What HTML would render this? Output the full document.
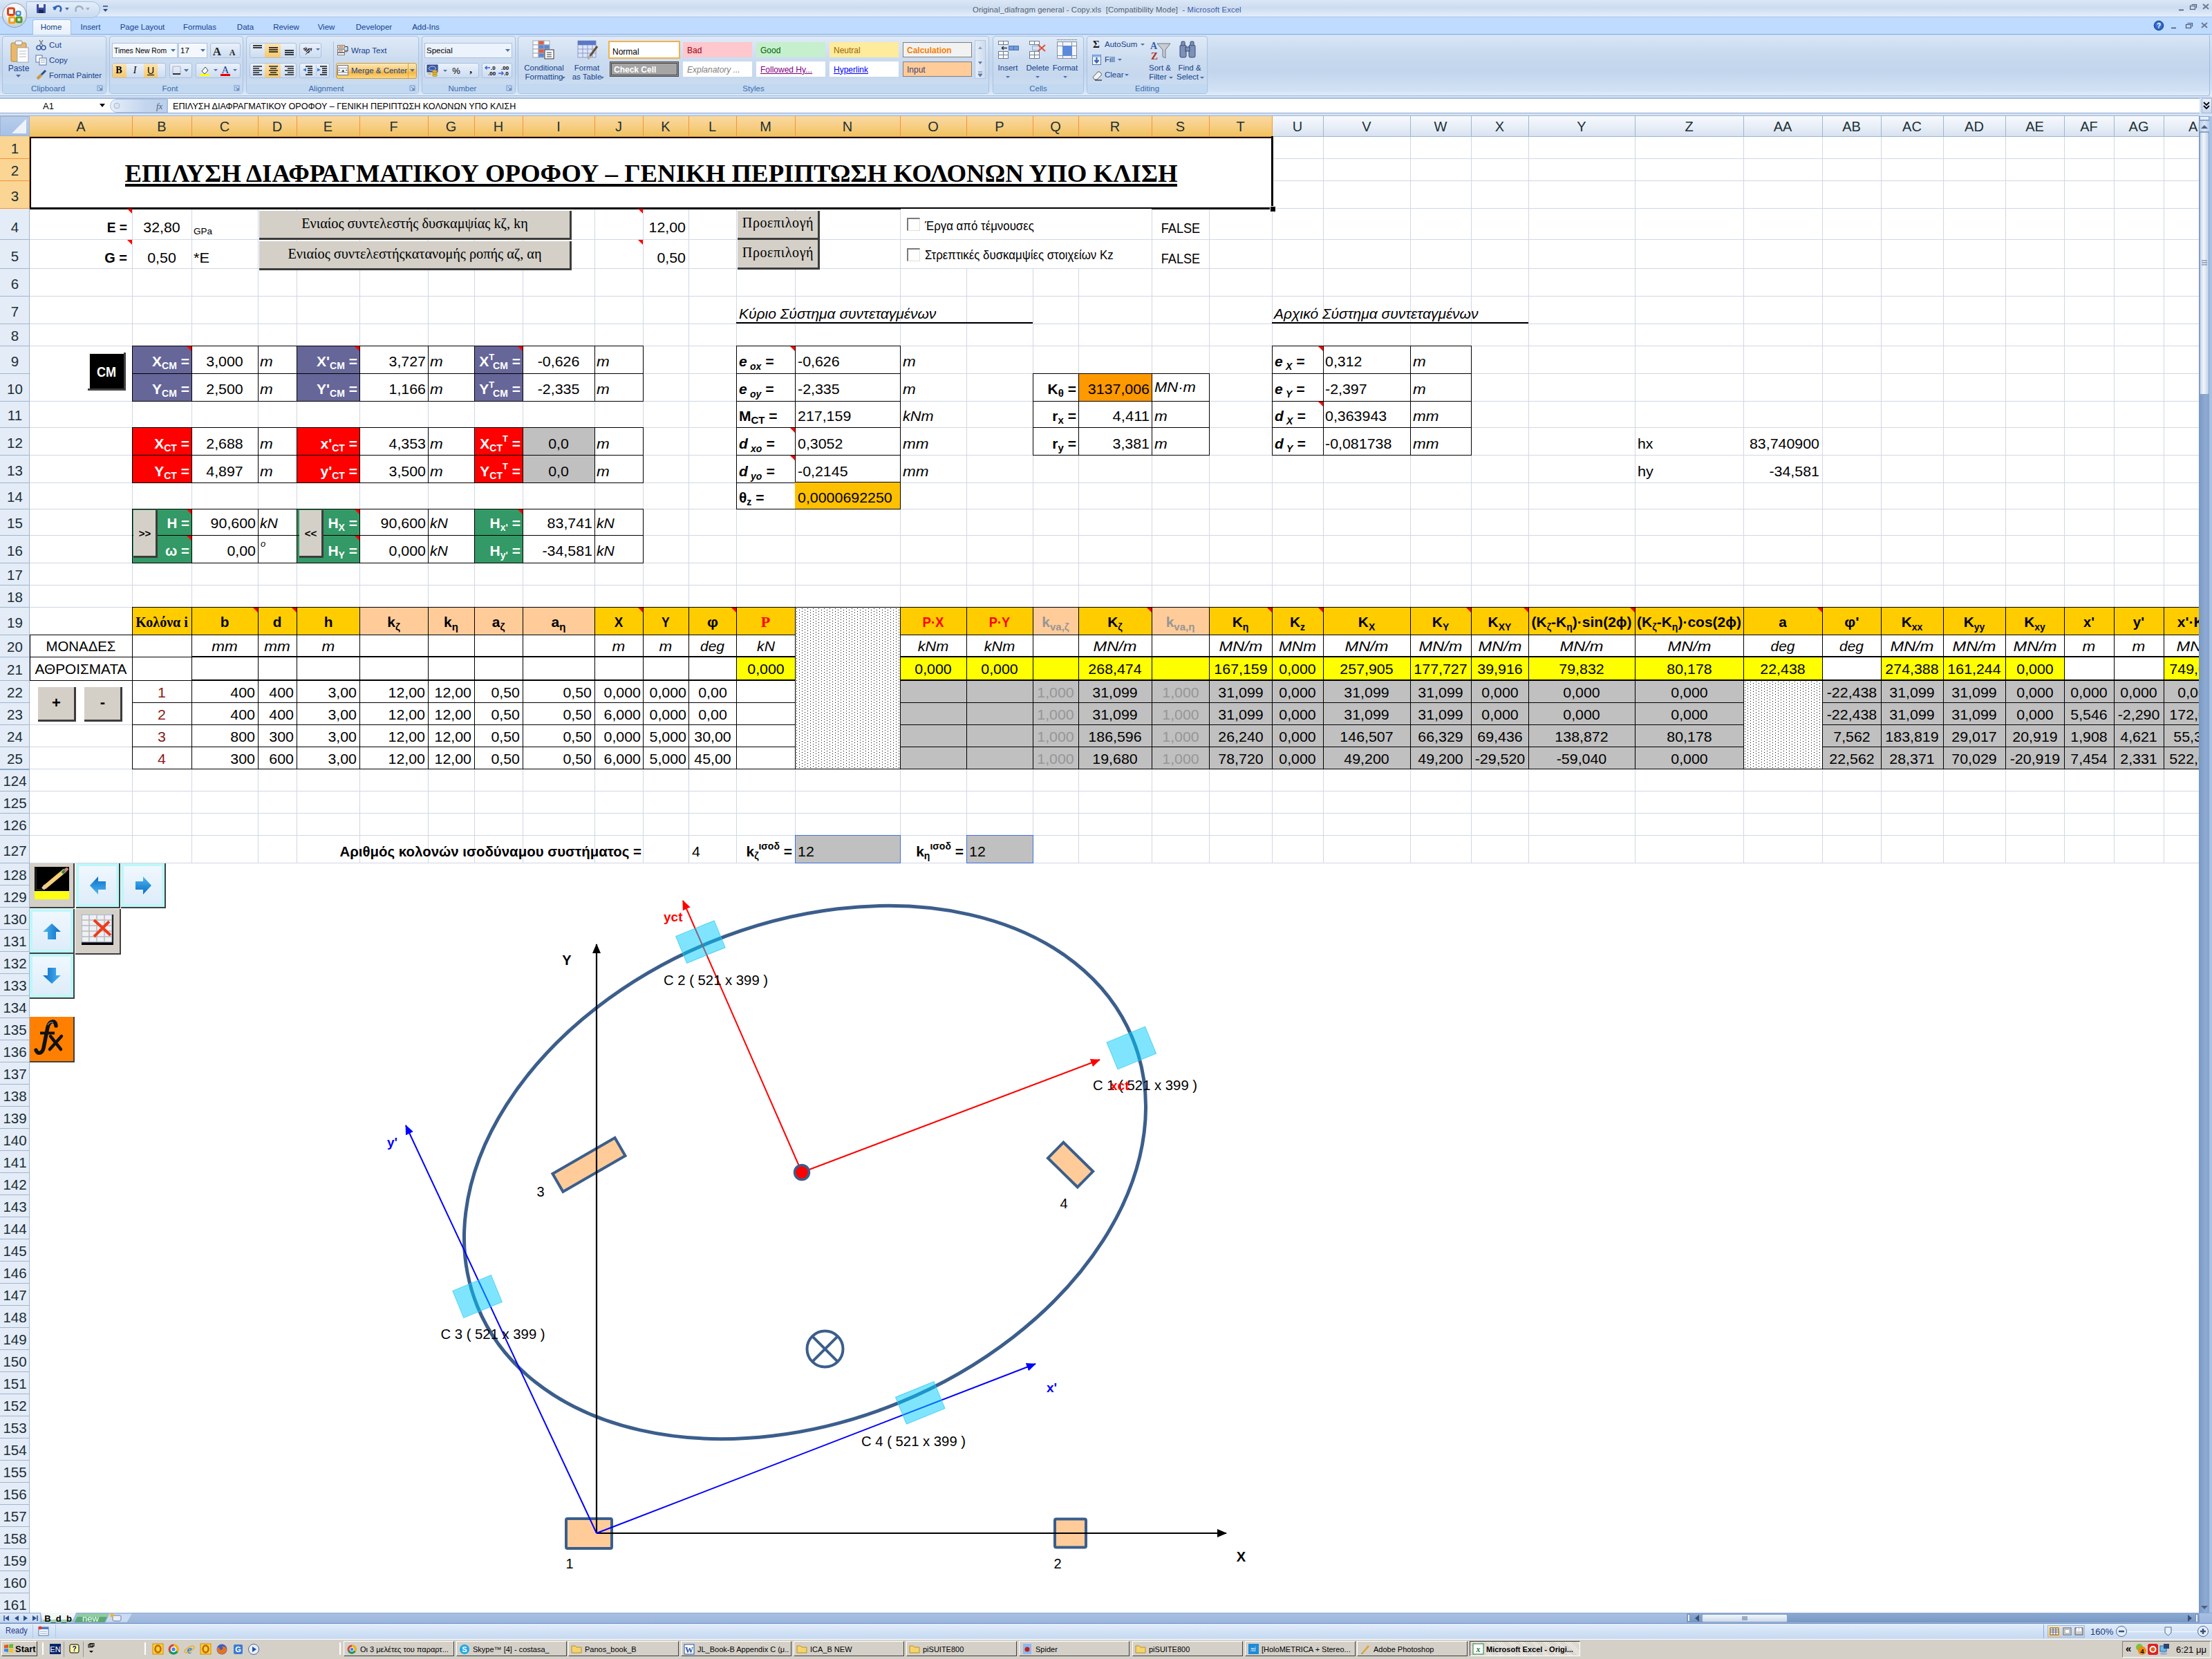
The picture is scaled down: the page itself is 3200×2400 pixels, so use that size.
<!DOCTYPE html><html><head><meta charset="utf-8"><style>html,body{margin:0;padding:0;width:3200px;height:2400px;overflow:hidden;background:#fff;position:relative;font-family:"Liberation Sans",sans-serif}</style></head><body><div style="position:absolute;left:0px;top:0px;width:3200px;height:25px;background:linear-gradient(#DBE7F6 0%,#CCDCF0 45%,#DDE9F8 80%,#E6F0FB 100%)"></div>
<div style="position:absolute;left:0px;top:24px;width:3200px;height:1px;background:#A9C4E8"></div>
<div style="position:absolute;left:0px;top:25px;width:3200px;height:25px;background:#BFDBFF"></div>
<div style="position:absolute;left:0px;top:49px;width:3200px;height:1px;background:#8DB2E3"></div>
<div style="position:absolute;left:38px;top:2px;width:105px;height:22px;background:linear-gradient(#E4EEFA,#C9DAF0);border:1px solid #A9C1E2;border-radius:0 12px 12px 0"></div>
<div style="position:absolute;left:53px;top:6px;width:13px;height:13px;background:#3A4FA8;border-radius:1px"></div>
<div style="position:absolute;left:56px;top:6px;width:7px;height:5px;background:#E8ECF6"></div>
<div style="position:absolute;left:56px;top:14px;width:7px;height:5px;background:#20284A"></div>
<svg style="position:absolute;left:74px;top:5px" width="60" height="16"><path d="M4 9 Q6 3 12 4 Q16 6 13 12" stroke="#2F64B8" stroke-width="2.5" fill="none"/><path d="M2 5 L6 10 L9 4Z" fill="#2F64B8"/><path d="M20 6 L26 6 L23 10Z" fill="#4A6FA8"/><path d="M36 12 Q34 5 40 4 Q45 4 46 9" stroke="#9FB1C9" stroke-width="2.5" fill="none"/><path d="M50 6 L56 6 L53 10Z" fill="#9FB1C9"/></svg>
<svg style="position:absolute;left:148px;top:7px" width="10" height="12"><path d="M1 2 H8" stroke="#2A4A7A" stroke-width="1.5"/><path d="M1 6 L8 6 L4.5 10Z" fill="#2A4A7A"/></svg>
<div style="position:absolute;left:3px;top:4px;width:36px;height:36px;border-radius:50%;background:radial-gradient(circle at 50% 30%,#FFFFFF 0%,#EEF2F8 45%,#C5D0DE 75%,#F4F7FB 100%);border:1px solid #8A98AC;box-sizing:border-box"></div>
<svg style="position:absolute;left:0px;top:0px" width="44" height="44"><rect x="11.5" y="12" width="9" height="9.5" rx="2" fill="none" stroke="#D9441C" stroke-width="3"/><rect x="23.5" y="16.5" width="6" height="5.5" rx="1.5" fill="none" stroke="#2E8FDA" stroke-width="2.2"/><rect x="13.5" y="25" width="8" height="8" rx="2" fill="none" stroke="#F2A10F" stroke-width="3"/><rect x="24" y="25" width="7" height="7" rx="1.5" fill="none" stroke="#4E9A2A" stroke-width="3"/><circle cx="20.5" cy="21.5" r="1" fill="#E86A20"/><circle cx="24.5" cy="21.5" r="1" fill="#2E8FDA"/><circle cx="20.5" cy="25" r="1" fill="#F2B020"/><circle cx="24.5" cy="25" r="1" fill="#5DAA2E"/></svg>
<div style="position:absolute;left:1407.0px;top:8.8px;width:600px;height:13.8px;line-height:11.5px;font-size:11.5px;font-family:'Liberation Sans', sans-serif;text-align:left;white-space:nowrap;transform:scaleX(0.983);transform-origin:0% 50%;color:#555E6C;letter-spacing:0.1px">Original_diafragm general - Copy.xls&nbsp;&nbsp;[Compatibility Mode]&nbsp; - <span style="color:#3B5BA8">Microsoft Excel</span></div>
<svg style="position:absolute;left:3148px;top:2px" width="52" height="16"><path d="M4 12.5 H11" stroke="#4A5A78" stroke-width="1.6"/><rect x="20.5" y="6.5" width="7" height="5" fill="none" stroke="#4A5A78" stroke-width="1.2"/><path d="M22.5 4.5 H29.5 V9.5" fill="none" stroke="#4A5A78" stroke-width="1.2"/><path d="M39 4 L47 11 M47 4 L39 11" stroke="#6A778E" stroke-width="1.8"/></svg>
<div style="position:absolute;left:47px;top:28px;width:54px;height:23px;background:linear-gradient(#F6F9FE,#E6EFFA);border:1px solid #A3BEE3;border-bottom:none;border-radius:3px 3px 0 0"></div>
<div style="position:absolute;left:14.0px;top:34.3px;width:120px;height:13.8px;line-height:11.5px;font-size:11.5px;font-family:'Liberation Sans', sans-serif;text-align:center;white-space:nowrap;color:#15428B">Home</div>
<div style="position:absolute;left:71.0px;top:34.3px;width:120px;height:13.8px;line-height:11.5px;font-size:11.5px;font-family:'Liberation Sans', sans-serif;text-align:center;white-space:nowrap;color:#15428B">Insert</div>
<div style="position:absolute;left:146.0px;top:34.3px;width:120px;height:13.8px;line-height:11.5px;font-size:11.5px;font-family:'Liberation Sans', sans-serif;text-align:center;white-space:nowrap;color:#15428B">Page Layout</div>
<div style="position:absolute;left:229.0px;top:34.3px;width:120px;height:13.8px;line-height:11.5px;font-size:11.5px;font-family:'Liberation Sans', sans-serif;text-align:center;white-space:nowrap;color:#15428B">Formulas</div>
<div style="position:absolute;left:295.0px;top:34.3px;width:120px;height:13.8px;line-height:11.5px;font-size:11.5px;font-family:'Liberation Sans', sans-serif;text-align:center;white-space:nowrap;color:#15428B">Data</div>
<div style="position:absolute;left:354.0px;top:34.3px;width:120px;height:13.8px;line-height:11.5px;font-size:11.5px;font-family:'Liberation Sans', sans-serif;text-align:center;white-space:nowrap;color:#15428B">Review</div>
<div style="position:absolute;left:412.0px;top:34.3px;width:120px;height:13.8px;line-height:11.5px;font-size:11.5px;font-family:'Liberation Sans', sans-serif;text-align:center;white-space:nowrap;color:#15428B">View</div>
<div style="position:absolute;left:481.0px;top:34.3px;width:120px;height:13.8px;line-height:11.5px;font-size:11.5px;font-family:'Liberation Sans', sans-serif;text-align:center;white-space:nowrap;color:#15428B">Developer</div>
<div style="position:absolute;left:556.0px;top:34.3px;width:120px;height:13.8px;line-height:11.5px;font-size:11.5px;font-family:'Liberation Sans', sans-serif;text-align:center;white-space:nowrap;color:#15428B">Add-Ins</div>
<svg style="position:absolute;left:3114px;top:29px" width="86" height="20"><circle cx="9" cy="8" r="6.8" fill="#2A62C8" stroke="#1A3E8A"/><circle cx="9" cy="7" r="4.5" fill="#4A86E8" opacity="0.6"/><text x="9" y="12" font-size="10" font-family="Liberation Sans" font-weight="bold" fill="#fff" text-anchor="middle">?</text><path d="M27 11.5 H34" stroke="#4A5A78" stroke-width="1.6"/><rect x="48.5" y="6.5" width="7" height="5" fill="none" stroke="#4A5A78" stroke-width="1.2"/><path d="M50.5 4.5 H57.5 V9.5" fill="none" stroke="#4A5A78" stroke-width="1.2"/><path d="M71 4 L79 11 M79 4 L71 11" stroke="#6A778E" stroke-width="1.8"/></svg>
<div style="position:absolute;left:0px;top:50px;width:3200px;height:90px;background:linear-gradient(#D9E6F6 0%,#C9DAEF 30%,#C2D5EC 60%,#D2E2F5 90%,#E4EFFB 100%)"></div>
<div style="position:absolute;left:-4px;top:50px;width:3201px;height:89px;border:1px solid #9FBBE0;border-radius:3px;box-sizing:border-box;border-top-color:#BFD5F2"></div>
<div style="position:absolute;left:0px;top:139px;width:3200px;height:1px;background:#E8F1FC"></div>
<div style="position:absolute;left:0px;top:140px;width:3200px;height:2px;background:#A5BEDC"></div>
<div style="position:absolute;left:3px;top:52px;width:151px;height:84px;border:1px solid #A9C2E1;border-radius:4px;background:linear-gradient(#DFEAF7 0%,#CCDCF0 40%,#C6D8EE 70%,#D4E3F5 100%);box-sizing:border-box"></div>
<div style="position:absolute;left:4px;top:121px;width:149px;height:14px;background:#C2D9F1;border-radius:0 0 3px 3px"></div>
<div style="position:absolute;left:-6.0px;top:123.3px;width:151px;height:13.8px;line-height:11.5px;font-size:11.5px;font-family:'Liberation Sans', sans-serif;text-align:center;white-space:nowrap;color:#3E6AAA">Clipboard</div>
<svg style="position:absolute;left:140px;top:123px" width="10" height="10"><rect x="1" y="1" width="7" height="7" fill="none" stroke="#7A98C4"/><path d="M3 3 L7 7 M7 4 V7 H4" stroke="#4B6FA8" fill="none"/></svg>
<div style="position:absolute;left:158px;top:52px;width:194px;height:84px;border:1px solid #A9C2E1;border-radius:4px;background:linear-gradient(#DFEAF7 0%,#CCDCF0 40%,#C6D8EE 70%,#D4E3F5 100%);box-sizing:border-box"></div>
<div style="position:absolute;left:159px;top:121px;width:192px;height:14px;background:#C2D9F1;border-radius:0 0 3px 3px"></div>
<div style="position:absolute;left:149.0px;top:123.3px;width:194px;height:13.8px;line-height:11.5px;font-size:11.5px;font-family:'Liberation Sans', sans-serif;text-align:center;white-space:nowrap;color:#3E6AAA">Font</div>
<svg style="position:absolute;left:338px;top:123px" width="10" height="10"><rect x="1" y="1" width="7" height="7" fill="none" stroke="#7A98C4"/><path d="M3 3 L7 7 M7 4 V7 H4" stroke="#4B6FA8" fill="none"/></svg>
<div style="position:absolute;left:356px;top:52px;width:250px;height:84px;border:1px solid #A9C2E1;border-radius:4px;background:linear-gradient(#DFEAF7 0%,#CCDCF0 40%,#C6D8EE 70%,#D4E3F5 100%);box-sizing:border-box"></div>
<div style="position:absolute;left:357px;top:121px;width:248px;height:14px;background:#C2D9F1;border-radius:0 0 3px 3px"></div>
<div style="position:absolute;left:347.0px;top:123.3px;width:250px;height:13.8px;line-height:11.5px;font-size:11.5px;font-family:'Liberation Sans', sans-serif;text-align:center;white-space:nowrap;color:#3E6AAA">Alignment</div>
<svg style="position:absolute;left:592px;top:123px" width="10" height="10"><rect x="1" y="1" width="7" height="7" fill="none" stroke="#7A98C4"/><path d="M3 3 L7 7 M7 4 V7 H4" stroke="#4B6FA8" fill="none"/></svg>
<div style="position:absolute;left:610px;top:52px;width:136px;height:84px;border:1px solid #A9C2E1;border-radius:4px;background:linear-gradient(#DFEAF7 0%,#CCDCF0 40%,#C6D8EE 70%,#D4E3F5 100%);box-sizing:border-box"></div>
<div style="position:absolute;left:611px;top:121px;width:134px;height:14px;background:#C2D9F1;border-radius:0 0 3px 3px"></div>
<div style="position:absolute;left:601.0px;top:123.3px;width:136px;height:13.8px;line-height:11.5px;font-size:11.5px;font-family:'Liberation Sans', sans-serif;text-align:center;white-space:nowrap;color:#3E6AAA">Number</div>
<svg style="position:absolute;left:732px;top:123px" width="10" height="10"><rect x="1" y="1" width="7" height="7" fill="none" stroke="#7A98C4"/><path d="M3 3 L7 7 M7 4 V7 H4" stroke="#4B6FA8" fill="none"/></svg>
<div style="position:absolute;left:749px;top:52px;width:682px;height:84px;border:1px solid #A9C2E1;border-radius:4px;background:linear-gradient(#DFEAF7 0%,#CCDCF0 40%,#C6D8EE 70%,#D4E3F5 100%);box-sizing:border-box"></div>
<div style="position:absolute;left:750px;top:121px;width:680px;height:14px;background:#C2D9F1;border-radius:0 0 3px 3px"></div>
<div style="position:absolute;left:749.0px;top:123.3px;width:682px;height:13.8px;line-height:11.5px;font-size:11.5px;font-family:'Liberation Sans', sans-serif;text-align:center;white-space:nowrap;color:#3E6AAA">Styles</div>
<div style="position:absolute;left:1436px;top:52px;width:132px;height:84px;border:1px solid #A9C2E1;border-radius:4px;background:linear-gradient(#DFEAF7 0%,#CCDCF0 40%,#C6D8EE 70%,#D4E3F5 100%);box-sizing:border-box"></div>
<div style="position:absolute;left:1437px;top:121px;width:130px;height:14px;background:#C2D9F1;border-radius:0 0 3px 3px"></div>
<div style="position:absolute;left:1436.0px;top:123.3px;width:132px;height:13.8px;line-height:11.5px;font-size:11.5px;font-family:'Liberation Sans', sans-serif;text-align:center;white-space:nowrap;color:#3E6AAA">Cells</div>
<div style="position:absolute;left:1572px;top:52px;width:175px;height:84px;border:1px solid #A9C2E1;border-radius:4px;background:linear-gradient(#DFEAF7 0%,#CCDCF0 40%,#C6D8EE 70%,#D4E3F5 100%);box-sizing:border-box"></div>
<div style="position:absolute;left:1573px;top:121px;width:173px;height:14px;background:#C2D9F1;border-radius:0 0 3px 3px"></div>
<div style="position:absolute;left:1572.0px;top:123.3px;width:175px;height:13.8px;line-height:11.5px;font-size:11.5px;font-family:'Liberation Sans', sans-serif;text-align:center;white-space:nowrap;color:#3E6AAA">Editing</div>
<svg style="position:absolute;left:14px;top:56px" width="30" height="36"><rect x="2" y="6" width="22" height="27" rx="2" fill="#E9B86A" stroke="#B88532"/><rect x="8" y="3" width="10" height="6" rx="2" fill="#F3F3F3" stroke="#8C8C8C"/><rect x="11" y="13" width="16" height="21" fill="#fff" stroke="#9AA3B0"/><path d="M14 18 H24 M14 22 H24 M14 26 H24" stroke="#B0B8C4"/></svg>
<div style="position:absolute;left:-3.0px;top:92.8px;width:60px;height:14.4px;line-height:12px;font-size:12px;font-family:'Liberation Sans', sans-serif;text-align:center;white-space:nowrap;color:#15428B">Paste</div>
<svg style="position:absolute;left:23px;top:108px" width="8" height="5"><path d="M0 0 H7 L3.5 4Z" fill="#4A6FA8"/></svg>
<svg style="position:absolute;left:52px;top:57px" width="16" height="16"><circle cx="4" cy="12" r="3" fill="none" stroke="#3B5FA8" stroke-width="1.6"/><circle cx="11" cy="12" r="3" fill="none" stroke="#3B5FA8" stroke-width="1.6"/><path d="M5 9 L10 1 M10 9 L5 1" stroke="#707070" stroke-width="1.3"/></svg>
<div style="position:absolute;left:71.0px;top:60.3px;width:600px;height:13.8px;line-height:11.5px;font-size:11.5px;font-family:'Liberation Sans', sans-serif;text-align:left;white-space:nowrap;color:#15428B">Cut</div>
<svg style="position:absolute;left:51px;top:79px" width="18" height="16"><rect x="1" y="1" width="9" height="10" fill="#fff" stroke="#5A78A8"/><rect x="6" y="5" width="10" height="10" fill="#fff" stroke="#5A78A8"/><path d="M8 8 H14 M8 11 H14" stroke="#8AA0C0"/></svg>
<div style="position:absolute;left:71.0px;top:82.3px;width:600px;height:13.8px;line-height:11.5px;font-size:11.5px;font-family:'Liberation Sans', sans-serif;text-align:left;white-space:nowrap;color:#15428B">Copy</div>
<svg style="position:absolute;left:52px;top:100px" width="18" height="16"><path d="M2 14 L8 8" stroke="#C89A40" stroke-width="4"/><path d="M8 8 L14 2" stroke="#2A4C8A" stroke-width="3"/></svg>
<div style="position:absolute;left:71.0px;top:104.3px;width:600px;height:13.8px;line-height:11.5px;font-size:11.5px;font-family:'Liberation Sans', sans-serif;text-align:left;white-space:nowrap;color:#15428B">Format Painter</div>
<div style="position:absolute;left:162px;top:62px;width:95px;height:22px;background:#F4F8FD;border:1px solid #ABC1DE;box-sizing:border-box"></div>
<div style="position:absolute;left:165.0px;top:68.3px;width:600px;height:13.8px;line-height:11.5px;font-size:11.5px;font-family:'Liberation Sans', sans-serif;text-align:left;white-space:nowrap;transform:scaleX(0.900);transform-origin:0% 50%;color:#000">Times New Rom</div>
<svg style="position:absolute;left:247px;top:71px" width="8" height="5"><path d="M0 0 H7 L3.5 4Z" fill="#4A6FA8"/></svg>
<div style="position:absolute;left:258px;top:62px;width:42px;height:22px;background:#F4F8FD;border:1px solid #ABC1DE;box-sizing:border-box"></div>
<div style="position:absolute;left:261.0px;top:68.3px;width:600px;height:13.8px;line-height:11.5px;font-size:11.5px;font-family:'Liberation Sans', sans-serif;text-align:left;white-space:nowrap;color:#000">17</div>
<svg style="position:absolute;left:290px;top:71px" width="8" height="5"><path d="M0 0 H7 L3.5 4Z" fill="#4A6FA8"/></svg>
<div style="position:absolute;left:304px;top:62px;width:44px;height:22px;background:linear-gradient(#EAF1FB,#CCDCF0);border:1px solid #ABC1DE;border-radius:3px;box-sizing:border-box"></div>
<div style="position:absolute;left:304.0px;top:65.8px;width:20px;height:20.4px;line-height:17px;font-size:17px;font-family:'Liberation Serif', serif;text-align:center;white-space:nowrap;font-weight:bold;color:#222">A</div>
<div style="position:absolute;left:326.0px;top:70.0px;width:20px;height:14.4px;line-height:12px;font-size:12px;font-family:'Liberation Serif', serif;text-align:center;white-space:nowrap;font-weight:bold;color:#222">A</div>
<div style="position:absolute;left:162px;top:91px;width:78px;height:22px;background:linear-gradient(#EAF1FB,#CCDCF0);border:1px solid #ABC1DE;border-radius:3px;box-sizing:border-box"></div>
<div style="position:absolute;left:163px;top:92px;width:20px;height:20px;background:linear-gradient(#FBE3B0,#F8C86A)"></div>
<div style="position:absolute;left:208px;top:92px;width:20px;height:20px;background:linear-gradient(#FBE3B0,#F8C86A)"></div>
<div style="position:absolute;left:162.0px;top:95.3px;width:20px;height:16.8px;line-height:14px;font-size:14px;font-family:'Liberation Serif', serif;text-align:center;white-space:nowrap;font-weight:bold">B</div>
<div style="position:absolute;left:185.0px;top:95.3px;width:20px;height:16.8px;line-height:14px;font-size:14px;font-family:'Liberation Serif', serif;text-align:center;white-space:nowrap;font-style:italic">I</div>
<div style="position:absolute;left:208.0px;top:95.1px;width:20px;height:16.8px;line-height:14px;font-size:14px;font-family:'Liberation Sans', sans-serif;text-align:center;white-space:nowrap;text-decoration:underline">U</div>
<div style="position:absolute;left:245px;top:91px;width:33px;height:22px;background:linear-gradient(#EAF1FB,#CCDCF0);border:1px solid #ABC1DE;border-radius:3px;box-sizing:border-box"></div>
<svg style="position:absolute;left:249px;top:95px" width="26" height="15"><rect x="1" y="1" width="11" height="11" fill="none" stroke="#777" stroke-dasharray="1,1"/><path d="M1 12 H12" stroke="#000" stroke-width="1.5"/><path d="M17 5 H24 L20.5 9Z" fill="#4A6FA8"/></svg>
<div style="position:absolute;left:283px;top:91px;width:65px;height:22px;background:linear-gradient(#EAF1FB,#CCDCF0);border:1px solid #ABC1DE;border-radius:3px;box-sizing:border-box"></div>
<svg style="position:absolute;left:286px;top:93px" width="60" height="19"><path d="M6 10 L11 4 L15 9 L10 14Z" fill="#fff" stroke="#444"/><rect x="3" y="14" width="14" height="3" fill="#FFFF00"/><path d="M23 7 H29 L26 10Z" fill="#4A6FA8"/><text x="40" y="13" font-family="Liberation Serif" font-size="15" fill="#1A3A9A" text-anchor="middle">A</text><rect x="33" y="14" width="14" height="3" fill="#E80000"/><path d="M51 7 H57 L54 10Z" fill="#4A6FA8"/></svg>
<div style="position:absolute;left:361px;top:62px;width:68px;height:22px;background:linear-gradient(#EAF1FB,#CCDCF0);border:1px solid #ABC1DE;border-radius:3px;box-sizing:border-box"></div>
<div style="position:absolute;left:433px;top:62px;width:32px;height:22px;background:linear-gradient(#EAF1FB,#CCDCF0);border:1px solid #ABC1DE;border-radius:3px;box-sizing:border-box"></div>
<div style="position:absolute;left:361px;top:91px;width:68px;height:22px;background:linear-gradient(#EAF1FB,#CCDCF0);border:1px solid #ABC1DE;border-radius:3px;box-sizing:border-box"></div>
<div style="position:absolute;left:433px;top:91px;width:44px;height:22px;background:linear-gradient(#EAF1FB,#CCDCF0);border:1px solid #ABC1DE;border-radius:3px;box-sizing:border-box"></div>
<div style="position:absolute;left:383px;top:63px;width:23px;height:20px;background:linear-gradient(#FBE3B0,#F8C86A)"></div>
<div style="position:absolute;left:383px;top:92px;width:23px;height:20px;background:linear-gradient(#FBE3B0,#F8C86A)"></div>
<svg style="position:absolute;left:361px;top:60px" width="70" height="55"><path d="M5 6 H18" stroke="#000" stroke-width="1.5"/><path d="M5 9 H18" stroke="#000" stroke-width="1.5"/><path d="M28 9 H41" stroke="#000" stroke-width="1.5"/><path d="M28 12 H41" stroke="#000" stroke-width="1.5"/><path d="M28 15 H41" stroke="#000" stroke-width="1.5"/><path d="M51 13 H64" stroke="#000" stroke-width="1.5"/><path d="M51 16 H64" stroke="#000" stroke-width="1.5"/><path d="M51 19 H64" stroke="#000" stroke-width="1.5"/><path d="M5 36 H18" stroke="#000" stroke-width="1.3"/><path d="M5 39 H14" stroke="#000" stroke-width="1.3"/><path d="M5 42 H18" stroke="#000" stroke-width="1.3"/><path d="M5 45 H14" stroke="#000" stroke-width="1.3"/><path d="M5 48 H18" stroke="#000" stroke-width="1.3"/><path d="M28.0 36 H41.0" stroke="#000" stroke-width="1.3"/><path d="M30.0 39 H39.0" stroke="#000" stroke-width="1.3"/><path d="M28.0 42 H41.0" stroke="#000" stroke-width="1.3"/><path d="M30.0 45 H39.0" stroke="#000" stroke-width="1.3"/><path d="M28.0 48 H41.0" stroke="#000" stroke-width="1.3"/><path d="M51 36 H64" stroke="#000" stroke-width="1.3"/><path d="M55 39 H64" stroke="#000" stroke-width="1.3"/><path d="M51 42 H64" stroke="#000" stroke-width="1.3"/><path d="M55 45 H64" stroke="#000" stroke-width="1.3"/><path d="M51 48 H64" stroke="#000" stroke-width="1.3"/></svg>
<svg style="position:absolute;left:436px;top:63px" width="30" height="18"><text x="8" y="12" font-size="10" font-family="Liberation Serif" font-weight="bold" fill="#111" transform="rotate(45 8 9)" text-anchor="middle">ab</text><path d="M6 16 L15 7" stroke="#333" stroke-width="1"/><path d="M15 7 L11 8 M15 7 L14 11" stroke="#333" stroke-width="1"/><path d="M21 7 H27 L24 10Z" fill="#4A6FA8"/></svg>
<svg style="position:absolute;left:437px;top:93px" width="40" height="18"><path d="M5 3 H15 M8 6 H15 M8 9 H15 M8 12 H15 M5 15 H15" stroke="#111" stroke-width="1.3"/><path d="M1 8 L6 5.5 V10.5Z" fill="#3A7AD8"/><path d="M26 3 H36 M29 6 H36 M29 9 H36 M29 12 H36 M26 15 H36" stroke="#111" stroke-width="1.3"/><path d="M22 5.5 L27 8 L22 10.5Z" fill="#3A7AD8"/><path d="M20.5 1 V17" stroke="#B8C8E0"/></svg>
<div style="position:absolute;left:482px;top:60px;width:1px;height:53px;background:#A9C2E1"></div>
<svg style="position:absolute;left:487px;top:64px" width="18" height="17"><rect x="1.5" y="1.5" width="10" height="4" fill="#fff" stroke="#777"/><rect x="1.5" y="7.5" width="10" height="4" fill="#fff" stroke="#777"/><rect x="1.5" y="12.5" width="10" height="3" fill="#fff" stroke="#777"/><path d="M3 3.5 H10 M3 9.5 H9" stroke="#D07830" stroke-width="1.3"/><path d="M12 3.5 H16 V10 H13 M14 8.5 L12.5 10 L14 11.5" stroke="#333" fill="none"/></svg>
<div style="position:absolute;left:508.0px;top:68.3px;width:600px;height:13.8px;line-height:11.5px;font-size:11.5px;font-family:'Liberation Sans', sans-serif;text-align:left;white-space:nowrap;color:#15428B">Wrap Text</div>
<div style="position:absolute;left:486px;top:91px;width:117px;height:23px;background:linear-gradient(#FDE8B4 0%,#F9C86A 50%,#F7B640 60%,#FBD785 100%);border:1px solid #C99A3E;border-radius:3px;box-sizing:border-box"></div>
<svg style="position:absolute;left:488px;top:94px" width="17" height="16"><rect x="0.5" y="0.5" width="15" height="14" fill="#fff" stroke="#607090"/><path d="M0.5 4.5 H15.5 M0.5 10.5 H15.5" stroke="#8090B0"/><rect x="1" y="5" width="14" height="5" fill="#fff"/><text x="8" y="9.5" font-size="7" font-family="Liberation Serif" font-weight="bold" text-anchor="middle">a</text><path d="M1.5 7.5 H4 M12 7.5 H14.5" stroke="#333"/></svg>
<div style="position:absolute;left:508.0px;top:97.3px;width:600px;height:13.8px;line-height:11.5px;font-size:11.5px;font-family:'Liberation Sans', sans-serif;text-align:left;white-space:nowrap;color:#15428B">Merge &amp; Center</div>
<div style="position:absolute;left:590px;top:92px;width:1px;height:21px;background:#D6A44E"></div>
<svg style="position:absolute;left:593px;top:100px" width="8" height="5"><path d="M0 0 H7 L3.5 4Z" fill="#4A6FA8"/></svg>
<div style="position:absolute;left:614px;top:62px;width:127px;height:22px;background:#EDF3FC;border:1px solid #ABC1DE;box-sizing:border-box"></div>
<div style="position:absolute;left:617.0px;top:68.3px;width:600px;height:13.8px;line-height:11.5px;font-size:11.5px;font-family:'Liberation Sans', sans-serif;text-align:left;white-space:nowrap;color:#000">Special</div>
<svg style="position:absolute;left:731px;top:71px" width="8" height="5"><path d="M0 0 H7 L3.5 4Z" fill="#4A6FA8"/></svg>
<div style="position:absolute;left:614px;top:91px;width:79px;height:22px;background:linear-gradient(#EAF1FB,#CCDCF0);border:1px solid #ABC1DE;border-radius:3px;box-sizing:border-box"></div>
<div style="position:absolute;left:697px;top:91px;width:44px;height:22px;background:linear-gradient(#EAF1FB,#CCDCF0);border:1px solid #ABC1DE;border-radius:3px;box-sizing:border-box"></div>
<svg style="position:absolute;left:617px;top:93px" width="74" height="19"><rect x="1" y="1" width="15" height="10" fill="#3D5BA8" stroke="#2A3E78"/><ellipse cx="8.5" cy="6" rx="5" ry="3" fill="none" stroke="#B8D0F8"/><ellipse cx="12" cy="10" rx="3.5" ry="1.6" fill="#E8B830" stroke="#A07810" stroke-width="0.6"/><ellipse cx="12" cy="13" rx="3.5" ry="1.6" fill="#E8B830" stroke="#A07810" stroke-width="0.6"/><ellipse cx="12" cy="16" rx="3.5" ry="1.6" fill="#E8B830" stroke="#A07810" stroke-width="0.6"/><path d="M2 14 H7" stroke="#E8B830" stroke-width="2"/><path d="M24 8 H30 L27 11Z" fill="#4A6FA8"/><text x="43" y="14" font-size="13" font-family="Liberation Sans" text-anchor="middle">%</text><text x="64" y="12" font-size="15" font-family="Liberation Serif" font-weight="bold" text-anchor="middle">,</text></svg>
<svg style="position:absolute;left:699px;top:93px" width="42" height="19"><text x="11" y="8" font-size="8" font-family="Liberation Sans" font-weight="bold">.0</text><text x="7" y="16" font-size="8" font-family="Liberation Sans" font-weight="bold">.00</text><path d="M10 5 H3 M5.5 2.5 L3 5 L5.5 7.5" stroke="#2F64D8" stroke-width="1.4" fill="none"/><text x="26" y="8" font-size="8" font-family="Liberation Sans" font-weight="bold">.00</text><text x="30" y="16" font-size="8" font-family="Liberation Sans" font-weight="bold">.0</text><path d="M22 13 H29 M26.5 10.5 L29 13 L26.5 15.5" stroke="#2F64D8" stroke-width="1.4" fill="none"/></svg>
<svg style="position:absolute;left:769px;top:57px" width="36" height="32"><g stroke="#9AA6B6" fill="#fff"><rect x="2" y="2" width="8" height="6"/><rect x="10" y="2" width="8" height="6" fill="#E85A40"/><rect x="18" y="2" width="8" height="6"/><rect x="2" y="8" width="8" height="6"/><rect x="10" y="8" width="8" height="6" fill="#5A88D8"/><rect x="18" y="8" width="8" height="6" fill="#5A88D8"/><rect x="2" y="14" width="8" height="6"/><rect x="10" y="14" width="8" height="6" fill="#E85A40"/><rect x="2" y="20" width="8" height="6"/><rect x="10" y="20" width="8" height="6" fill="#5A88D8"/></g><rect x="19" y="15" width="13" height="13" fill="#fff" stroke="#333"/><path d="M22 19 H29 M22 22 H29 M22 25 H29" stroke="#333"/></svg>
<div style="position:absolute;left:747.0px;top:93.3px;width:80px;height:13.8px;line-height:11.5px;font-size:11.5px;font-family:'Liberation Sans', sans-serif;text-align:center;white-space:nowrap;color:#15428B">Conditional</div>
<div style="position:absolute;left:747.0px;top:106.3px;width:80px;height:13.8px;line-height:11.5px;font-size:11.5px;font-family:'Liberation Sans', sans-serif;text-align:center;white-space:nowrap;color:#15428B">Formatting</div>
<svg style="position:absolute;left:812px;top:111px" width="6" height="4"><path d="M0 0 H6 L3 3Z" fill="#4A6FA8"/></svg>
<svg style="position:absolute;left:834px;top:57px" width="34" height="32"><g stroke="#8A9AC8" fill="#DDE5F8"><rect x="2" y="2" width="26" height="24"/></g><path d="M2 8 H28 M2 14 H28 M2 20 H28 M9 2 V26 M16 2 V26 M23 2 V26" stroke="#8A9AC8"/><rect x="2" y="2" width="26" height="6" fill="#5A78C8"/><path d="M18 26 L30 10" stroke="#6A5030" stroke-width="3"/><path d="M16 28 L20 24" stroke="#B0B0B0" stroke-width="4"/></svg>
<div style="position:absolute;left:819.0px;top:93.3px;width:60px;height:13.8px;line-height:11.5px;font-size:11.5px;font-family:'Liberation Sans', sans-serif;text-align:center;white-space:nowrap;color:#15428B">Format</div>
<div style="position:absolute;left:819.0px;top:106.3px;width:60px;height:13.8px;line-height:11.5px;font-size:11.5px;font-family:'Liberation Sans', sans-serif;text-align:center;white-space:nowrap;color:#15428B">as Table</div>
<svg style="position:absolute;left:868px;top:111px" width="6" height="4"><path d="M0 0 H6 L3 3Z" fill="#4A6FA8"/></svg>
<div style="position:absolute;left:880px;top:59px;width:104px;height:26px;background:#fff;border:2px solid #F2B24C;box-sizing:border-box"></div>
<div style="position:absolute;left:886.0px;top:68.8px;width:600px;height:14.4px;line-height:12px;font-size:12px;font-family:'Liberation Sans', sans-serif;text-align:left;white-space:nowrap;color:#000">Normal</div>
<div style="position:absolute;left:988px;top:61px;width:100px;height:22px;background:#FFC7CE;box-sizing:border-box"></div>
<div style="position:absolute;left:994.0px;top:66.8px;width:600px;height:14.4px;line-height:12px;font-size:12px;font-family:'Liberation Sans', sans-serif;text-align:left;white-space:nowrap;color:#9C0006">Bad</div>
<div style="position:absolute;left:1094px;top:61px;width:100px;height:22px;background:#C6EFCE;box-sizing:border-box"></div>
<div style="position:absolute;left:1100.0px;top:66.8px;width:600px;height:14.4px;line-height:12px;font-size:12px;font-family:'Liberation Sans', sans-serif;text-align:left;white-space:nowrap;color:#006100">Good</div>
<div style="position:absolute;left:1200px;top:61px;width:100px;height:22px;background:#FFEB9C;box-sizing:border-box"></div>
<div style="position:absolute;left:1206.0px;top:66.8px;width:600px;height:14.4px;line-height:12px;font-size:12px;font-family:'Liberation Sans', sans-serif;text-align:left;white-space:nowrap;color:#9C6500">Neutral</div>
<div style="position:absolute;left:1306px;top:61px;width:100px;height:22px;background:#F2F2F2;border:1px solid #7F7F7F;box-sizing:border-box"></div>
<div style="position:absolute;left:1312.0px;top:66.8px;width:600px;height:14.4px;line-height:12px;font-size:12px;font-family:'Liberation Sans', sans-serif;text-align:left;white-space:nowrap;color:#FA7D00;font-weight:bold">Calculation</div>
<div style="position:absolute;left:882px;top:89px;width:100px;height:22px;background:#A5A5A5;border:3px double #3F3F3F;box-sizing:border-box"></div>
<div style="position:absolute;left:888.0px;top:94.8px;width:600px;height:14.4px;line-height:12px;font-size:12px;font-family:'Liberation Sans', sans-serif;text-align:left;white-space:nowrap;color:#fff;font-weight:bold">Check Cell</div>
<div style="position:absolute;left:988px;top:89px;width:100px;height:22px;background:#fff;box-sizing:border-box"></div>
<div style="position:absolute;left:994.0px;top:94.8px;width:600px;height:14.4px;line-height:12px;font-size:12px;font-family:'Liberation Sans', sans-serif;text-align:left;white-space:nowrap;color:#7F7F7F;font-style:italic">Explanatory ...</div>
<div style="position:absolute;left:1094px;top:89px;width:100px;height:22px;background:#fff;box-sizing:border-box"></div>
<div style="position:absolute;left:1100.0px;top:94.8px;width:600px;height:14.4px;line-height:12px;font-size:12px;font-family:'Liberation Sans', sans-serif;text-align:left;white-space:nowrap;color:#800080;text-decoration:underline">Followed Hy...</div>
<div style="position:absolute;left:1200px;top:89px;width:100px;height:22px;background:#fff;box-sizing:border-box"></div>
<div style="position:absolute;left:1206.0px;top:94.8px;width:600px;height:14.4px;line-height:12px;font-size:12px;font-family:'Liberation Sans', sans-serif;text-align:left;white-space:nowrap;color:#0000FF;text-decoration:underline">Hyperlink</div>
<div style="position:absolute;left:1306px;top:89px;width:100px;height:22px;background:#FFCC99;border:1px solid #7F7F7F;box-sizing:border-box"></div>
<div style="position:absolute;left:1312.0px;top:94.8px;width:600px;height:14.4px;line-height:12px;font-size:12px;font-family:'Liberation Sans', sans-serif;text-align:left;white-space:nowrap;color:#3F3F76">Input</div>
<div style="position:absolute;left:1410px;top:58px;width:16px;height:56px;background:linear-gradient(90deg,#E4ECF7,#D0DDEF);border:1px solid #B4C6E0;box-sizing:border-box"></div>
<svg style="position:absolute;left:1412px;top:62px" width="12" height="50"><path d="M3 9 L6 5 L9 9Z" fill="#8EA3C2"/><path d="M3 27 H9 L6 31Z" fill="#5A78A8"/><path d="M3 42 H9 M3 45 H9 L6 49Z" stroke="#5A78A8" fill="#5A78A8"/></svg>
<div style="position:absolute;left:1428.0px;top:93.3px;width:60px;height:13.8px;line-height:11.5px;font-size:11.5px;font-family:'Liberation Sans', sans-serif;text-align:center;white-space:nowrap;color:#15428B">Insert</div>
<svg style="position:absolute;left:1455px;top:110px" width="6" height="4"><path d="M0 0 H6 L3 3Z" fill="#4A6FA8"/></svg>
<div style="position:absolute;left:1471.0px;top:93.3px;width:60px;height:13.8px;line-height:11.5px;font-size:11.5px;font-family:'Liberation Sans', sans-serif;text-align:center;white-space:nowrap;color:#15428B">Delete</div>
<svg style="position:absolute;left:1498px;top:110px" width="6" height="4"><path d="M0 0 H6 L3 3Z" fill="#4A6FA8"/></svg>
<div style="position:absolute;left:1511.0px;top:93.3px;width:60px;height:13.8px;line-height:11.5px;font-size:11.5px;font-family:'Liberation Sans', sans-serif;text-align:center;white-space:nowrap;color:#15428B">Format</div>
<svg style="position:absolute;left:1538px;top:110px" width="6" height="4"><path d="M0 0 H6 L3 3Z" fill="#4A6FA8"/></svg>
<svg style="position:absolute;left:1440px;top:56px" width="125" height="34"><g fill="#fff" stroke="#6A7A94" stroke-width="1"><rect x="4.5" y="3.5" width="7" height="5"/><rect x="11.5" y="3.5" width="7" height="5"/><rect x="4.5" y="18.5" width="7" height="5"/><rect x="11.5" y="18.5" width="7" height="5"/><rect x="4.5" y="23.5" width="7" height="5"/><rect x="11.5" y="23.5" width="7" height="5"/><rect x="49.5" y="3.5" width="7" height="5"/><rect x="56.5" y="3.5" width="7" height="5"/><rect x="49.5" y="18.5" width="7" height="5"/><rect x="56.5" y="18.5" width="7" height="5"/><rect x="49.5" y="23.5" width="7" height="5"/><rect x="56.5" y="23.5" width="7" height="5"/></g><g fill="#6F9DE0" stroke="#5070A8"><rect x="19.5" y="10.5" width="7" height="6"/><rect x="26.5" y="10.5" width="7" height="6"/></g><path d="M9 13.5 H17 M9 13.5 L12 11 M9 13.5 L12 16" stroke="#333" stroke-width="1.3" fill="none"/><rect x="53.5" y="10.5" width="10" height="6" fill="none" stroke="#5070A8" stroke-dasharray="1,1"/><path d="M62 9 L72 18 M72 9 L62 18" stroke="#E84A2A" stroke-width="1.8"/><g fill="#F4F6FA" stroke="#8090A8"><rect x="89.5" y="4.5" width="28" height="24"/></g><path d="M89.5 10.5 H117.5 M89.5 24.5 H117.5 M97.5 4.5 V28.5 M110.5 4.5 V28.5" stroke="#8090A8"/><rect x="97.5" y="10.5" width="13" height="14" fill="#5A8AE0"/><path d="M89 1.5 H118" stroke="#555" stroke-dasharray="1,1"/></svg>
<div style="position:absolute;left:1576.0px;top:57.4px;width:20px;height:18.0px;line-height:15px;font-size:15px;font-family:'Liberation Serif', serif;text-align:center;white-space:nowrap;font-weight:bold;color:#111">Σ</div>
<div style="position:absolute;left:1598.0px;top:59.3px;width:600px;height:13.8px;line-height:11.5px;font-size:11.5px;font-family:'Liberation Sans', sans-serif;text-align:left;white-space:nowrap;color:#15428B">AutoSum</div>
<svg style="position:absolute;left:1650px;top:63px" width="6" height="4"><path d="M0 0 H6 L3 3Z" fill="#4A6FA8"/></svg>
<svg style="position:absolute;left:1579px;top:78px" width="15" height="17"><rect x="1.5" y="1.5" width="12" height="14" fill="#EAF0FA" stroke="#5A78A8"/><rect x="1.5" y="1.5" width="12" height="3" fill="#8AB0E8"/><path d="M7.5 5 V12 M4.5 9 L7.5 12.5 L10.5 9" stroke="#2F64B8" stroke-width="2" fill="none"/></svg>
<div style="position:absolute;left:1598.0px;top:81.3px;width:600px;height:13.8px;line-height:11.5px;font-size:11.5px;font-family:'Liberation Sans', sans-serif;text-align:left;white-space:nowrap;color:#15428B">Fill</div>
<svg style="position:absolute;left:1617px;top:85px" width="6" height="4"><path d="M0 0 H6 L3 3Z" fill="#4A6FA8"/></svg>
<svg style="position:absolute;left:1579px;top:102px" width="17" height="15"><path d="M2 10 L9 2 Q11 1 13 3 L14 4 Q15 6 14 7 L8 13 H4Z" fill="#F2F2F2" stroke="#606060"/><path d="M5 14 H15" stroke="#222" stroke-width="1.2"/></svg>
<div style="position:absolute;left:1598.0px;top:103.3px;width:600px;height:13.8px;line-height:11.5px;font-size:11.5px;font-family:'Liberation Sans', sans-serif;text-align:left;white-space:nowrap;color:#15428B">Clear</div>
<svg style="position:absolute;left:1627px;top:107px" width="6" height="4"><path d="M0 0 H6 L3 3Z" fill="#4A6FA8"/></svg>
<svg style="position:absolute;left:1663px;top:57px" width="80" height="32"><text x="6" y="14" font-size="14" font-family="Liberation Serif" font-weight="bold" fill="#3060B0" text-anchor="middle">A</text><text x="7" y="29" font-size="15" font-family="Liberation Serif" font-weight="bold" fill="#B03020" text-anchor="middle">Z</text><path d="M11 6 H30 L23 15 V27 L19 25 V15Z" fill="#C8CCD4" stroke="#707880"/><g fill="#7C90B8" stroke="#3A4A70"><rect x="44" y="8" width="9" height="18" rx="2"/><rect x="57" y="8" width="9" height="18" rx="2"/><rect x="46" y="3" width="5" height="6" rx="1"/><rect x="59" y="3" width="5" height="6" rx="1"/><rect x="52" y="11" width="6" height="6"/></g></svg>
<div style="position:absolute;left:1648.0px;top:93.3px;width:60px;height:13.8px;line-height:11.5px;font-size:11.5px;font-family:'Liberation Sans', sans-serif;text-align:center;white-space:nowrap;color:#15428B">Sort &amp;</div>
<div style="position:absolute;left:1645.0px;top:106.3px;width:60px;height:13.8px;line-height:11.5px;font-size:11.5px;font-family:'Liberation Sans', sans-serif;text-align:center;white-space:nowrap;color:#15428B">Filter</div>
<svg style="position:absolute;left:1691px;top:111px" width="6" height="4"><path d="M0 0 H6 L3 3Z" fill="#4A6FA8"/></svg>
<div style="position:absolute;left:1691.0px;top:93.3px;width:60px;height:13.8px;line-height:11.5px;font-size:11.5px;font-family:'Liberation Sans', sans-serif;text-align:center;white-space:nowrap;color:#15428B">Find &amp;</div>
<div style="position:absolute;left:1688.0px;top:106.3px;width:60px;height:13.8px;line-height:11.5px;font-size:11.5px;font-family:'Liberation Sans', sans-serif;text-align:center;white-space:nowrap;color:#15428B">Select</div>
<svg style="position:absolute;left:1736px;top:111px" width="6" height="4"><path d="M0 0 H6 L3 3Z" fill="#4A6FA8"/></svg>
<div style="position:absolute;left:0px;top:141px;width:3200px;height:27px;background:#D5E2F3"></div>
<div style="position:absolute;left:0px;top:142px;width:3182px;height:21px;background:#fff"></div>
<div style="position:absolute;left:0px;top:142px;width:3182px;height:1px;background:#8EABD4"></div>
<div style="position:absolute;left:0px;top:163px;width:3182px;height:1px;background:#8EABD4"></div>
<div style="position:absolute;left:40.0px;top:147.0px;width:60px;height:15.6px;line-height:13px;font-size:13px;font-family:'Liberation Sans', sans-serif;text-align:center;white-space:nowrap;color:#000">A1</div>
<svg style="position:absolute;left:144px;top:150px" width="9" height="6"><path d="M0 0 H8 L4 5Z" fill="#000"/></svg>
<div style="position:absolute;left:159px;top:143px;width:83px;height:20px;background:linear-gradient(90deg,#E6EEF9,#C4D6EE 60%,#BCD0EC);border-radius:10px 0 0 10px;border:1px solid #A9BFE0;box-sizing:border-box"></div>
<svg style="position:absolute;left:164px;top:148px" width="10" height="10"><circle cx="5" cy="5" r="4" fill="#D9E4F2" stroke="#A6B8D2"/></svg>
<div style="position:absolute;left:226.0px;top:147.1px;width:20px;height:15.6px;line-height:13px;font-size:13px;font-family:'Liberation Serif', serif;text-align:left;white-space:nowrap;font-style:italic;color:#4D5D78">fx</div>
<div style="position:absolute;left:242px;top:142px;width:1px;height:21px;background:#A9BFE0"></div>
<div style="position:absolute;left:250.0px;top:148.3px;width:600px;height:15.1px;line-height:12.6px;font-size:12.6px;font-family:'Liberation Sans', sans-serif;text-align:left;white-space:nowrap;color:#000">ΕΠΙΛΥΣΗ ΔΙΑΦΡΑΓΜΑΤΙΚΟΥ ΟΡΟΦΟΥ – ΓΕΝΙΚΗ ΠΕΡΙΠΤΩΣΗ ΚΟΛΟΝΩΝ ΥΠΟ ΚΛΙΣΗ</div>
<div style="position:absolute;left:3185px;top:142px;width:15px;height:22px;background:linear-gradient(#E8F0FA,#C8D8EE);border:1px solid #9FB6D6;box-sizing:border-box"></div>
<svg style="position:absolute;left:3187px;top:146px" width="10" height="14"><path d="M1 2 L5 6 L9 2 M1 7 L5 11 L9 7" stroke="#000" stroke-width="1.8" fill="none"/></svg>
<div style="position:absolute;left:0px;top:166px;width:3200px;height:2px;background:#D5E2F3"></div>
<div style="position:absolute;left:43px;top:197px;width:3139px;height:2136px;background:#fff"></div>
<svg style="position:absolute;left:0;top:0" width="3200" height="1260"><path d="M191.5 197 V1248" stroke="#D0D7E5"/><path d="M277.5 197 V1248" stroke="#D0D7E5"/><path d="M373.5 197 V1248" stroke="#D0D7E5"/><path d="M429.5 197 V1248" stroke="#D0D7E5"/><path d="M520.5 197 V1248" stroke="#D0D7E5"/><path d="M619.5 197 V1248" stroke="#D0D7E5"/><path d="M686.5 197 V1248" stroke="#D0D7E5"/><path d="M756.5 197 V1248" stroke="#D0D7E5"/><path d="M860.5 197 V1248" stroke="#D0D7E5"/><path d="M930.5 197 V1248" stroke="#D0D7E5"/><path d="M996.5 197 V1248" stroke="#D0D7E5"/><path d="M1065.5 197 V1248" stroke="#D0D7E5"/><path d="M1150.5 197 V1248" stroke="#D0D7E5"/><path d="M1302.5 197 V1248" stroke="#D0D7E5"/><path d="M1398.5 197 V1248" stroke="#D0D7E5"/><path d="M1494.5 197 V1248" stroke="#D0D7E5"/><path d="M1560.5 197 V1248" stroke="#D0D7E5"/><path d="M1666.5 197 V1248" stroke="#D0D7E5"/><path d="M1749.5 197 V1248" stroke="#D0D7E5"/><path d="M1840.5 197 V1248" stroke="#D0D7E5"/><path d="M1914.5 197 V1248" stroke="#D0D7E5"/><path d="M2040.5 197 V1248" stroke="#D0D7E5"/><path d="M2128.5 197 V1248" stroke="#D0D7E5"/><path d="M2211.5 197 V1248" stroke="#D0D7E5"/><path d="M2365.5 197 V1248" stroke="#D0D7E5"/><path d="M2522.5 197 V1248" stroke="#D0D7E5"/><path d="M2636.5 197 V1248" stroke="#D0D7E5"/><path d="M2721.5 197 V1248" stroke="#D0D7E5"/><path d="M2811.5 197 V1248" stroke="#D0D7E5"/><path d="M2901.5 197 V1248" stroke="#D0D7E5"/><path d="M2986.5 197 V1248" stroke="#D0D7E5"/><path d="M3058.5 197 V1248" stroke="#D0D7E5"/><path d="M3130.5 197 V1248" stroke="#D0D7E5"/><path d="M43 229.5 H3182" stroke="#D0D7E5"/><path d="M43 261.5 H3182" stroke="#D0D7E5"/><path d="M43 301.5 H3182" stroke="#D0D7E5"/><path d="M43 346.5 H3182" stroke="#D0D7E5"/><path d="M43 388.5 H3182" stroke="#D0D7E5"/><path d="M43 428.5 H3182" stroke="#D0D7E5"/><path d="M43 468.5 H3182" stroke="#D0D7E5"/><path d="M43 500.5 H3182" stroke="#D0D7E5"/><path d="M43 540.5 H3182" stroke="#D0D7E5"/><path d="M43 580.5 H3182" stroke="#D0D7E5"/><path d="M43 618.5 H3182" stroke="#D0D7E5"/><path d="M43 658.5 H3182" stroke="#D0D7E5"/><path d="M43 698.5 H3182" stroke="#D0D7E5"/><path d="M43 736.5 H3182" stroke="#D0D7E5"/><path d="M43 774.5 H3182" stroke="#D0D7E5"/><path d="M43 814.5 H3182" stroke="#D0D7E5"/><path d="M43 846.5 H3182" stroke="#D0D7E5"/><path d="M43 878.5 H3182" stroke="#D0D7E5"/><path d="M43 918.5 H3182" stroke="#D0D7E5"/><path d="M43 950.5 H3182" stroke="#D0D7E5"/><path d="M43 984.5 H3182" stroke="#D0D7E5"/><path d="M43 1016.5 H3182" stroke="#D0D7E5"/><path d="M43 1048.5 H3182" stroke="#D0D7E5"/><path d="M43 1080.5 H3182" stroke="#D0D7E5"/><path d="M43 1112.5 H3182" stroke="#D0D7E5"/><path d="M43 1144.5 H3182" stroke="#D0D7E5"/><path d="M43 1176.5 H3182" stroke="#D0D7E5"/><path d="M43 1208.5 H3182" stroke="#D0D7E5"/><path d="M43 1248.5 H3182" stroke="#D0D7E5"/></svg>
<div style="position:absolute;left:43px;top:197px;width:1797px;height:104px;background:#fff"></div>
<div style="position:absolute;left:0px;top:168px;width:43px;height:29px;background:linear-gradient(#B7CDEB,#A6C0E6)"></div>
<svg style="position:absolute;left:0;top:168px" width="43" height="29"><path d="M38 4 V25 H17Z" fill="#EEF3FA"/><rect x="0.5" y="0.5" width="42" height="28" fill="none" stroke="#9EB6CE"/></svg>
<div style="position:absolute;left:43px;top:168px;width:148px;height:29px;background:linear-gradient(#F9D9A0 0%,#F7CE84 50%,#F1C15F 100%)"></div>
<div style="position:absolute;left:191px;top:168px;width:86px;height:29px;background:linear-gradient(#F9D9A0 0%,#F7CE84 50%,#F1C15F 100%)"></div>
<div style="position:absolute;left:277px;top:168px;width:96px;height:29px;background:linear-gradient(#F9D9A0 0%,#F7CE84 50%,#F1C15F 100%)"></div>
<div style="position:absolute;left:373px;top:168px;width:56px;height:29px;background:linear-gradient(#F9D9A0 0%,#F7CE84 50%,#F1C15F 100%)"></div>
<div style="position:absolute;left:429px;top:168px;width:91px;height:29px;background:linear-gradient(#F9D9A0 0%,#F7CE84 50%,#F1C15F 100%)"></div>
<div style="position:absolute;left:520px;top:168px;width:99px;height:29px;background:linear-gradient(#F9D9A0 0%,#F7CE84 50%,#F1C15F 100%)"></div>
<div style="position:absolute;left:619px;top:168px;width:67px;height:29px;background:linear-gradient(#F9D9A0 0%,#F7CE84 50%,#F1C15F 100%)"></div>
<div style="position:absolute;left:686px;top:168px;width:70px;height:29px;background:linear-gradient(#F9D9A0 0%,#F7CE84 50%,#F1C15F 100%)"></div>
<div style="position:absolute;left:756px;top:168px;width:104px;height:29px;background:linear-gradient(#F9D9A0 0%,#F7CE84 50%,#F1C15F 100%)"></div>
<div style="position:absolute;left:860px;top:168px;width:70px;height:29px;background:linear-gradient(#F9D9A0 0%,#F7CE84 50%,#F1C15F 100%)"></div>
<div style="position:absolute;left:930px;top:168px;width:66px;height:29px;background:linear-gradient(#F9D9A0 0%,#F7CE84 50%,#F1C15F 100%)"></div>
<div style="position:absolute;left:996px;top:168px;width:69px;height:29px;background:linear-gradient(#F9D9A0 0%,#F7CE84 50%,#F1C15F 100%)"></div>
<div style="position:absolute;left:1065px;top:168px;width:85px;height:29px;background:linear-gradient(#F9D9A0 0%,#F7CE84 50%,#F1C15F 100%)"></div>
<div style="position:absolute;left:1150px;top:168px;width:152px;height:29px;background:linear-gradient(#F9D9A0 0%,#F7CE84 50%,#F1C15F 100%)"></div>
<div style="position:absolute;left:1302px;top:168px;width:96px;height:29px;background:linear-gradient(#F9D9A0 0%,#F7CE84 50%,#F1C15F 100%)"></div>
<div style="position:absolute;left:1398px;top:168px;width:96px;height:29px;background:linear-gradient(#F9D9A0 0%,#F7CE84 50%,#F1C15F 100%)"></div>
<div style="position:absolute;left:1494px;top:168px;width:66px;height:29px;background:linear-gradient(#F9D9A0 0%,#F7CE84 50%,#F1C15F 100%)"></div>
<div style="position:absolute;left:1560px;top:168px;width:106px;height:29px;background:linear-gradient(#F9D9A0 0%,#F7CE84 50%,#F1C15F 100%)"></div>
<div style="position:absolute;left:1666px;top:168px;width:83px;height:29px;background:linear-gradient(#F9D9A0 0%,#F7CE84 50%,#F1C15F 100%)"></div>
<div style="position:absolute;left:1749px;top:168px;width:91px;height:29px;background:linear-gradient(#F9D9A0 0%,#F7CE84 50%,#F1C15F 100%)"></div>
<div style="position:absolute;left:1840px;top:168px;width:74px;height:29px;background:linear-gradient(#F7FAFD 0%,#E9EFF8 50%,#D8E2EF 100%)"></div>
<div style="position:absolute;left:1914px;top:168px;width:126px;height:29px;background:linear-gradient(#F7FAFD 0%,#E9EFF8 50%,#D8E2EF 100%)"></div>
<div style="position:absolute;left:2040px;top:168px;width:88px;height:29px;background:linear-gradient(#F7FAFD 0%,#E9EFF8 50%,#D8E2EF 100%)"></div>
<div style="position:absolute;left:2128px;top:168px;width:83px;height:29px;background:linear-gradient(#F7FAFD 0%,#E9EFF8 50%,#D8E2EF 100%)"></div>
<div style="position:absolute;left:2211px;top:168px;width:154px;height:29px;background:linear-gradient(#F7FAFD 0%,#E9EFF8 50%,#D8E2EF 100%)"></div>
<div style="position:absolute;left:2365px;top:168px;width:157px;height:29px;background:linear-gradient(#F7FAFD 0%,#E9EFF8 50%,#D8E2EF 100%)"></div>
<div style="position:absolute;left:2522px;top:168px;width:114px;height:29px;background:linear-gradient(#F7FAFD 0%,#E9EFF8 50%,#D8E2EF 100%)"></div>
<div style="position:absolute;left:2636px;top:168px;width:85px;height:29px;background:linear-gradient(#F7FAFD 0%,#E9EFF8 50%,#D8E2EF 100%)"></div>
<div style="position:absolute;left:2721px;top:168px;width:90px;height:29px;background:linear-gradient(#F7FAFD 0%,#E9EFF8 50%,#D8E2EF 100%)"></div>
<div style="position:absolute;left:2811px;top:168px;width:90px;height:29px;background:linear-gradient(#F7FAFD 0%,#E9EFF8 50%,#D8E2EF 100%)"></div>
<div style="position:absolute;left:2901px;top:168px;width:85px;height:29px;background:linear-gradient(#F7FAFD 0%,#E9EFF8 50%,#D8E2EF 100%)"></div>
<div style="position:absolute;left:2986px;top:168px;width:72px;height:29px;background:linear-gradient(#F7FAFD 0%,#E9EFF8 50%,#D8E2EF 100%)"></div>
<div style="position:absolute;left:3058px;top:168px;width:72px;height:29px;background:linear-gradient(#F7FAFD 0%,#E9EFF8 50%,#D8E2EF 100%)"></div>
<div style="position:absolute;left:3130px;top:168px;width:100px;height:29px;background:linear-gradient(#F7FAFD 0%,#E9EFF8 50%,#D8E2EF 100%)"></div>
<div style="position:absolute;left:191px;top:168px;width:1px;height:29px;background:#F29536"></div>
<div style="position:absolute;left:277px;top:168px;width:1px;height:29px;background:#F29536"></div>
<div style="position:absolute;left:373px;top:168px;width:1px;height:29px;background:#F29536"></div>
<div style="position:absolute;left:429px;top:168px;width:1px;height:29px;background:#F29536"></div>
<div style="position:absolute;left:520px;top:168px;width:1px;height:29px;background:#F29536"></div>
<div style="position:absolute;left:619px;top:168px;width:1px;height:29px;background:#F29536"></div>
<div style="position:absolute;left:686px;top:168px;width:1px;height:29px;background:#F29536"></div>
<div style="position:absolute;left:756px;top:168px;width:1px;height:29px;background:#F29536"></div>
<div style="position:absolute;left:860px;top:168px;width:1px;height:29px;background:#F29536"></div>
<div style="position:absolute;left:930px;top:168px;width:1px;height:29px;background:#F29536"></div>
<div style="position:absolute;left:996px;top:168px;width:1px;height:29px;background:#F29536"></div>
<div style="position:absolute;left:1065px;top:168px;width:1px;height:29px;background:#F29536"></div>
<div style="position:absolute;left:1150px;top:168px;width:1px;height:29px;background:#F29536"></div>
<div style="position:absolute;left:1302px;top:168px;width:1px;height:29px;background:#F29536"></div>
<div style="position:absolute;left:1398px;top:168px;width:1px;height:29px;background:#F29536"></div>
<div style="position:absolute;left:1494px;top:168px;width:1px;height:29px;background:#F29536"></div>
<div style="position:absolute;left:1560px;top:168px;width:1px;height:29px;background:#F29536"></div>
<div style="position:absolute;left:1666px;top:168px;width:1px;height:29px;background:#F29536"></div>
<div style="position:absolute;left:1749px;top:168px;width:1px;height:29px;background:#F29536"></div>
<div style="position:absolute;left:1840px;top:168px;width:1px;height:29px;background:#F29536"></div>
<div style="position:absolute;left:1914px;top:168px;width:1px;height:29px;background:#9EB6CE"></div>
<div style="position:absolute;left:2040px;top:168px;width:1px;height:29px;background:#9EB6CE"></div>
<div style="position:absolute;left:2128px;top:168px;width:1px;height:29px;background:#9EB6CE"></div>
<div style="position:absolute;left:2211px;top:168px;width:1px;height:29px;background:#9EB6CE"></div>
<div style="position:absolute;left:2365px;top:168px;width:1px;height:29px;background:#9EB6CE"></div>
<div style="position:absolute;left:2522px;top:168px;width:1px;height:29px;background:#9EB6CE"></div>
<div style="position:absolute;left:2636px;top:168px;width:1px;height:29px;background:#9EB6CE"></div>
<div style="position:absolute;left:2721px;top:168px;width:1px;height:29px;background:#9EB6CE"></div>
<div style="position:absolute;left:2811px;top:168px;width:1px;height:29px;background:#9EB6CE"></div>
<div style="position:absolute;left:2901px;top:168px;width:1px;height:29px;background:#9EB6CE"></div>
<div style="position:absolute;left:2986px;top:168px;width:1px;height:29px;background:#9EB6CE"></div>
<div style="position:absolute;left:3058px;top:168px;width:1px;height:29px;background:#9EB6CE"></div>
<div style="position:absolute;left:3130px;top:168px;width:1px;height:29px;background:#9EB6CE"></div>
<div style="position:absolute;left:3230px;top:168px;width:1px;height:29px;background:#9EB6CE"></div>
<div style="position:absolute;left:43.0px;top:173.1px;width:148px;height:24.0px;line-height:20px;font-size:20px;font-family:'Liberation Sans', sans-serif;text-align:center;white-space:nowrap;color:#1C3036">A</div>
<div style="position:absolute;left:191.0px;top:173.1px;width:86px;height:24.0px;line-height:20px;font-size:20px;font-family:'Liberation Sans', sans-serif;text-align:center;white-space:nowrap;color:#1C3036">B</div>
<div style="position:absolute;left:277.0px;top:173.1px;width:96px;height:24.0px;line-height:20px;font-size:20px;font-family:'Liberation Sans', sans-serif;text-align:center;white-space:nowrap;color:#1C3036">C</div>
<div style="position:absolute;left:373.0px;top:173.1px;width:56px;height:24.0px;line-height:20px;font-size:20px;font-family:'Liberation Sans', sans-serif;text-align:center;white-space:nowrap;color:#1C3036">D</div>
<div style="position:absolute;left:429.0px;top:173.1px;width:91px;height:24.0px;line-height:20px;font-size:20px;font-family:'Liberation Sans', sans-serif;text-align:center;white-space:nowrap;color:#1C3036">E</div>
<div style="position:absolute;left:520.0px;top:173.1px;width:99px;height:24.0px;line-height:20px;font-size:20px;font-family:'Liberation Sans', sans-serif;text-align:center;white-space:nowrap;color:#1C3036">F</div>
<div style="position:absolute;left:619.0px;top:173.1px;width:67px;height:24.0px;line-height:20px;font-size:20px;font-family:'Liberation Sans', sans-serif;text-align:center;white-space:nowrap;color:#1C3036">G</div>
<div style="position:absolute;left:686.0px;top:173.1px;width:70px;height:24.0px;line-height:20px;font-size:20px;font-family:'Liberation Sans', sans-serif;text-align:center;white-space:nowrap;color:#1C3036">H</div>
<div style="position:absolute;left:756.0px;top:173.1px;width:104px;height:24.0px;line-height:20px;font-size:20px;font-family:'Liberation Sans', sans-serif;text-align:center;white-space:nowrap;color:#1C3036">I</div>
<div style="position:absolute;left:860.0px;top:173.1px;width:70px;height:24.0px;line-height:20px;font-size:20px;font-family:'Liberation Sans', sans-serif;text-align:center;white-space:nowrap;color:#1C3036">J</div>
<div style="position:absolute;left:930.0px;top:173.1px;width:66px;height:24.0px;line-height:20px;font-size:20px;font-family:'Liberation Sans', sans-serif;text-align:center;white-space:nowrap;color:#1C3036">K</div>
<div style="position:absolute;left:996.0px;top:173.1px;width:69px;height:24.0px;line-height:20px;font-size:20px;font-family:'Liberation Sans', sans-serif;text-align:center;white-space:nowrap;color:#1C3036">L</div>
<div style="position:absolute;left:1065.0px;top:173.1px;width:85px;height:24.0px;line-height:20px;font-size:20px;font-family:'Liberation Sans', sans-serif;text-align:center;white-space:nowrap;color:#1C3036">M</div>
<div style="position:absolute;left:1150.0px;top:173.1px;width:152px;height:24.0px;line-height:20px;font-size:20px;font-family:'Liberation Sans', sans-serif;text-align:center;white-space:nowrap;color:#1C3036">N</div>
<div style="position:absolute;left:1302.0px;top:173.1px;width:96px;height:24.0px;line-height:20px;font-size:20px;font-family:'Liberation Sans', sans-serif;text-align:center;white-space:nowrap;color:#1C3036">O</div>
<div style="position:absolute;left:1398.0px;top:173.1px;width:96px;height:24.0px;line-height:20px;font-size:20px;font-family:'Liberation Sans', sans-serif;text-align:center;white-space:nowrap;color:#1C3036">P</div>
<div style="position:absolute;left:1494.0px;top:173.1px;width:66px;height:24.0px;line-height:20px;font-size:20px;font-family:'Liberation Sans', sans-serif;text-align:center;white-space:nowrap;color:#1C3036">Q</div>
<div style="position:absolute;left:1560.0px;top:173.1px;width:106px;height:24.0px;line-height:20px;font-size:20px;font-family:'Liberation Sans', sans-serif;text-align:center;white-space:nowrap;color:#1C3036">R</div>
<div style="position:absolute;left:1666.0px;top:173.1px;width:83px;height:24.0px;line-height:20px;font-size:20px;font-family:'Liberation Sans', sans-serif;text-align:center;white-space:nowrap;color:#1C3036">S</div>
<div style="position:absolute;left:1749.0px;top:173.1px;width:91px;height:24.0px;line-height:20px;font-size:20px;font-family:'Liberation Sans', sans-serif;text-align:center;white-space:nowrap;color:#1C3036">T</div>
<div style="position:absolute;left:1840.0px;top:173.1px;width:74px;height:24.0px;line-height:20px;font-size:20px;font-family:'Liberation Sans', sans-serif;text-align:center;white-space:nowrap;color:#1C3036">U</div>
<div style="position:absolute;left:1914.0px;top:173.1px;width:126px;height:24.0px;line-height:20px;font-size:20px;font-family:'Liberation Sans', sans-serif;text-align:center;white-space:nowrap;color:#1C3036">V</div>
<div style="position:absolute;left:2040.0px;top:173.1px;width:88px;height:24.0px;line-height:20px;font-size:20px;font-family:'Liberation Sans', sans-serif;text-align:center;white-space:nowrap;color:#1C3036">W</div>
<div style="position:absolute;left:2128.0px;top:173.1px;width:83px;height:24.0px;line-height:20px;font-size:20px;font-family:'Liberation Sans', sans-serif;text-align:center;white-space:nowrap;color:#1C3036">X</div>
<div style="position:absolute;left:2211.0px;top:173.1px;width:154px;height:24.0px;line-height:20px;font-size:20px;font-family:'Liberation Sans', sans-serif;text-align:center;white-space:nowrap;color:#1C3036">Y</div>
<div style="position:absolute;left:2365.0px;top:173.1px;width:157px;height:24.0px;line-height:20px;font-size:20px;font-family:'Liberation Sans', sans-serif;text-align:center;white-space:nowrap;color:#1C3036">Z</div>
<div style="position:absolute;left:2522.0px;top:173.1px;width:114px;height:24.0px;line-height:20px;font-size:20px;font-family:'Liberation Sans', sans-serif;text-align:center;white-space:nowrap;color:#1C3036">AA</div>
<div style="position:absolute;left:2636.0px;top:173.1px;width:85px;height:24.0px;line-height:20px;font-size:20px;font-family:'Liberation Sans', sans-serif;text-align:center;white-space:nowrap;color:#1C3036">AB</div>
<div style="position:absolute;left:2721.0px;top:173.1px;width:90px;height:24.0px;line-height:20px;font-size:20px;font-family:'Liberation Sans', sans-serif;text-align:center;white-space:nowrap;color:#1C3036">AC</div>
<div style="position:absolute;left:2811.0px;top:173.1px;width:90px;height:24.0px;line-height:20px;font-size:20px;font-family:'Liberation Sans', sans-serif;text-align:center;white-space:nowrap;color:#1C3036">AD</div>
<div style="position:absolute;left:2901.0px;top:173.1px;width:85px;height:24.0px;line-height:20px;font-size:20px;font-family:'Liberation Sans', sans-serif;text-align:center;white-space:nowrap;color:#1C3036">AE</div>
<div style="position:absolute;left:2986.0px;top:173.1px;width:72px;height:24.0px;line-height:20px;font-size:20px;font-family:'Liberation Sans', sans-serif;text-align:center;white-space:nowrap;color:#1C3036">AF</div>
<div style="position:absolute;left:3058.0px;top:173.1px;width:72px;height:24.0px;line-height:20px;font-size:20px;font-family:'Liberation Sans', sans-serif;text-align:center;white-space:nowrap;color:#1C3036">AG</div>
<div style="position:absolute;left:3130.0px;top:173.1px;width:100px;height:24.0px;line-height:20px;font-size:20px;font-family:'Liberation Sans', sans-serif;text-align:center;white-space:nowrap;color:#1C3036">AH</div>
<div style="position:absolute;left:0px;top:167px;width:3182px;height:1px;background:#9EB6CE"></div>
<div style="position:absolute;left:43px;top:197px;width:1797px;height:1px;background:#F29536"></div>
<div style="position:absolute;left:1840px;top:197px;width:1342px;height:1px;background:#9EB6CE"></div>
<div style="position:absolute;left:0px;top:197px;width:43px;height:32px;background:#FAD594"></div>
<div style="position:absolute;left:0px;top:229px;width:43px;height:32px;background:#FAD594"></div>
<div style="position:absolute;left:0px;top:261px;width:43px;height:40px;background:#FAD594"></div>
<div style="position:absolute;left:0px;top:301px;width:43px;height:45px;background:#E4ECF7"></div>
<div style="position:absolute;left:0px;top:346px;width:43px;height:42px;background:#E4ECF7"></div>
<div style="position:absolute;left:0px;top:388px;width:43px;height:40px;background:#E4ECF7"></div>
<div style="position:absolute;left:0px;top:428px;width:43px;height:40px;background:#E4ECF7"></div>
<div style="position:absolute;left:0px;top:468px;width:43px;height:32px;background:#E4ECF7"></div>
<div style="position:absolute;left:0px;top:500px;width:43px;height:40px;background:#E4ECF7"></div>
<div style="position:absolute;left:0px;top:540px;width:43px;height:40px;background:#E4ECF7"></div>
<div style="position:absolute;left:0px;top:580px;width:43px;height:38px;background:#E4ECF7"></div>
<div style="position:absolute;left:0px;top:618px;width:43px;height:40px;background:#E4ECF7"></div>
<div style="position:absolute;left:0px;top:658px;width:43px;height:40px;background:#E4ECF7"></div>
<div style="position:absolute;left:0px;top:698px;width:43px;height:38px;background:#E4ECF7"></div>
<div style="position:absolute;left:0px;top:736px;width:43px;height:38px;background:#E4ECF7"></div>
<div style="position:absolute;left:0px;top:774px;width:43px;height:40px;background:#E4ECF7"></div>
<div style="position:absolute;left:0px;top:814px;width:43px;height:32px;background:#E4ECF7"></div>
<div style="position:absolute;left:0px;top:846px;width:43px;height:32px;background:#E4ECF7"></div>
<div style="position:absolute;left:0px;top:878px;width:43px;height:40px;background:#E4ECF7"></div>
<div style="position:absolute;left:0px;top:918px;width:43px;height:32px;background:#E4ECF7"></div>
<div style="position:absolute;left:0px;top:950px;width:43px;height:34px;background:#E4ECF7"></div>
<div style="position:absolute;left:0px;top:984px;width:43px;height:32px;background:#E4ECF7"></div>
<div style="position:absolute;left:0px;top:1016px;width:43px;height:32px;background:#E4ECF7"></div>
<div style="position:absolute;left:0px;top:1048px;width:43px;height:32px;background:#E4ECF7"></div>
<div style="position:absolute;left:0px;top:1080px;width:43px;height:32px;background:#E4ECF7"></div>
<div style="position:absolute;left:0px;top:1112px;width:43px;height:32px;background:#E4ECF7"></div>
<div style="position:absolute;left:0px;top:1144px;width:43px;height:32px;background:#E4ECF7"></div>
<div style="position:absolute;left:0px;top:1176px;width:43px;height:32px;background:#E4ECF7"></div>
<div style="position:absolute;left:0px;top:1208px;width:43px;height:40px;background:#E4ECF7"></div>
<div style="position:absolute;left:0px;top:1248px;width:43px;height:32px;background:#E4ECF7"></div>
<div style="position:absolute;left:0px;top:1280px;width:43px;height:32px;background:#E4ECF7"></div>
<div style="position:absolute;left:0px;top:1312px;width:43px;height:32px;background:#E4ECF7"></div>
<div style="position:absolute;left:0px;top:1344px;width:43px;height:32px;background:#E4ECF7"></div>
<div style="position:absolute;left:0px;top:1376px;width:43px;height:32px;background:#E4ECF7"></div>
<div style="position:absolute;left:0px;top:1408px;width:43px;height:32px;background:#E4ECF7"></div>
<div style="position:absolute;left:0px;top:1440px;width:43px;height:32px;background:#E4ECF7"></div>
<div style="position:absolute;left:0px;top:1472px;width:43px;height:32px;background:#E4ECF7"></div>
<div style="position:absolute;left:0px;top:1504px;width:43px;height:32px;background:#E4ECF7"></div>
<div style="position:absolute;left:0px;top:1536px;width:43px;height:32px;background:#E4ECF7"></div>
<div style="position:absolute;left:0px;top:1568px;width:43px;height:32px;background:#E4ECF7"></div>
<div style="position:absolute;left:0px;top:1600px;width:43px;height:32px;background:#E4ECF7"></div>
<div style="position:absolute;left:0px;top:1632px;width:43px;height:32px;background:#E4ECF7"></div>
<div style="position:absolute;left:0px;top:1664px;width:43px;height:32px;background:#E4ECF7"></div>
<div style="position:absolute;left:0px;top:1696px;width:43px;height:32px;background:#E4ECF7"></div>
<div style="position:absolute;left:0px;top:1728px;width:43px;height:32px;background:#E4ECF7"></div>
<div style="position:absolute;left:0px;top:1760px;width:43px;height:32px;background:#E4ECF7"></div>
<div style="position:absolute;left:0px;top:1792px;width:43px;height:32px;background:#E4ECF7"></div>
<div style="position:absolute;left:0px;top:1824px;width:43px;height:32px;background:#E4ECF7"></div>
<div style="position:absolute;left:0px;top:1856px;width:43px;height:32px;background:#E4ECF7"></div>
<div style="position:absolute;left:0px;top:1888px;width:43px;height:32px;background:#E4ECF7"></div>
<div style="position:absolute;left:0px;top:1920px;width:43px;height:32px;background:#E4ECF7"></div>
<div style="position:absolute;left:0px;top:1952px;width:43px;height:32px;background:#E4ECF7"></div>
<div style="position:absolute;left:0px;top:1984px;width:43px;height:32px;background:#E4ECF7"></div>
<div style="position:absolute;left:0px;top:2016px;width:43px;height:32px;background:#E4ECF7"></div>
<div style="position:absolute;left:0px;top:2048px;width:43px;height:32px;background:#E4ECF7"></div>
<div style="position:absolute;left:0px;top:2080px;width:43px;height:32px;background:#E4ECF7"></div>
<div style="position:absolute;left:0px;top:2112px;width:43px;height:32px;background:#E4ECF7"></div>
<div style="position:absolute;left:0px;top:2144px;width:43px;height:32px;background:#E4ECF7"></div>
<div style="position:absolute;left:0px;top:2176px;width:43px;height:32px;background:#E4ECF7"></div>
<div style="position:absolute;left:0px;top:2208px;width:43px;height:32px;background:#E4ECF7"></div>
<div style="position:absolute;left:0px;top:2240px;width:43px;height:32px;background:#E4ECF7"></div>
<div style="position:absolute;left:0px;top:2272px;width:43px;height:32px;background:#E4ECF7"></div>
<div style="position:absolute;left:0px;top:2304px;width:43px;height:29px;background:#E4ECF7"></div>
<div style="position:absolute;left:0px;top:229px;width:43px;height:1px;background:#F29536"></div>
<div style="position:absolute;left:0px;top:261px;width:43px;height:1px;background:#F29536"></div>
<div style="position:absolute;left:0px;top:301px;width:43px;height:1px;background:#F29536"></div>
<div style="position:absolute;left:0px;top:346px;width:43px;height:1px;background:#9EB6CE"></div>
<div style="position:absolute;left:0px;top:388px;width:43px;height:1px;background:#9EB6CE"></div>
<div style="position:absolute;left:0px;top:428px;width:43px;height:1px;background:#9EB6CE"></div>
<div style="position:absolute;left:0px;top:468px;width:43px;height:1px;background:#9EB6CE"></div>
<div style="position:absolute;left:0px;top:500px;width:43px;height:1px;background:#9EB6CE"></div>
<div style="position:absolute;left:0px;top:540px;width:43px;height:1px;background:#9EB6CE"></div>
<div style="position:absolute;left:0px;top:580px;width:43px;height:1px;background:#9EB6CE"></div>
<div style="position:absolute;left:0px;top:618px;width:43px;height:1px;background:#9EB6CE"></div>
<div style="position:absolute;left:0px;top:658px;width:43px;height:1px;background:#9EB6CE"></div>
<div style="position:absolute;left:0px;top:698px;width:43px;height:1px;background:#9EB6CE"></div>
<div style="position:absolute;left:0px;top:736px;width:43px;height:1px;background:#9EB6CE"></div>
<div style="position:absolute;left:0px;top:774px;width:43px;height:1px;background:#9EB6CE"></div>
<div style="position:absolute;left:0px;top:814px;width:43px;height:1px;background:#9EB6CE"></div>
<div style="position:absolute;left:0px;top:846px;width:43px;height:1px;background:#9EB6CE"></div>
<div style="position:absolute;left:0px;top:878px;width:43px;height:1px;background:#9EB6CE"></div>
<div style="position:absolute;left:0px;top:918px;width:43px;height:1px;background:#9EB6CE"></div>
<div style="position:absolute;left:0px;top:950px;width:43px;height:1px;background:#9EB6CE"></div>
<div style="position:absolute;left:0px;top:984px;width:43px;height:1px;background:#9EB6CE"></div>
<div style="position:absolute;left:0px;top:1016px;width:43px;height:1px;background:#9EB6CE"></div>
<div style="position:absolute;left:0px;top:1048px;width:43px;height:1px;background:#9EB6CE"></div>
<div style="position:absolute;left:0px;top:1080px;width:43px;height:1px;background:#9EB6CE"></div>
<div style="position:absolute;left:0px;top:1112px;width:43px;height:1px;background:#9EB6CE"></div>
<div style="position:absolute;left:0px;top:1144px;width:43px;height:1px;background:#9EB6CE"></div>
<div style="position:absolute;left:0px;top:1176px;width:43px;height:1px;background:#9EB6CE"></div>
<div style="position:absolute;left:0px;top:1208px;width:43px;height:1px;background:#9EB6CE"></div>
<div style="position:absolute;left:0px;top:1248px;width:43px;height:1px;background:#9EB6CE"></div>
<div style="position:absolute;left:0px;top:1280px;width:43px;height:1px;background:#9EB6CE"></div>
<div style="position:absolute;left:0px;top:1312px;width:43px;height:1px;background:#9EB6CE"></div>
<div style="position:absolute;left:0px;top:1344px;width:43px;height:1px;background:#9EB6CE"></div>
<div style="position:absolute;left:0px;top:1376px;width:43px;height:1px;background:#9EB6CE"></div>
<div style="position:absolute;left:0px;top:1408px;width:43px;height:1px;background:#9EB6CE"></div>
<div style="position:absolute;left:0px;top:1440px;width:43px;height:1px;background:#9EB6CE"></div>
<div style="position:absolute;left:0px;top:1472px;width:43px;height:1px;background:#9EB6CE"></div>
<div style="position:absolute;left:0px;top:1504px;width:43px;height:1px;background:#9EB6CE"></div>
<div style="position:absolute;left:0px;top:1536px;width:43px;height:1px;background:#9EB6CE"></div>
<div style="position:absolute;left:0px;top:1568px;width:43px;height:1px;background:#9EB6CE"></div>
<div style="position:absolute;left:0px;top:1600px;width:43px;height:1px;background:#9EB6CE"></div>
<div style="position:absolute;left:0px;top:1632px;width:43px;height:1px;background:#9EB6CE"></div>
<div style="position:absolute;left:0px;top:1664px;width:43px;height:1px;background:#9EB6CE"></div>
<div style="position:absolute;left:0px;top:1696px;width:43px;height:1px;background:#9EB6CE"></div>
<div style="position:absolute;left:0px;top:1728px;width:43px;height:1px;background:#9EB6CE"></div>
<div style="position:absolute;left:0px;top:1760px;width:43px;height:1px;background:#9EB6CE"></div>
<div style="position:absolute;left:0px;top:1792px;width:43px;height:1px;background:#9EB6CE"></div>
<div style="position:absolute;left:0px;top:1824px;width:43px;height:1px;background:#9EB6CE"></div>
<div style="position:absolute;left:0px;top:1856px;width:43px;height:1px;background:#9EB6CE"></div>
<div style="position:absolute;left:0px;top:1888px;width:43px;height:1px;background:#9EB6CE"></div>
<div style="position:absolute;left:0px;top:1920px;width:43px;height:1px;background:#9EB6CE"></div>
<div style="position:absolute;left:0px;top:1952px;width:43px;height:1px;background:#9EB6CE"></div>
<div style="position:absolute;left:0px;top:1984px;width:43px;height:1px;background:#9EB6CE"></div>
<div style="position:absolute;left:0px;top:2016px;width:43px;height:1px;background:#9EB6CE"></div>
<div style="position:absolute;left:0px;top:2048px;width:43px;height:1px;background:#9EB6CE"></div>
<div style="position:absolute;left:0px;top:2080px;width:43px;height:1px;background:#9EB6CE"></div>
<div style="position:absolute;left:0px;top:2112px;width:43px;height:1px;background:#9EB6CE"></div>
<div style="position:absolute;left:0px;top:2144px;width:43px;height:1px;background:#9EB6CE"></div>
<div style="position:absolute;left:0px;top:2176px;width:43px;height:1px;background:#9EB6CE"></div>
<div style="position:absolute;left:0px;top:2208px;width:43px;height:1px;background:#9EB6CE"></div>
<div style="position:absolute;left:0px;top:2240px;width:43px;height:1px;background:#9EB6CE"></div>
<div style="position:absolute;left:0px;top:2272px;width:43px;height:1px;background:#9EB6CE"></div>
<div style="position:absolute;left:0px;top:2304px;width:43px;height:1px;background:#9EB6CE"></div>
<div style="position:absolute;left:0.0px;top:204.6px;width:43px;height:24.6px;line-height:20.5px;font-size:20.5px;font-family:'Liberation Sans', sans-serif;text-align:center;white-space:nowrap;color:#1C3036">1</div>
<div style="position:absolute;left:0.0px;top:236.6px;width:43px;height:24.6px;line-height:20.5px;font-size:20.5px;font-family:'Liberation Sans', sans-serif;text-align:center;white-space:nowrap;color:#1C3036">2</div>
<div style="position:absolute;left:0.0px;top:273.6px;width:43px;height:24.6px;line-height:20.5px;font-size:20.5px;font-family:'Liberation Sans', sans-serif;text-align:center;white-space:nowrap;color:#1C3036">3</div>
<div style="position:absolute;left:0.0px;top:318.6px;width:43px;height:24.6px;line-height:20.5px;font-size:20.5px;font-family:'Liberation Sans', sans-serif;text-align:center;white-space:nowrap;color:#1C3036">4</div>
<div style="position:absolute;left:0.0px;top:360.6px;width:43px;height:24.6px;line-height:20.5px;font-size:20.5px;font-family:'Liberation Sans', sans-serif;text-align:center;white-space:nowrap;color:#1C3036">5</div>
<div style="position:absolute;left:0.0px;top:400.6px;width:43px;height:24.6px;line-height:20.5px;font-size:20.5px;font-family:'Liberation Sans', sans-serif;text-align:center;white-space:nowrap;color:#1C3036">6</div>
<div style="position:absolute;left:0.0px;top:440.6px;width:43px;height:24.6px;line-height:20.5px;font-size:20.5px;font-family:'Liberation Sans', sans-serif;text-align:center;white-space:nowrap;color:#1C3036">7</div>
<div style="position:absolute;left:0.0px;top:475.6px;width:43px;height:24.6px;line-height:20.5px;font-size:20.5px;font-family:'Liberation Sans', sans-serif;text-align:center;white-space:nowrap;color:#1C3036">8</div>
<div style="position:absolute;left:0.0px;top:512.6px;width:43px;height:24.6px;line-height:20.5px;font-size:20.5px;font-family:'Liberation Sans', sans-serif;text-align:center;white-space:nowrap;color:#1C3036">9</div>
<div style="position:absolute;left:0.0px;top:552.6px;width:43px;height:24.6px;line-height:20.5px;font-size:20.5px;font-family:'Liberation Sans', sans-serif;text-align:center;white-space:nowrap;color:#1C3036">10</div>
<div style="position:absolute;left:0.0px;top:591.2px;width:43px;height:24.6px;line-height:20.5px;font-size:20.5px;font-family:'Liberation Sans', sans-serif;text-align:center;white-space:nowrap;color:#1C3036">11</div>
<div style="position:absolute;left:0.0px;top:630.6px;width:43px;height:24.6px;line-height:20.5px;font-size:20.5px;font-family:'Liberation Sans', sans-serif;text-align:center;white-space:nowrap;color:#1C3036">12</div>
<div style="position:absolute;left:0.0px;top:670.6px;width:43px;height:24.6px;line-height:20.5px;font-size:20.5px;font-family:'Liberation Sans', sans-serif;text-align:center;white-space:nowrap;color:#1C3036">13</div>
<div style="position:absolute;left:0.0px;top:709.2px;width:43px;height:24.6px;line-height:20.5px;font-size:20.5px;font-family:'Liberation Sans', sans-serif;text-align:center;white-space:nowrap;color:#1C3036">14</div>
<div style="position:absolute;left:0.0px;top:747.2px;width:43px;height:24.6px;line-height:20.5px;font-size:20.5px;font-family:'Liberation Sans', sans-serif;text-align:center;white-space:nowrap;color:#1C3036">15</div>
<div style="position:absolute;left:0.0px;top:786.6px;width:43px;height:24.6px;line-height:20.5px;font-size:20.5px;font-family:'Liberation Sans', sans-serif;text-align:center;white-space:nowrap;color:#1C3036">16</div>
<div style="position:absolute;left:0.0px;top:821.6px;width:43px;height:24.6px;line-height:20.5px;font-size:20.5px;font-family:'Liberation Sans', sans-serif;text-align:center;white-space:nowrap;color:#1C3036">17</div>
<div style="position:absolute;left:0.0px;top:853.6px;width:43px;height:24.6px;line-height:20.5px;font-size:20.5px;font-family:'Liberation Sans', sans-serif;text-align:center;white-space:nowrap;color:#1C3036">18</div>
<div style="position:absolute;left:0.0px;top:890.6px;width:43px;height:24.6px;line-height:20.5px;font-size:20.5px;font-family:'Liberation Sans', sans-serif;text-align:center;white-space:nowrap;color:#1C3036">19</div>
<div style="position:absolute;left:0.0px;top:925.6px;width:43px;height:24.6px;line-height:20.5px;font-size:20.5px;font-family:'Liberation Sans', sans-serif;text-align:center;white-space:nowrap;color:#1C3036">20</div>
<div style="position:absolute;left:0.0px;top:958.8px;width:43px;height:24.6px;line-height:20.5px;font-size:20.5px;font-family:'Liberation Sans', sans-serif;text-align:center;white-space:nowrap;color:#1C3036">21</div>
<div style="position:absolute;left:0.0px;top:991.6px;width:43px;height:24.6px;line-height:20.5px;font-size:20.5px;font-family:'Liberation Sans', sans-serif;text-align:center;white-space:nowrap;color:#1C3036">22</div>
<div style="position:absolute;left:0.0px;top:1023.6px;width:43px;height:24.6px;line-height:20.5px;font-size:20.5px;font-family:'Liberation Sans', sans-serif;text-align:center;white-space:nowrap;color:#1C3036">23</div>
<div style="position:absolute;left:0.0px;top:1055.6px;width:43px;height:24.6px;line-height:20.5px;font-size:20.5px;font-family:'Liberation Sans', sans-serif;text-align:center;white-space:nowrap;color:#1C3036">24</div>
<div style="position:absolute;left:0.0px;top:1087.6px;width:43px;height:24.6px;line-height:20.5px;font-size:20.5px;font-family:'Liberation Sans', sans-serif;text-align:center;white-space:nowrap;color:#1C3036">25</div>
<div style="position:absolute;left:0.0px;top:1119.6px;width:43px;height:24.6px;line-height:20.5px;font-size:20.5px;font-family:'Liberation Sans', sans-serif;text-align:center;white-space:nowrap;color:#1C3036">124</div>
<div style="position:absolute;left:0.0px;top:1151.6px;width:43px;height:24.6px;line-height:20.5px;font-size:20.5px;font-family:'Liberation Sans', sans-serif;text-align:center;white-space:nowrap;color:#1C3036">125</div>
<div style="position:absolute;left:0.0px;top:1183.6px;width:43px;height:24.6px;line-height:20.5px;font-size:20.5px;font-family:'Liberation Sans', sans-serif;text-align:center;white-space:nowrap;color:#1C3036">126</div>
<div style="position:absolute;left:0.0px;top:1220.6px;width:43px;height:24.6px;line-height:20.5px;font-size:20.5px;font-family:'Liberation Sans', sans-serif;text-align:center;white-space:nowrap;color:#1C3036">127</div>
<div style="position:absolute;left:0.0px;top:1255.6px;width:43px;height:24.6px;line-height:20.5px;font-size:20.5px;font-family:'Liberation Sans', sans-serif;text-align:center;white-space:nowrap;color:#1C3036">128</div>
<div style="position:absolute;left:0.0px;top:1287.6px;width:43px;height:24.6px;line-height:20.5px;font-size:20.5px;font-family:'Liberation Sans', sans-serif;text-align:center;white-space:nowrap;color:#1C3036">129</div>
<div style="position:absolute;left:0.0px;top:1319.6px;width:43px;height:24.6px;line-height:20.5px;font-size:20.5px;font-family:'Liberation Sans', sans-serif;text-align:center;white-space:nowrap;color:#1C3036">130</div>
<div style="position:absolute;left:0.0px;top:1351.6px;width:43px;height:24.6px;line-height:20.5px;font-size:20.5px;font-family:'Liberation Sans', sans-serif;text-align:center;white-space:nowrap;color:#1C3036">131</div>
<div style="position:absolute;left:0.0px;top:1383.6px;width:43px;height:24.6px;line-height:20.5px;font-size:20.5px;font-family:'Liberation Sans', sans-serif;text-align:center;white-space:nowrap;color:#1C3036">132</div>
<div style="position:absolute;left:0.0px;top:1415.6px;width:43px;height:24.6px;line-height:20.5px;font-size:20.5px;font-family:'Liberation Sans', sans-serif;text-align:center;white-space:nowrap;color:#1C3036">133</div>
<div style="position:absolute;left:0.0px;top:1447.6px;width:43px;height:24.6px;line-height:20.5px;font-size:20.5px;font-family:'Liberation Sans', sans-serif;text-align:center;white-space:nowrap;color:#1C3036">134</div>
<div style="position:absolute;left:0.0px;top:1479.6px;width:43px;height:24.6px;line-height:20.5px;font-size:20.5px;font-family:'Liberation Sans', sans-serif;text-align:center;white-space:nowrap;color:#1C3036">135</div>
<div style="position:absolute;left:0.0px;top:1511.6px;width:43px;height:24.6px;line-height:20.5px;font-size:20.5px;font-family:'Liberation Sans', sans-serif;text-align:center;white-space:nowrap;color:#1C3036">136</div>
<div style="position:absolute;left:0.0px;top:1543.6px;width:43px;height:24.6px;line-height:20.5px;font-size:20.5px;font-family:'Liberation Sans', sans-serif;text-align:center;white-space:nowrap;color:#1C3036">137</div>
<div style="position:absolute;left:0.0px;top:1575.6px;width:43px;height:24.6px;line-height:20.5px;font-size:20.5px;font-family:'Liberation Sans', sans-serif;text-align:center;white-space:nowrap;color:#1C3036">138</div>
<div style="position:absolute;left:0.0px;top:1607.6px;width:43px;height:24.6px;line-height:20.5px;font-size:20.5px;font-family:'Liberation Sans', sans-serif;text-align:center;white-space:nowrap;color:#1C3036">139</div>
<div style="position:absolute;left:0.0px;top:1639.6px;width:43px;height:24.6px;line-height:20.5px;font-size:20.5px;font-family:'Liberation Sans', sans-serif;text-align:center;white-space:nowrap;color:#1C3036">140</div>
<div style="position:absolute;left:0.0px;top:1671.6px;width:43px;height:24.6px;line-height:20.5px;font-size:20.5px;font-family:'Liberation Sans', sans-serif;text-align:center;white-space:nowrap;color:#1C3036">141</div>
<div style="position:absolute;left:0.0px;top:1703.6px;width:43px;height:24.6px;line-height:20.5px;font-size:20.5px;font-family:'Liberation Sans', sans-serif;text-align:center;white-space:nowrap;color:#1C3036">142</div>
<div style="position:absolute;left:0.0px;top:1735.6px;width:43px;height:24.6px;line-height:20.5px;font-size:20.5px;font-family:'Liberation Sans', sans-serif;text-align:center;white-space:nowrap;color:#1C3036">143</div>
<div style="position:absolute;left:0.0px;top:1767.6px;width:43px;height:24.6px;line-height:20.5px;font-size:20.5px;font-family:'Liberation Sans', sans-serif;text-align:center;white-space:nowrap;color:#1C3036">144</div>
<div style="position:absolute;left:0.0px;top:1799.6px;width:43px;height:24.6px;line-height:20.5px;font-size:20.5px;font-family:'Liberation Sans', sans-serif;text-align:center;white-space:nowrap;color:#1C3036">145</div>
<div style="position:absolute;left:0.0px;top:1831.6px;width:43px;height:24.6px;line-height:20.5px;font-size:20.5px;font-family:'Liberation Sans', sans-serif;text-align:center;white-space:nowrap;color:#1C3036">146</div>
<div style="position:absolute;left:0.0px;top:1863.6px;width:43px;height:24.6px;line-height:20.5px;font-size:20.5px;font-family:'Liberation Sans', sans-serif;text-align:center;white-space:nowrap;color:#1C3036">147</div>
<div style="position:absolute;left:0.0px;top:1895.6px;width:43px;height:24.6px;line-height:20.5px;font-size:20.5px;font-family:'Liberation Sans', sans-serif;text-align:center;white-space:nowrap;color:#1C3036">148</div>
<div style="position:absolute;left:0.0px;top:1927.6px;width:43px;height:24.6px;line-height:20.5px;font-size:20.5px;font-family:'Liberation Sans', sans-serif;text-align:center;white-space:nowrap;color:#1C3036">149</div>
<div style="position:absolute;left:0.0px;top:1959.6px;width:43px;height:24.6px;line-height:20.5px;font-size:20.5px;font-family:'Liberation Sans', sans-serif;text-align:center;white-space:nowrap;color:#1C3036">150</div>
<div style="position:absolute;left:0.0px;top:1991.6px;width:43px;height:24.6px;line-height:20.5px;font-size:20.5px;font-family:'Liberation Sans', sans-serif;text-align:center;white-space:nowrap;color:#1C3036">151</div>
<div style="position:absolute;left:0.0px;top:2023.6px;width:43px;height:24.6px;line-height:20.5px;font-size:20.5px;font-family:'Liberation Sans', sans-serif;text-align:center;white-space:nowrap;color:#1C3036">152</div>
<div style="position:absolute;left:0.0px;top:2055.6px;width:43px;height:24.6px;line-height:20.5px;font-size:20.5px;font-family:'Liberation Sans', sans-serif;text-align:center;white-space:nowrap;color:#1C3036">153</div>
<div style="position:absolute;left:0.0px;top:2087.6px;width:43px;height:24.6px;line-height:20.5px;font-size:20.5px;font-family:'Liberation Sans', sans-serif;text-align:center;white-space:nowrap;color:#1C3036">154</div>
<div style="position:absolute;left:0.0px;top:2119.6px;width:43px;height:24.6px;line-height:20.5px;font-size:20.5px;font-family:'Liberation Sans', sans-serif;text-align:center;white-space:nowrap;color:#1C3036">155</div>
<div style="position:absolute;left:0.0px;top:2151.6px;width:43px;height:24.6px;line-height:20.5px;font-size:20.5px;font-family:'Liberation Sans', sans-serif;text-align:center;white-space:nowrap;color:#1C3036">156</div>
<div style="position:absolute;left:0.0px;top:2183.6px;width:43px;height:24.6px;line-height:20.5px;font-size:20.5px;font-family:'Liberation Sans', sans-serif;text-align:center;white-space:nowrap;color:#1C3036">157</div>
<div style="position:absolute;left:0.0px;top:2215.6px;width:43px;height:24.6px;line-height:20.5px;font-size:20.5px;font-family:'Liberation Sans', sans-serif;text-align:center;white-space:nowrap;color:#1C3036">158</div>
<div style="position:absolute;left:0.0px;top:2247.6px;width:43px;height:24.6px;line-height:20.5px;font-size:20.5px;font-family:'Liberation Sans', sans-serif;text-align:center;white-space:nowrap;color:#1C3036">159</div>
<div style="position:absolute;left:0.0px;top:2279.6px;width:43px;height:24.6px;line-height:20.5px;font-size:20.5px;font-family:'Liberation Sans', sans-serif;text-align:center;white-space:nowrap;color:#1C3036">160</div>
<div style="position:absolute;left:0.0px;top:2311.6px;width:43px;height:24.6px;line-height:20.5px;font-size:20.5px;font-family:'Liberation Sans', sans-serif;text-align:center;white-space:nowrap;color:#1C3036">161</div>
<div style="position:absolute;left:42px;top:197px;width:1px;height:2136px;background:#9EB6CE"></div>
<div style="position:absolute;left:42px;top:197px;width:1px;height:104px;background:#E8932F"></div>
<div style="position:absolute;left:0px;top:1112px;width:43px;height:2px;background:#8FAACB"></div>
<div style="position:absolute;left:42.0px;top:233.2px;width:1800px;height:44.2px;line-height:36.8px;font-size:36.8px;font-family:'Liberation Serif', serif;text-align:center;white-space:nowrap;font-weight:bold;color:#000">ΕΠΙΛΥΣΗ ΔΙΑΦΡΑΓΜΑΤΙΚΟΥ ΟΡΟΦΟΥ – ΓΕΝΙΚΗ ΠΕΡΙΠΤΩΣΗ ΚΟΛΟΝΩΝ ΥΠΟ ΚΛΙΣΗ</div>
<div style="position:absolute;left:181px;top:266px;width:1522px;height:3.5px;background:#000"></div>
<div style="position:absolute;left:43px;top:198px;width:1799px;height:1.5px;background:#000"></div>
<div style="position:absolute;left:43px;top:198px;width:1.5px;height:105px;background:#000"></div>
<div style="position:absolute;left:1839px;top:197px;width:3px;height:103px;background:#000"></div>
<div style="position:absolute;left:43px;top:300px;width:1794px;height:3px;background:#000"></div>
<div style="position:absolute;left:1837px;top:298px;width:7px;height:7px;background:#000;border:1px solid #fff"></div>
<div style="position:absolute;left:-416.0px;top:318.2px;width:600px;height:25.2px;line-height:21px;font-size:21px;font-family:'Liberation Sans', sans-serif;text-align:right;white-space:nowrap;transform:scaleX(0.913);transform-origin:100% 50%;font-weight:bold">E =</div>
<div style="position:absolute;left:-416.0px;top:362.2px;width:600px;height:25.2px;line-height:21px;font-size:21px;font-family:'Liberation Sans', sans-serif;text-align:right;white-space:nowrap;transform:scaleX(0.951);transform-origin:100% 50%;font-weight:bold">G =</div>
<svg style="position:absolute;left:184px;top:302px" width="7" height="7"><path d="M0 0 H7 V7Z" fill="#FF0000"/></svg>
<svg style="position:absolute;left:184px;top:347px" width="7" height="7"><path d="M0 0 H7 V7Z" fill="#FF0000"/></svg>
<div style="position:absolute;left:-66.0px;top:318.2px;width:600px;height:25.2px;line-height:21px;font-size:21px;font-family:'Liberation Sans', sans-serif;text-align:center;white-space:nowrap;transform:scaleX(1.017);transform-origin:50% 50%;">32,80</div>
<div style="position:absolute;left:-66.0px;top:362.2px;width:600px;height:25.2px;line-height:21px;font-size:21px;font-family:'Liberation Sans', sans-serif;text-align:center;white-space:nowrap;transform:scaleX(1.017);transform-origin:50% 50%;">0,50</div>
<div style="position:absolute;left:280.0px;top:327.6px;width:600px;height:16.2px;line-height:13.5px;font-size:13.5px;font-family:'Liberation Sans', sans-serif;text-align:left;white-space:nowrap;">GPa</div>
<div style="position:absolute;left:280.0px;top:362.2px;width:600px;height:25.2px;line-height:21px;font-size:21px;font-family:'Liberation Sans', sans-serif;text-align:left;white-space:nowrap;transform:scaleX(1.043);transform-origin:0% 50%;">*E</div>
<div style="position:absolute;left:375px;top:305px;width:452px;height:42px;background:#D4D0C8;box-sizing:border-box;border-right:3px solid #3C3C3C;border-bottom:3px solid #3C3C3C;"></div>
<div style="position:absolute;left:274.0px;top:313.0px;width:652px;height:24.4px;line-height:20.3px;font-size:20.3px;font-family:'Liberation Serif', serif;text-align:center;white-space:nowrap;">Ενιαίος συντελεστής δυσκαμψίας kζ, kη</div>
<div style="position:absolute;left:375px;top:349px;width:452px;height:42px;background:#D4D0C8;box-sizing:border-box;border-right:3px solid #3C3C3C;border-bottom:3px solid #3C3C3C;"></div>
<div style="position:absolute;left:274.0px;top:357.0px;width:652px;height:24.4px;line-height:20.3px;font-size:20.3px;font-family:'Liberation Serif', serif;text-align:center;white-space:nowrap;">Ενιαίος συντελεστήςκατανομής ροπής αζ, αη</div>
<div style="position:absolute;left:392.0px;top:318.2px;width:600px;height:25.2px;line-height:21px;font-size:21px;font-family:'Liberation Sans', sans-serif;text-align:right;white-space:nowrap;transform:scaleX(1.017);transform-origin:100% 50%;">12,00</div>
<div style="position:absolute;left:392.0px;top:362.2px;width:600px;height:25.2px;line-height:21px;font-size:21px;font-family:'Liberation Sans', sans-serif;text-align:right;white-space:nowrap;transform:scaleX(1.017);transform-origin:100% 50%;">0,50</div>
<svg style="position:absolute;left:923px;top:302px" width="7" height="7"><path d="M0 0 H7 V7Z" fill="#FF0000"/></svg>
<svg style="position:absolute;left:923px;top:347px" width="7" height="7"><path d="M0 0 H7 V7Z" fill="#FF0000"/></svg>
<div style="position:absolute;left:1067px;top:305px;width:119px;height:42px;background:#D4D0C8;box-sizing:border-box;border-right:3px solid #3C3C3C;border-bottom:3px solid #3C3C3C;"></div>
<div style="position:absolute;left:966.0px;top:312.2px;width:319px;height:24.0px;line-height:20px;font-size:20px;font-family:'Liberation Serif', serif;text-align:center;white-space:nowrap;letter-spacing:0.6px">Προεπιλογή</div>
<div style="position:absolute;left:1067px;top:347px;width:119px;height:43px;background:#D4D0C8;box-sizing:border-box;border-right:3px solid #3C3C3C;border-bottom:3px solid #3C3C3C;"></div>
<div style="position:absolute;left:966.0px;top:355.2px;width:319px;height:24.0px;line-height:20px;font-size:20px;font-family:'Liberation Serif', serif;text-align:center;white-space:nowrap;letter-spacing:0.6px">Προεπιλογή</div>
<div style="position:absolute;left:1303px;top:302px;width:363px;height:44px;background:#fff"></div>
<div style="position:absolute;left:1303px;top:347px;width:363px;height:41px;background:#fff"></div>
<div style="position:absolute;left:1312px;top:315px;width:19px;height:19px;background:#fff;border-style:solid;border-width:2px 1px 1px 2px;border-color:#7A7A7A #E0DDD6 #E0DDD6 #7A7A7A;box-sizing:border-box"></div>
<div style="position:absolute;left:1337.5px;top:318.6px;width:600px;height:21.0px;line-height:17.5px;font-size:17.5px;font-family:'Liberation Sans', sans-serif;text-align:left;white-space:nowrap;transform:scaleX(0.962);transform-origin:0% 50%;">Έργα από τέμνουσες</div>
<div style="position:absolute;left:1312px;top:359px;width:19px;height:19px;background:#fff;border-style:solid;border-width:2px 1px 1px 2px;border-color:#7A7A7A #E0DDD6 #E0DDD6 #7A7A7A;box-sizing:border-box"></div>
<div style="position:absolute;left:1337.5px;top:360.6px;width:600px;height:21.0px;line-height:17.5px;font-size:17.5px;font-family:'Liberation Sans', sans-serif;text-align:left;white-space:nowrap;transform:scaleX(0.962);transform-origin:0% 50%;">Στρεπτικές δυσκαμψίες στοιχείων Kz</div>
<div style="position:absolute;left:1407.5px;top:319.2px;width:600px;height:25.2px;line-height:21px;font-size:21px;font-family:'Liberation Sans', sans-serif;text-align:center;white-space:nowrap;transform:scaleX(0.863);transform-origin:50% 50%;">FALSE</div>
<div style="position:absolute;left:1407.5px;top:363.2px;width:600px;height:25.2px;line-height:21px;font-size:21px;font-family:'Liberation Sans', sans-serif;text-align:center;white-space:nowrap;transform:scaleX(0.863);transform-origin:50% 50%;">FALSE</div>
<div style="position:absolute;left:191px;top:500px;width:86px;height:80px;background:#666699;"></div>
<div style="position:absolute;left:191px;top:618px;width:86px;height:80px;background:#FF0000;"></div>
<div style="position:absolute;left:429px;top:500px;width:91px;height:80px;background:#666699;"></div>
<div style="position:absolute;left:429px;top:618px;width:91px;height:80px;background:#FF0000;"></div>
<div style="position:absolute;left:686px;top:500px;width:70px;height:80px;background:#666699;"></div>
<div style="position:absolute;left:686px;top:618px;width:70px;height:80px;background:#FF0000;"></div>
<div style="position:absolute;left:756px;top:618px;width:104px;height:80px;background:#C0C0C0;"></div>
<div style="position:absolute;left:191px;top:500px;width:740px;height:1px;background:#000"></div>
<div style="position:absolute;left:191px;top:580px;width:740px;height:1px;background:#000"></div>
<div style="position:absolute;left:191px;top:500px;width:1px;height:81px;background:#000"></div>
<div style="position:absolute;left:930px;top:500px;width:1px;height:81px;background:#000"></div>
<div style="position:absolute;left:277px;top:500px;width:1px;height:81px;background:#000"></div>
<div style="position:absolute;left:373px;top:500px;width:1px;height:81px;background:#000"></div>
<div style="position:absolute;left:429px;top:500px;width:1px;height:81px;background:#000"></div>
<div style="position:absolute;left:520px;top:500px;width:1px;height:81px;background:#000"></div>
<div style="position:absolute;left:619px;top:500px;width:1px;height:81px;background:#000"></div>
<div style="position:absolute;left:686px;top:500px;width:1px;height:81px;background:#000"></div>
<div style="position:absolute;left:756px;top:500px;width:1px;height:81px;background:#000"></div>
<div style="position:absolute;left:860px;top:500px;width:1px;height:81px;background:#000"></div>
<div style="position:absolute;left:191px;top:540px;width:740px;height:1px;background:#000"></div>
<div style="position:absolute;left:191px;top:618px;width:740px;height:1px;background:#000"></div>
<div style="position:absolute;left:191px;top:698px;width:740px;height:1px;background:#000"></div>
<div style="position:absolute;left:191px;top:618px;width:1px;height:81px;background:#000"></div>
<div style="position:absolute;left:930px;top:618px;width:1px;height:81px;background:#000"></div>
<div style="position:absolute;left:277px;top:618px;width:1px;height:81px;background:#000"></div>
<div style="position:absolute;left:373px;top:618px;width:1px;height:81px;background:#000"></div>
<div style="position:absolute;left:429px;top:618px;width:1px;height:81px;background:#000"></div>
<div style="position:absolute;left:520px;top:618px;width:1px;height:81px;background:#000"></div>
<div style="position:absolute;left:619px;top:618px;width:1px;height:81px;background:#000"></div>
<div style="position:absolute;left:686px;top:618px;width:1px;height:81px;background:#000"></div>
<div style="position:absolute;left:756px;top:618px;width:1px;height:81px;background:#000"></div>
<div style="position:absolute;left:860px;top:618px;width:1px;height:81px;background:#000"></div>
<div style="position:absolute;left:191px;top:658px;width:740px;height:1px;background:#000"></div>
<div style="position:absolute;left:-326.0px;top:512.2px;width:600px;height:25.2px;line-height:21px;font-size:21px;font-family:'Liberation Sans', sans-serif;text-align:right;white-space:nowrap;color:#fff;font-weight:bold">X<span style="font-size:14px;position:relative;top:4px;">CM</span> =</div>
<div style="position:absolute;left:-326.0px;top:552.2px;width:600px;height:25.2px;line-height:21px;font-size:21px;font-family:'Liberation Sans', sans-serif;text-align:right;white-space:nowrap;color:#fff;font-weight:bold">Y<span style="font-size:14px;position:relative;top:4px;">CM</span> =</div>
<div style="position:absolute;left:-83.0px;top:512.2px;width:600px;height:25.2px;line-height:21px;font-size:21px;font-family:'Liberation Sans', sans-serif;text-align:right;white-space:nowrap;color:#fff;font-weight:bold">X'<span style="font-size:14px;position:relative;top:4px;">CM</span> =</div>
<div style="position:absolute;left:-83.0px;top:552.2px;width:600px;height:25.2px;line-height:21px;font-size:21px;font-family:'Liberation Sans', sans-serif;text-align:right;white-space:nowrap;color:#fff;font-weight:bold">Y'<span style="font-size:14px;position:relative;top:4px;">CM</span> =</div>
<div style="position:absolute;left:153.0px;top:512.2px;width:600px;height:25.2px;line-height:21px;font-size:21px;font-family:'Liberation Sans', sans-serif;text-align:right;white-space:nowrap;color:#fff;font-weight:bold">X<span style="font-size:13px;position:relative;top:-9px;">T</span><span style="font-size:14px;position:relative;top:4px;margin-left:-2px">CM</span> =</div>
<div style="position:absolute;left:153.0px;top:552.2px;width:600px;height:25.2px;line-height:21px;font-size:21px;font-family:'Liberation Sans', sans-serif;text-align:right;white-space:nowrap;color:#fff;font-weight:bold">Y<span style="font-size:13px;position:relative;top:-9px;">T</span><span style="font-size:14px;position:relative;top:4px;margin-left:-2px">CM</span> =</div>
<svg style="position:absolute;left:270px;top:501px" width="7" height="7"><path d="M0 0 H7 V7Z" fill="#FF0000"/></svg>
<svg style="position:absolute;left:513px;top:501px" width="7" height="7"><path d="M0 0 H7 V7Z" fill="#FF0000"/></svg>
<svg style="position:absolute;left:749px;top:501px" width="7" height="7"><path d="M0 0 H7 V7Z" fill="#FF0000"/></svg>
<div style="position:absolute;left:25.0px;top:512.2px;width:600px;height:25.2px;line-height:21px;font-size:21px;font-family:'Liberation Sans', sans-serif;text-align:center;white-space:nowrap;transform:scaleX(1.017);transform-origin:50% 50%;">3,000</div>
<div style="position:absolute;left:25.0px;top:552.2px;width:600px;height:25.2px;line-height:21px;font-size:21px;font-family:'Liberation Sans', sans-serif;text-align:center;white-space:nowrap;transform:scaleX(1.017);transform-origin:50% 50%;">2,500</div>
<div style="position:absolute;left:16.0px;top:512.2px;width:600px;height:25.2px;line-height:21px;font-size:21px;font-family:'Liberation Sans', sans-serif;text-align:right;white-space:nowrap;transform:scaleX(1.017);transform-origin:100% 50%;">3,727</div>
<div style="position:absolute;left:16.0px;top:552.2px;width:600px;height:25.2px;line-height:21px;font-size:21px;font-family:'Liberation Sans', sans-serif;text-align:right;white-space:nowrap;transform:scaleX(1.017);transform-origin:100% 50%;">1,166</div>
<div style="position:absolute;left:508.0px;top:512.2px;width:600px;height:25.2px;line-height:21px;font-size:21px;font-family:'Liberation Sans', sans-serif;text-align:center;white-space:nowrap;transform:scaleX(1.019);transform-origin:50% 50%;">-0,626</div>
<div style="position:absolute;left:508.0px;top:552.2px;width:600px;height:25.2px;line-height:21px;font-size:21px;font-family:'Liberation Sans', sans-serif;text-align:center;white-space:nowrap;transform:scaleX(1.019);transform-origin:50% 50%;">-2,335</div>
<div style="position:absolute;left:376.0px;top:512.2px;width:600px;height:25.2px;line-height:21px;font-size:21px;font-family:'Liberation Sans', sans-serif;text-align:left;white-space:nowrap;transform:scaleX(1.072);transform-origin:0% 50%;font-style:italic">m</div>
<div style="position:absolute;left:376.0px;top:552.2px;width:600px;height:25.2px;line-height:21px;font-size:21px;font-family:'Liberation Sans', sans-serif;text-align:left;white-space:nowrap;transform:scaleX(1.072);transform-origin:0% 50%;font-style:italic">m</div>
<div style="position:absolute;left:376.0px;top:631.2px;width:600px;height:25.2px;line-height:21px;font-size:21px;font-family:'Liberation Sans', sans-serif;text-align:left;white-space:nowrap;transform:scaleX(1.072);transform-origin:0% 50%;font-style:italic">m</div>
<div style="position:absolute;left:376.0px;top:671.2px;width:600px;height:25.2px;line-height:21px;font-size:21px;font-family:'Liberation Sans', sans-serif;text-align:left;white-space:nowrap;transform:scaleX(1.072);transform-origin:0% 50%;font-style:italic">m</div>
<div style="position:absolute;left:622.0px;top:512.2px;width:600px;height:25.2px;line-height:21px;font-size:21px;font-family:'Liberation Sans', sans-serif;text-align:left;white-space:nowrap;transform:scaleX(1.072);transform-origin:0% 50%;font-style:italic">m</div>
<div style="position:absolute;left:622.0px;top:552.2px;width:600px;height:25.2px;line-height:21px;font-size:21px;font-family:'Liberation Sans', sans-serif;text-align:left;white-space:nowrap;transform:scaleX(1.072);transform-origin:0% 50%;font-style:italic">m</div>
<div style="position:absolute;left:622.0px;top:631.2px;width:600px;height:25.2px;line-height:21px;font-size:21px;font-family:'Liberation Sans', sans-serif;text-align:left;white-space:nowrap;transform:scaleX(1.072);transform-origin:0% 50%;font-style:italic">m</div>
<div style="position:absolute;left:622.0px;top:671.2px;width:600px;height:25.2px;line-height:21px;font-size:21px;font-family:'Liberation Sans', sans-serif;text-align:left;white-space:nowrap;transform:scaleX(1.072);transform-origin:0% 50%;font-style:italic">m</div>
<div style="position:absolute;left:863.0px;top:512.2px;width:600px;height:25.2px;line-height:21px;font-size:21px;font-family:'Liberation Sans', sans-serif;text-align:left;white-space:nowrap;transform:scaleX(1.072);transform-origin:0% 50%;font-style:italic">m</div>
<div style="position:absolute;left:863.0px;top:552.2px;width:600px;height:25.2px;line-height:21px;font-size:21px;font-family:'Liberation Sans', sans-serif;text-align:left;white-space:nowrap;transform:scaleX(1.072);transform-origin:0% 50%;font-style:italic">m</div>
<div style="position:absolute;left:863.0px;top:631.2px;width:600px;height:25.2px;line-height:21px;font-size:21px;font-family:'Liberation Sans', sans-serif;text-align:left;white-space:nowrap;transform:scaleX(1.072);transform-origin:0% 50%;font-style:italic">m</div>
<div style="position:absolute;left:863.0px;top:671.2px;width:600px;height:25.2px;line-height:21px;font-size:21px;font-family:'Liberation Sans', sans-serif;text-align:left;white-space:nowrap;transform:scaleX(1.072);transform-origin:0% 50%;font-style:italic">m</div>
<div style="position:absolute;left:-326.0px;top:631.2px;width:600px;height:25.2px;line-height:21px;font-size:21px;font-family:'Liberation Sans', sans-serif;text-align:right;white-space:nowrap;color:#fff;font-weight:bold">X<span style="font-size:14px;position:relative;top:4px;">CT</span> =</div>
<div style="position:absolute;left:-326.0px;top:671.2px;width:600px;height:25.2px;line-height:21px;font-size:21px;font-family:'Liberation Sans', sans-serif;text-align:right;white-space:nowrap;color:#fff;font-weight:bold">Y<span style="font-size:14px;position:relative;top:4px;">CT</span> =</div>
<div style="position:absolute;left:-83.0px;top:631.2px;width:600px;height:25.2px;line-height:21px;font-size:21px;font-family:'Liberation Sans', sans-serif;text-align:right;white-space:nowrap;color:#fff;font-weight:bold">x'<span style="font-size:14px;position:relative;top:4px;">CT</span> =</div>
<div style="position:absolute;left:-83.0px;top:671.2px;width:600px;height:25.2px;line-height:21px;font-size:21px;font-family:'Liberation Sans', sans-serif;text-align:right;white-space:nowrap;color:#fff;font-weight:bold">y'<span style="font-size:14px;position:relative;top:4px;">CT</span> =</div>
<div style="position:absolute;left:153.0px;top:631.2px;width:600px;height:25.2px;line-height:21px;font-size:21px;font-family:'Liberation Sans', sans-serif;text-align:right;white-space:nowrap;color:#fff;font-weight:bold">X<span style="font-size:14px;position:relative;top:4px;">CT</span><span style="font-size:13px;position:relative;top:-10px;">T</span> =</div>
<div style="position:absolute;left:153.0px;top:671.2px;width:600px;height:25.2px;line-height:21px;font-size:21px;font-family:'Liberation Sans', sans-serif;text-align:right;white-space:nowrap;color:#fff;font-weight:bold">Y<span style="font-size:14px;position:relative;top:4px;">CT</span><span style="font-size:13px;position:relative;top:-10px;">T</span> =</div>
<div style="position:absolute;left:25.0px;top:631.2px;width:600px;height:25.2px;line-height:21px;font-size:21px;font-family:'Liberation Sans', sans-serif;text-align:center;white-space:nowrap;transform:scaleX(1.017);transform-origin:50% 50%;">2,688</div>
<div style="position:absolute;left:25.0px;top:671.2px;width:600px;height:25.2px;line-height:21px;font-size:21px;font-family:'Liberation Sans', sans-serif;text-align:center;white-space:nowrap;transform:scaleX(1.017);transform-origin:50% 50%;">4,897</div>
<div style="position:absolute;left:16.0px;top:631.2px;width:600px;height:25.2px;line-height:21px;font-size:21px;font-family:'Liberation Sans', sans-serif;text-align:right;white-space:nowrap;transform:scaleX(1.017);transform-origin:100% 50%;">4,353</div>
<div style="position:absolute;left:16.0px;top:671.2px;width:600px;height:25.2px;line-height:21px;font-size:21px;font-family:'Liberation Sans', sans-serif;text-align:right;white-space:nowrap;transform:scaleX(1.017);transform-origin:100% 50%;">3,500</div>
<div style="position:absolute;left:508.0px;top:631.2px;width:600px;height:25.2px;line-height:21px;font-size:21px;font-family:'Liberation Sans', sans-serif;text-align:center;white-space:nowrap;transform:scaleX(1.016);transform-origin:50% 50%;">0,0</div>
<div style="position:absolute;left:508.0px;top:671.2px;width:600px;height:25.2px;line-height:21px;font-size:21px;font-family:'Liberation Sans', sans-serif;text-align:center;white-space:nowrap;transform:scaleX(1.016);transform-origin:50% 50%;">0,0</div>
<div style="position:absolute;left:191px;top:736px;width:86px;height:78px;background:#339966;"></div>
<div style="position:absolute;left:429px;top:736px;width:91px;height:78px;background:#339966;"></div>
<div style="position:absolute;left:686px;top:736px;width:70px;height:78px;background:#339966;"></div>
<div style="position:absolute;left:191px;top:736px;width:740px;height:1px;background:#000"></div>
<div style="position:absolute;left:191px;top:814px;width:740px;height:1px;background:#000"></div>
<div style="position:absolute;left:191px;top:736px;width:1px;height:79px;background:#000"></div>
<div style="position:absolute;left:930px;top:736px;width:1px;height:79px;background:#000"></div>
<div style="position:absolute;left:277px;top:736px;width:1px;height:79px;background:#000"></div>
<div style="position:absolute;left:373px;top:736px;width:1px;height:79px;background:#000"></div>
<div style="position:absolute;left:429px;top:736px;width:1px;height:79px;background:#000"></div>
<div style="position:absolute;left:520px;top:736px;width:1px;height:79px;background:#000"></div>
<div style="position:absolute;left:619px;top:736px;width:1px;height:79px;background:#000"></div>
<div style="position:absolute;left:686px;top:736px;width:1px;height:79px;background:#000"></div>
<div style="position:absolute;left:756px;top:736px;width:1px;height:79px;background:#000"></div>
<div style="position:absolute;left:860px;top:736px;width:1px;height:79px;background:#000"></div>
<div style="position:absolute;left:191px;top:774px;width:740px;height:1px;background:#000"></div>
<div style="position:absolute;left:-326.0px;top:746.2px;width:600px;height:25.2px;line-height:21px;font-size:21px;font-family:'Liberation Sans', sans-serif;text-align:right;white-space:nowrap;transform:scaleX(0.979);transform-origin:100% 50%;color:#fff;font-weight:bold">H =</div>
<div style="position:absolute;left:-326.0px;top:786.2px;width:600px;height:25.2px;line-height:21px;font-size:21px;font-family:'Liberation Sans', sans-serif;text-align:right;white-space:nowrap;transform:scaleX(0.974);transform-origin:100% 50%;color:#fff;font-weight:bold">ω =</div>
<div style="position:absolute;left:-83.0px;top:746.2px;width:600px;height:25.2px;line-height:21px;font-size:21px;font-family:'Liberation Sans', sans-serif;text-align:right;white-space:nowrap;color:#fff;font-weight:bold">H<span style="font-size:14px;position:relative;top:4px;">X</span> =</div>
<div style="position:absolute;left:-83.0px;top:786.2px;width:600px;height:25.2px;line-height:21px;font-size:21px;font-family:'Liberation Sans', sans-serif;text-align:right;white-space:nowrap;color:#fff;font-weight:bold">H<span style="font-size:14px;position:relative;top:4px;">Y</span> =</div>
<div style="position:absolute;left:153.0px;top:746.2px;width:600px;height:25.2px;line-height:21px;font-size:21px;font-family:'Liberation Sans', sans-serif;text-align:right;white-space:nowrap;color:#fff;font-weight:bold">H<span style="font-size:14px;position:relative;top:4px;">x'</span> =</div>
<div style="position:absolute;left:153.0px;top:786.2px;width:600px;height:25.2px;line-height:21px;font-size:21px;font-family:'Liberation Sans', sans-serif;text-align:right;white-space:nowrap;color:#fff;font-weight:bold">H<span style="font-size:14px;position:relative;top:4px;">y'</span> =</div>
<svg style="position:absolute;left:270px;top:737px" width="7" height="7"><path d="M0 0 H7 V7Z" fill="#FF0000"/></svg>
<svg style="position:absolute;left:270px;top:775px" width="7" height="7"><path d="M0 0 H7 V7Z" fill="#FF0000"/></svg>
<svg style="position:absolute;left:513px;top:737px" width="7" height="7"><path d="M0 0 H7 V7Z" fill="#FF0000"/></svg>
<svg style="position:absolute;left:513px;top:775px" width="7" height="7"><path d="M0 0 H7 V7Z" fill="#FF0000"/></svg>
<svg style="position:absolute;left:749px;top:737px" width="7" height="7"><path d="M0 0 H7 V7Z" fill="#FF0000"/></svg>
<div style="position:absolute;left:-230.0px;top:746.2px;width:600px;height:25.2px;line-height:21px;font-size:21px;font-family:'Liberation Sans', sans-serif;text-align:right;white-space:nowrap;transform:scaleX(1.018);transform-origin:100% 50%;">90,600</div>
<div style="position:absolute;left:-230.0px;top:786.2px;width:600px;height:25.2px;line-height:21px;font-size:21px;font-family:'Liberation Sans', sans-serif;text-align:right;white-space:nowrap;transform:scaleX(1.017);transform-origin:100% 50%;">0,00</div>
<div style="position:absolute;left:16.0px;top:746.2px;width:600px;height:25.2px;line-height:21px;font-size:21px;font-family:'Liberation Sans', sans-serif;text-align:right;white-space:nowrap;transform:scaleX(1.018);transform-origin:100% 50%;">90,600</div>
<div style="position:absolute;left:16.0px;top:786.2px;width:600px;height:25.2px;line-height:21px;font-size:21px;font-family:'Liberation Sans', sans-serif;text-align:right;white-space:nowrap;transform:scaleX(1.017);transform-origin:100% 50%;">0,000</div>
<div style="position:absolute;left:257.0px;top:746.2px;width:600px;height:25.2px;line-height:21px;font-size:21px;font-family:'Liberation Sans', sans-serif;text-align:right;white-space:nowrap;transform:scaleX(1.018);transform-origin:100% 50%;">83,741</div>
<div style="position:absolute;left:257.0px;top:786.2px;width:600px;height:25.2px;line-height:21px;font-size:21px;font-family:'Liberation Sans', sans-serif;text-align:right;white-space:nowrap;transform:scaleX(1.019);transform-origin:100% 50%;">-34,581</div>
<div style="position:absolute;left:376.0px;top:746.2px;width:600px;height:25.2px;line-height:21px;font-size:21px;font-family:'Liberation Sans', sans-serif;text-align:left;white-space:nowrap;transform:scaleX(1.007);transform-origin:0% 50%;font-style:italic">kN</div>
<div style="position:absolute;left:622.0px;top:746.2px;width:600px;height:25.2px;line-height:21px;font-size:21px;font-family:'Liberation Sans', sans-serif;text-align:left;white-space:nowrap;transform:scaleX(1.007);transform-origin:0% 50%;font-style:italic">kN</div>
<div style="position:absolute;left:863.0px;top:746.2px;width:600px;height:25.2px;line-height:21px;font-size:21px;font-family:'Liberation Sans', sans-serif;text-align:left;white-space:nowrap;transform:scaleX(1.007);transform-origin:0% 50%;font-style:italic">kN</div>
<div style="position:absolute;left:622.0px;top:786.2px;width:600px;height:25.2px;line-height:21px;font-size:21px;font-family:'Liberation Sans', sans-serif;text-align:left;white-space:nowrap;transform:scaleX(1.007);transform-origin:0% 50%;font-style:italic">kN</div>
<div style="position:absolute;left:863.0px;top:786.2px;width:600px;height:25.2px;line-height:21px;font-size:21px;font-family:'Liberation Sans', sans-serif;text-align:left;white-space:nowrap;transform:scaleX(1.007);transform-origin:0% 50%;font-style:italic">kN</div>
<div style="position:absolute;left:377.0px;top:780.0px;width:600px;height:15.6px;line-height:13px;font-size:13px;font-family:'Liberation Sans', sans-serif;text-align:left;white-space:nowrap;font-style:italic">o</div>
<div style="position:absolute;left:193px;top:738px;width:35px;height:69px;background:#D4D0C8;box-sizing:border-box;border-right:3px solid #3C3C3C;border-bottom:3px solid #3C3C3C;"></div>
<div style="position:absolute;left:92.0px;top:764.3px;width:235px;height:18.0px;line-height:15px;font-size:15px;font-family:'Liberation Sans', sans-serif;text-align:center;white-space:nowrap;font-weight:bold">&gt;&gt;</div>
<div style="position:absolute;left:433px;top:738px;width:35px;height:69px;background:#D4D0C8;box-sizing:border-box;border-right:3px solid #3C3C3C;border-bottom:3px solid #3C3C3C;"></div>
<div style="position:absolute;left:332.0px;top:764.3px;width:235px;height:18.0px;line-height:15px;font-size:15px;font-family:'Liberation Sans', sans-serif;text-align:center;white-space:nowrap;font-weight:bold">&lt;&lt;</div>
<div style="position:absolute;left:44px;top:540px;width:147px;height:1px;background:#fff"></div>
<div style="position:absolute;left:179px;top:510px;width:3px;height:55px;background:#404040"></div>
<div style="position:absolute;left:127px;top:562px;width:55px;height:3px;background:#404040"></div>
<div style="position:absolute;left:129px;top:511px;width:50px;height:51px;background:#000;border-top:1px solid #EFE8DA;border-left:1px solid #EFE8DA;box-sizing:border-box"></div>
<div style="position:absolute;left:123.5px;top:527.2px;width:60px;height:25.2px;line-height:21px;font-size:21px;font-family:'Liberation Sans', sans-serif;text-align:center;white-space:nowrap;transform:scaleX(0.860);transform-origin:50% 50%;color:#fff;font-weight:bold">CM</div>
<div style="position:absolute;left:1069.0px;top:443.2px;width:600px;height:25.2px;line-height:21px;font-size:21px;font-family:'Liberation Sans', sans-serif;text-align:left;white-space:nowrap;font-style:italic">Κύριο Σύστημα συντεταγμένων</div>
<div style="position:absolute;left:1065px;top:466px;width:429px;height:2px;background:#000"></div>
<div style="position:absolute;left:1843.0px;top:443.2px;width:600px;height:25.2px;line-height:21px;font-size:21px;font-family:'Liberation Sans', sans-serif;text-align:left;white-space:nowrap;font-style:italic">Αρχικό Σύστημα συντεταγμένων</div>
<div style="position:absolute;left:1840px;top:466px;width:371px;height:2px;background:#000"></div>
<div style="position:absolute;left:1065px;top:500px;width:238px;height:1px;background:#000"></div>
<div style="position:absolute;left:1065px;top:736px;width:238px;height:1px;background:#000"></div>
<div style="position:absolute;left:1065px;top:500px;width:1px;height:237px;background:#000"></div>
<div style="position:absolute;left:1302px;top:500px;width:1px;height:237px;background:#000"></div>
<div style="position:absolute;left:1150px;top:500px;width:1px;height:237px;background:#000"></div>
<div style="position:absolute;left:1065px;top:540px;width:238px;height:1px;background:#000"></div>
<div style="position:absolute;left:1065px;top:580px;width:238px;height:1px;background:#000"></div>
<div style="position:absolute;left:1065px;top:618px;width:238px;height:1px;background:#000"></div>
<div style="position:absolute;left:1065px;top:658px;width:238px;height:1px;background:#000"></div>
<div style="position:absolute;left:1065px;top:698px;width:238px;height:1px;background:#000"></div>
<div style="position:absolute;left:1150px;top:698px;width:152px;height:38px;background:#FFC000;"></div>
<div style="position:absolute;left:1150px;top:697px;width:152px;height:1px;background:#000"></div>
<div style="position:absolute;left:1069.0px;top:512.2px;width:600px;height:25.2px;line-height:21px;font-size:21px;font-family:'Liberation Sans', sans-serif;text-align:left;white-space:nowrap;font-weight:bold;font-style:italic">e&#8201;<span style="font-size:14px;position:relative;top:5px;">ox</span> =</div>
<div style="position:absolute;left:1069.0px;top:552.2px;width:600px;height:25.2px;line-height:21px;font-size:21px;font-family:'Liberation Sans', sans-serif;text-align:left;white-space:nowrap;font-weight:bold;font-style:italic">e&#8201;<span style="font-size:14px;position:relative;top:5px;">oy</span> =</div>
<div style="position:absolute;left:1069.0px;top:591.2px;width:600px;height:25.2px;line-height:21px;font-size:21px;font-family:'Liberation Sans', sans-serif;text-align:left;white-space:nowrap;font-weight:bold">M<span style="font-size:15px;position:relative;top:4px;">CT</span> =</div>
<div style="position:absolute;left:1069.0px;top:631.2px;width:600px;height:25.2px;line-height:21px;font-size:21px;font-family:'Liberation Sans', sans-serif;text-align:left;white-space:nowrap;font-weight:bold;font-style:italic">d&#8201;<span style="font-size:14px;position:relative;top:5px;">xo</span> =</div>
<div style="position:absolute;left:1069.0px;top:671.2px;width:600px;height:25.2px;line-height:21px;font-size:21px;font-family:'Liberation Sans', sans-serif;text-align:left;white-space:nowrap;font-weight:bold;font-style:italic">d&#8201;<span style="font-size:14px;position:relative;top:5px;">yo</span> =</div>
<div style="position:absolute;left:1069.0px;top:709.2px;width:600px;height:25.2px;line-height:21px;font-size:21px;font-family:'Liberation Sans', sans-serif;text-align:left;white-space:nowrap;font-weight:bold">θ<span style="font-size:14px;position:relative;top:4px;">z</span> =</div>
<svg style="position:absolute;left:1143px;top:501px" width="7" height="7"><path d="M0 0 H7 V7Z" fill="#FF0000"/></svg>
<svg style="position:absolute;left:1143px;top:619px" width="7" height="7"><path d="M0 0 H7 V7Z" fill="#FF0000"/></svg>
<svg style="position:absolute;left:1143px;top:659px" width="7" height="7"><path d="M0 0 H7 V7Z" fill="#FF0000"/></svg>
<div style="position:absolute;left:1154.0px;top:512.2px;width:600px;height:25.2px;line-height:21px;font-size:21px;font-family:'Liberation Sans', sans-serif;text-align:left;white-space:nowrap;transform:scaleX(1.019);transform-origin:0% 50%;">-0,626</div>
<div style="position:absolute;left:1154.0px;top:552.2px;width:600px;height:25.2px;line-height:21px;font-size:21px;font-family:'Liberation Sans', sans-serif;text-align:left;white-space:nowrap;transform:scaleX(1.019);transform-origin:0% 50%;">-2,335</div>
<div style="position:absolute;left:1154.0px;top:591.2px;width:600px;height:25.2px;line-height:21px;font-size:21px;font-family:'Liberation Sans', sans-serif;text-align:left;white-space:nowrap;transform:scaleX(1.018);transform-origin:0% 50%;">217,159</div>
<div style="position:absolute;left:1154.0px;top:631.2px;width:600px;height:25.2px;line-height:21px;font-size:21px;font-family:'Liberation Sans', sans-serif;text-align:left;white-space:nowrap;transform:scaleX(1.018);transform-origin:0% 50%;">0,3052</div>
<div style="position:absolute;left:1154.0px;top:671.2px;width:600px;height:25.2px;line-height:21px;font-size:21px;font-family:'Liberation Sans', sans-serif;text-align:left;white-space:nowrap;transform:scaleX(1.019);transform-origin:0% 50%;">-0,2145</div>
<div style="position:absolute;left:1154.0px;top:709.2px;width:600px;height:25.2px;line-height:21px;font-size:21px;font-family:'Liberation Sans', sans-serif;text-align:left;white-space:nowrap;transform:scaleX(1.018);transform-origin:0% 50%;">0,0000692250</div>
<div style="position:absolute;left:1306.0px;top:512.2px;width:600px;height:25.2px;line-height:21px;font-size:21px;font-family:'Liberation Sans', sans-serif;text-align:left;white-space:nowrap;transform:scaleX(1.072);transform-origin:0% 50%;font-style:italic">m</div>
<div style="position:absolute;left:1306.0px;top:552.2px;width:600px;height:25.2px;line-height:21px;font-size:21px;font-family:'Liberation Sans', sans-serif;text-align:left;white-space:nowrap;transform:scaleX(1.072);transform-origin:0% 50%;font-style:italic">m</div>
<div style="position:absolute;left:1306.0px;top:591.2px;width:600px;height:25.2px;line-height:21px;font-size:21px;font-family:'Liberation Sans', sans-serif;text-align:left;white-space:nowrap;transform:scaleX(1.033);transform-origin:0% 50%;font-style:italic">kNm</div>
<div style="position:absolute;left:1306.0px;top:631.2px;width:600px;height:25.2px;line-height:21px;font-size:21px;font-family:'Liberation Sans', sans-serif;text-align:left;white-space:nowrap;transform:scaleX(1.072);transform-origin:0% 50%;font-style:italic">mm</div>
<div style="position:absolute;left:1306.0px;top:671.2px;width:600px;height:25.2px;line-height:21px;font-size:21px;font-family:'Liberation Sans', sans-serif;text-align:left;white-space:nowrap;transform:scaleX(1.072);transform-origin:0% 50%;font-style:italic">mm</div>
<div style="position:absolute;left:1494px;top:540px;width:256px;height:1px;background:#000"></div>
<div style="position:absolute;left:1494px;top:658px;width:256px;height:1px;background:#000"></div>
<div style="position:absolute;left:1494px;top:540px;width:1px;height:119px;background:#000"></div>
<div style="position:absolute;left:1749px;top:540px;width:1px;height:119px;background:#000"></div>
<div style="position:absolute;left:1560px;top:540px;width:1px;height:119px;background:#000"></div>
<div style="position:absolute;left:1666px;top:540px;width:1px;height:119px;background:#000"></div>
<div style="position:absolute;left:1494px;top:580px;width:256px;height:1px;background:#000"></div>
<div style="position:absolute;left:1494px;top:618px;width:256px;height:1px;background:#000"></div>
<div style="position:absolute;left:1560px;top:540px;width:106px;height:40px;background:#FF9900;"></div>
<div style="position:absolute;left:1560px;top:540px;width:107px;height:1px;background:#000"></div>
<div style="position:absolute;left:1560px;top:580px;width:107px;height:1px;background:#000"></div>
<div style="position:absolute;left:1560px;top:540px;width:1px;height:41px;background:#000"></div>
<div style="position:absolute;left:1666px;top:540px;width:1px;height:41px;background:#000"></div>
<div style="position:absolute;left:957.0px;top:552.2px;width:600px;height:25.2px;line-height:21px;font-size:21px;font-family:'Liberation Sans', sans-serif;text-align:right;white-space:nowrap;font-weight:bold">K<span style="font-size:15px;position:relative;top:4px;">θ</span> =</div>
<div style="position:absolute;left:957.0px;top:591.2px;width:600px;height:25.2px;line-height:21px;font-size:21px;font-family:'Liberation Sans', sans-serif;text-align:right;white-space:nowrap;font-weight:bold">r<span style="font-size:15px;position:relative;top:4px;">x</span> =</div>
<div style="position:absolute;left:957.0px;top:631.2px;width:600px;height:25.2px;line-height:21px;font-size:21px;font-family:'Liberation Sans', sans-serif;text-align:right;white-space:nowrap;font-weight:bold">r<span style="font-size:15px;position:relative;top:4px;">y</span> =</div>
<div style="position:absolute;left:1063.0px;top:552.2px;width:600px;height:25.2px;line-height:21px;font-size:21px;font-family:'Liberation Sans', sans-serif;text-align:right;white-space:nowrap;transform:scaleX(1.018);transform-origin:100% 50%;">3137,006</div>
<div style="position:absolute;left:1063.0px;top:591.2px;width:600px;height:25.2px;line-height:21px;font-size:21px;font-family:'Liberation Sans', sans-serif;text-align:right;white-space:nowrap;transform:scaleX(1.048);transform-origin:100% 50%;">4,411</div>
<div style="position:absolute;left:1063.0px;top:631.2px;width:600px;height:25.2px;line-height:21px;font-size:21px;font-family:'Liberation Sans', sans-serif;text-align:right;white-space:nowrap;transform:scaleX(1.017);transform-origin:100% 50%;">3,381</div>
<div style="position:absolute;left:1670.0px;top:549.2px;width:600px;height:25.2px;line-height:21px;font-size:21px;font-family:'Liberation Sans', sans-serif;text-align:left;white-space:nowrap;transform:scaleX(1.048);transform-origin:0% 50%;font-style:italic">MN·m</div>
<div style="position:absolute;left:1670.0px;top:591.2px;width:600px;height:25.2px;line-height:21px;font-size:21px;font-family:'Liberation Sans', sans-serif;text-align:left;white-space:nowrap;transform:scaleX(1.072);transform-origin:0% 50%;font-style:italic">m</div>
<div style="position:absolute;left:1670.0px;top:631.2px;width:600px;height:25.2px;line-height:21px;font-size:21px;font-family:'Liberation Sans', sans-serif;text-align:left;white-space:nowrap;transform:scaleX(1.072);transform-origin:0% 50%;font-style:italic">m</div>
<div style="position:absolute;left:1840px;top:500px;width:289px;height:1px;background:#000"></div>
<div style="position:absolute;left:1840px;top:658px;width:289px;height:1px;background:#000"></div>
<div style="position:absolute;left:1840px;top:500px;width:1px;height:159px;background:#000"></div>
<div style="position:absolute;left:2128px;top:500px;width:1px;height:159px;background:#000"></div>
<div style="position:absolute;left:1914px;top:500px;width:1px;height:159px;background:#000"></div>
<div style="position:absolute;left:2040px;top:500px;width:1px;height:159px;background:#000"></div>
<div style="position:absolute;left:1840px;top:540px;width:289px;height:1px;background:#000"></div>
<div style="position:absolute;left:1840px;top:580px;width:289px;height:1px;background:#000"></div>
<div style="position:absolute;left:1840px;top:618px;width:289px;height:1px;background:#000"></div>
<div style="position:absolute;left:1844.0px;top:512.2px;width:600px;height:25.2px;line-height:21px;font-size:21px;font-family:'Liberation Sans', sans-serif;text-align:left;white-space:nowrap;font-weight:bold;font-style:italic">e&#8201;<span style="font-size:14px;position:relative;top:5px;">X</span> =</div>
<div style="position:absolute;left:1844.0px;top:552.2px;width:600px;height:25.2px;line-height:21px;font-size:21px;font-family:'Liberation Sans', sans-serif;text-align:left;white-space:nowrap;font-weight:bold;font-style:italic">e&#8201;<span style="font-size:14px;position:relative;top:5px;">Y</span> =</div>
<div style="position:absolute;left:1844.0px;top:591.2px;width:600px;height:25.2px;line-height:21px;font-size:21px;font-family:'Liberation Sans', sans-serif;text-align:left;white-space:nowrap;font-weight:bold;font-style:italic">d&#8201;<span style="font-size:14px;position:relative;top:5px;">X</span> =</div>
<div style="position:absolute;left:1844.0px;top:631.2px;width:600px;height:25.2px;line-height:21px;font-size:21px;font-family:'Liberation Sans', sans-serif;text-align:left;white-space:nowrap;font-weight:bold;font-style:italic">d&#8201;<span style="font-size:14px;position:relative;top:5px;">Y</span> =</div>
<svg style="position:absolute;left:1907px;top:501px" width="7" height="7"><path d="M0 0 H7 V7Z" fill="#FF0000"/></svg>
<svg style="position:absolute;left:1907px;top:581px" width="7" height="7"><path d="M0 0 H7 V7Z" fill="#FF0000"/></svg>
<div style="position:absolute;left:1917.0px;top:512.2px;width:600px;height:25.2px;line-height:21px;font-size:21px;font-family:'Liberation Sans', sans-serif;text-align:left;white-space:nowrap;transform:scaleX(1.017);transform-origin:0% 50%;">0,312</div>
<div style="position:absolute;left:1917.0px;top:552.2px;width:600px;height:25.2px;line-height:21px;font-size:21px;font-family:'Liberation Sans', sans-serif;text-align:left;white-space:nowrap;transform:scaleX(1.019);transform-origin:0% 50%;">-2,397</div>
<div style="position:absolute;left:1917.0px;top:591.2px;width:600px;height:25.2px;line-height:21px;font-size:21px;font-family:'Liberation Sans', sans-serif;text-align:left;white-space:nowrap;transform:scaleX(1.018);transform-origin:0% 50%;">0,363943</div>
<div style="position:absolute;left:1917.0px;top:631.2px;width:600px;height:25.2px;line-height:21px;font-size:21px;font-family:'Liberation Sans', sans-serif;text-align:left;white-space:nowrap;transform:scaleX(1.019);transform-origin:0% 50%;">-0,081738</div>
<div style="position:absolute;left:2044.0px;top:512.2px;width:600px;height:25.2px;line-height:21px;font-size:21px;font-family:'Liberation Sans', sans-serif;text-align:left;white-space:nowrap;transform:scaleX(1.072);transform-origin:0% 50%;font-style:italic">m</div>
<div style="position:absolute;left:2044.0px;top:552.2px;width:600px;height:25.2px;line-height:21px;font-size:21px;font-family:'Liberation Sans', sans-serif;text-align:left;white-space:nowrap;transform:scaleX(1.072);transform-origin:0% 50%;font-style:italic">m</div>
<div style="position:absolute;left:2044.0px;top:591.2px;width:600px;height:25.2px;line-height:21px;font-size:21px;font-family:'Liberation Sans', sans-serif;text-align:left;white-space:nowrap;transform:scaleX(1.072);transform-origin:0% 50%;font-style:italic">mm</div>
<div style="position:absolute;left:2044.0px;top:631.2px;width:600px;height:25.2px;line-height:21px;font-size:21px;font-family:'Liberation Sans', sans-serif;text-align:left;white-space:nowrap;transform:scaleX(1.072);transform-origin:0% 50%;font-style:italic">mm</div>
<div style="position:absolute;left:2369.0px;top:631.2px;width:600px;height:25.2px;line-height:21px;font-size:21px;font-family:'Liberation Sans', sans-serif;text-align:left;white-space:nowrap;transform:scaleX(1.014);transform-origin:0% 50%;">hx</div>
<div style="position:absolute;left:2369.0px;top:671.2px;width:600px;height:25.2px;line-height:21px;font-size:21px;font-family:'Liberation Sans', sans-serif;text-align:left;white-space:nowrap;transform:scaleX(1.035);transform-origin:0% 50%;">hy</div>
<div style="position:absolute;left:2032.0px;top:631.2px;width:600px;height:25.2px;line-height:21px;font-size:21px;font-family:'Liberation Sans', sans-serif;text-align:right;white-space:nowrap;transform:scaleX(1.018);transform-origin:100% 50%;">83,740900</div>
<div style="position:absolute;left:2032.0px;top:671.2px;width:600px;height:25.2px;line-height:21px;font-size:21px;font-family:'Liberation Sans', sans-serif;text-align:right;white-space:nowrap;transform:scaleX(1.019);transform-origin:100% 50%;">-34,581</div>
<div style="position:absolute;left:191px;top:878px;width:86px;height:40px;background:#FFCC00;"></div>
<div style="position:absolute;left:277px;top:878px;width:96px;height:40px;background:#FFCC00;"></div>
<div style="position:absolute;left:373px;top:878px;width:56px;height:40px;background:#FFCC00;"></div>
<div style="position:absolute;left:429px;top:878px;width:91px;height:40px;background:#FFCC00;"></div>
<div style="position:absolute;left:860px;top:878px;width:70px;height:40px;background:#FFCC00;"></div>
<div style="position:absolute;left:930px;top:878px;width:66px;height:40px;background:#FFCC00;"></div>
<div style="position:absolute;left:996px;top:878px;width:69px;height:40px;background:#FFCC00;"></div>
<div style="position:absolute;left:1065px;top:878px;width:85px;height:40px;background:#FFCC00;"></div>
<div style="position:absolute;left:1302px;top:878px;width:96px;height:40px;background:#FFCC00;"></div>
<div style="position:absolute;left:1398px;top:878px;width:96px;height:40px;background:#FFCC00;"></div>
<div style="position:absolute;left:1560px;top:878px;width:106px;height:40px;background:#FFCC00;"></div>
<div style="position:absolute;left:1749px;top:878px;width:91px;height:40px;background:#FFCC00;"></div>
<div style="position:absolute;left:1840px;top:878px;width:74px;height:40px;background:#FFCC00;"></div>
<div style="position:absolute;left:1914px;top:878px;width:126px;height:40px;background:#FFCC00;"></div>
<div style="position:absolute;left:2040px;top:878px;width:88px;height:40px;background:#FFCC00;"></div>
<div style="position:absolute;left:2128px;top:878px;width:83px;height:40px;background:#FFCC00;"></div>
<div style="position:absolute;left:2211px;top:878px;width:154px;height:40px;background:#FFCC00;"></div>
<div style="position:absolute;left:2365px;top:878px;width:157px;height:40px;background:#FFCC00;"></div>
<div style="position:absolute;left:2522px;top:878px;width:114px;height:40px;background:#FFCC00;"></div>
<div style="position:absolute;left:2636px;top:878px;width:85px;height:40px;background:#FFCC00;"></div>
<div style="position:absolute;left:2721px;top:878px;width:90px;height:40px;background:#FFCC00;"></div>
<div style="position:absolute;left:2811px;top:878px;width:90px;height:40px;background:#FFCC00;"></div>
<div style="position:absolute;left:2901px;top:878px;width:85px;height:40px;background:#FFCC00;"></div>
<div style="position:absolute;left:2986px;top:878px;width:72px;height:40px;background:#FFCC00;"></div>
<div style="position:absolute;left:3058px;top:878px;width:72px;height:40px;background:#FFCC00;"></div>
<div style="position:absolute;left:3130px;top:878px;width:100px;height:40px;background:#FFCC00;"></div>
<div style="position:absolute;left:520px;top:878px;width:99px;height:40px;background:#FFCC99;"></div>
<div style="position:absolute;left:619px;top:878px;width:67px;height:40px;background:#FFCC99;"></div>
<div style="position:absolute;left:686px;top:878px;width:70px;height:40px;background:#FFCC99;"></div>
<div style="position:absolute;left:756px;top:878px;width:104px;height:40px;background:#FFCC99;"></div>
<div style="position:absolute;left:1494px;top:878px;width:66px;height:40px;background:#FFCC99;"></div>
<div style="position:absolute;left:1666px;top:878px;width:83px;height:40px;background:#FFCC99;"></div>
<div style="position:absolute;left:1065px;top:950px;width:85px;height:34px;background:#FFFF00;"></div>
<div style="position:absolute;left:1302px;top:950px;width:96px;height:34px;background:#FFFF00;"></div>
<div style="position:absolute;left:1398px;top:950px;width:96px;height:34px;background:#FFFF00;"></div>
<div style="position:absolute;left:1494px;top:950px;width:66px;height:34px;background:#FFFF00;"></div>
<div style="position:absolute;left:1560px;top:950px;width:106px;height:34px;background:#FFFF00;"></div>
<div style="position:absolute;left:1666px;top:950px;width:83px;height:34px;background:#FFFF00;"></div>
<div style="position:absolute;left:1749px;top:950px;width:91px;height:34px;background:#FFFF00;"></div>
<div style="position:absolute;left:1840px;top:950px;width:74px;height:34px;background:#FFFF00;"></div>
<div style="position:absolute;left:1914px;top:950px;width:126px;height:34px;background:#FFFF00;"></div>
<div style="position:absolute;left:2040px;top:950px;width:88px;height:34px;background:#FFFF00;"></div>
<div style="position:absolute;left:2128px;top:950px;width:83px;height:34px;background:#FFFF00;"></div>
<div style="position:absolute;left:2211px;top:950px;width:154px;height:34px;background:#FFFF00;"></div>
<div style="position:absolute;left:2365px;top:950px;width:157px;height:34px;background:#FFFF00;"></div>
<div style="position:absolute;left:2522px;top:950px;width:114px;height:34px;background:#FFFF00;"></div>
<div style="position:absolute;left:2721px;top:950px;width:90px;height:34px;background:#FFFF00;"></div>
<div style="position:absolute;left:2811px;top:950px;width:90px;height:34px;background:#FFFF00;"></div>
<div style="position:absolute;left:2901px;top:950px;width:85px;height:34px;background:#FFFF00;"></div>
<div style="position:absolute;left:3130px;top:950px;width:100px;height:34px;background:#FFFF00;"></div>
<div style="position:absolute;left:1302px;top:984px;width:1220px;height:128px;background:#C0C0C0;"></div>
<div style="position:absolute;left:2636px;top:984px;width:594px;height:128px;background:#C0C0C0;"></div>
<svg style="position:absolute;left:1150px;top:878px" width="152" height="234"><defs><pattern id="dp1150_878" x="2" y="2" width="8" height="4" patternUnits="userSpaceOnUse"><rect x="0" y="0" width="1" height="1" fill="#000"/><rect x="4" y="2" width="1" height="1" fill="#000"/></pattern></defs><rect width="152" height="234" fill="#fff"/><rect width="152" height="234" fill="url(#dp1150_878)"/></svg>
<svg style="position:absolute;left:2522px;top:984px" width="114" height="128"><defs><pattern id="dp2522_984" x="6" y="0" width="8" height="4" patternUnits="userSpaceOnUse"><rect x="0" y="0" width="1" height="1" fill="#000"/><rect x="4" y="2" width="1" height="1" fill="#000"/></pattern></defs><rect width="114" height="128" fill="#fff"/><rect width="114" height="128" fill="url(#dp2522_984)"/></svg>
<div style="position:absolute;left:191px;top:878px;width:960px;height:1px;background:#000"></div>
<div style="position:absolute;left:191px;top:1112px;width:960px;height:1px;background:#000"></div>
<div style="position:absolute;left:191px;top:878px;width:1px;height:235px;background:#000"></div>
<div style="position:absolute;left:1150px;top:878px;width:1px;height:235px;background:#000"></div>
<div style="position:absolute;left:277px;top:878px;width:1px;height:235px;background:#000"></div>
<div style="position:absolute;left:373px;top:878px;width:1px;height:235px;background:#000"></div>
<div style="position:absolute;left:429px;top:878px;width:1px;height:235px;background:#000"></div>
<div style="position:absolute;left:520px;top:878px;width:1px;height:235px;background:#000"></div>
<div style="position:absolute;left:619px;top:878px;width:1px;height:235px;background:#000"></div>
<div style="position:absolute;left:686px;top:878px;width:1px;height:235px;background:#000"></div>
<div style="position:absolute;left:756px;top:878px;width:1px;height:235px;background:#000"></div>
<div style="position:absolute;left:860px;top:878px;width:1px;height:235px;background:#000"></div>
<div style="position:absolute;left:930px;top:878px;width:1px;height:235px;background:#000"></div>
<div style="position:absolute;left:996px;top:878px;width:1px;height:235px;background:#000"></div>
<div style="position:absolute;left:1065px;top:878px;width:1px;height:235px;background:#000"></div>
<div style="position:absolute;left:191px;top:918px;width:960px;height:1px;background:#000"></div>
<div style="position:absolute;left:191px;top:950px;width:960px;height:1px;background:#000"></div>
<div style="position:absolute;left:191px;top:984px;width:960px;height:1px;background:#000"></div>
<div style="position:absolute;left:191px;top:1016px;width:960px;height:1px;background:#000"></div>
<div style="position:absolute;left:191px;top:1048px;width:960px;height:1px;background:#000"></div>
<div style="position:absolute;left:191px;top:1080px;width:960px;height:1px;background:#000"></div>
<div style="position:absolute;left:43px;top:918px;width:149px;height:1px;background:#000"></div>
<div style="position:absolute;left:43px;top:984px;width:149px;height:1px;background:#000"></div>
<div style="position:absolute;left:43px;top:918px;width:1px;height:67px;background:#000"></div>
<div style="position:absolute;left:191px;top:918px;width:1px;height:67px;background:#000"></div>
<div style="position:absolute;left:43px;top:950px;width:149px;height:1px;background:#000"></div>
<div style="position:absolute;left:1150px;top:878px;width:153px;height:1px;background:#000"></div>
<div style="position:absolute;left:1150px;top:1112px;width:153px;height:1px;background:#000"></div>
<div style="position:absolute;left:1150px;top:878px;width:1px;height:235px;background:#000"></div>
<div style="position:absolute;left:1302px;top:878px;width:1px;height:235px;background:#000"></div>
<div style="position:absolute;left:1302px;top:878px;width:1929px;height:1px;background:#000"></div>
<div style="position:absolute;left:1302px;top:984px;width:1929px;height:1px;background:#000"></div>
<div style="position:absolute;left:1302px;top:878px;width:1px;height:107px;background:#000"></div>
<div style="position:absolute;left:3230px;top:878px;width:1px;height:107px;background:#000"></div>
<div style="position:absolute;left:1398px;top:878px;width:1px;height:107px;background:#000"></div>
<div style="position:absolute;left:1494px;top:878px;width:1px;height:107px;background:#000"></div>
<div style="position:absolute;left:1560px;top:878px;width:1px;height:107px;background:#000"></div>
<div style="position:absolute;left:1666px;top:878px;width:1px;height:107px;background:#000"></div>
<div style="position:absolute;left:1749px;top:878px;width:1px;height:107px;background:#000"></div>
<div style="position:absolute;left:1840px;top:878px;width:1px;height:107px;background:#000"></div>
<div style="position:absolute;left:1914px;top:878px;width:1px;height:107px;background:#000"></div>
<div style="position:absolute;left:2040px;top:878px;width:1px;height:107px;background:#000"></div>
<div style="position:absolute;left:2128px;top:878px;width:1px;height:107px;background:#000"></div>
<div style="position:absolute;left:2211px;top:878px;width:1px;height:107px;background:#000"></div>
<div style="position:absolute;left:2365px;top:878px;width:1px;height:107px;background:#000"></div>
<div style="position:absolute;left:2522px;top:878px;width:1px;height:107px;background:#000"></div>
<div style="position:absolute;left:2636px;top:878px;width:1px;height:107px;background:#000"></div>
<div style="position:absolute;left:2721px;top:878px;width:1px;height:107px;background:#000"></div>
<div style="position:absolute;left:2811px;top:878px;width:1px;height:107px;background:#000"></div>
<div style="position:absolute;left:2901px;top:878px;width:1px;height:107px;background:#000"></div>
<div style="position:absolute;left:2986px;top:878px;width:1px;height:107px;background:#000"></div>
<div style="position:absolute;left:3058px;top:878px;width:1px;height:107px;background:#000"></div>
<div style="position:absolute;left:3130px;top:878px;width:1px;height:107px;background:#000"></div>
<div style="position:absolute;left:1302px;top:918px;width:1929px;height:1px;background:#000"></div>
<div style="position:absolute;left:1302px;top:950px;width:1929px;height:1px;background:#000"></div>
<div style="position:absolute;left:1302px;top:984px;width:1221px;height:1px;background:#000"></div>
<div style="position:absolute;left:1302px;top:1112px;width:1221px;height:1px;background:#000"></div>
<div style="position:absolute;left:1302px;top:984px;width:1px;height:129px;background:#000"></div>
<div style="position:absolute;left:2522px;top:984px;width:1px;height:129px;background:#000"></div>
<div style="position:absolute;left:1398px;top:984px;width:1px;height:129px;background:#000"></div>
<div style="position:absolute;left:1494px;top:984px;width:1px;height:129px;background:#000"></div>
<div style="position:absolute;left:1560px;top:984px;width:1px;height:129px;background:#000"></div>
<div style="position:absolute;left:1666px;top:984px;width:1px;height:129px;background:#000"></div>
<div style="position:absolute;left:1749px;top:984px;width:1px;height:129px;background:#000"></div>
<div style="position:absolute;left:1840px;top:984px;width:1px;height:129px;background:#000"></div>
<div style="position:absolute;left:1914px;top:984px;width:1px;height:129px;background:#000"></div>
<div style="position:absolute;left:2040px;top:984px;width:1px;height:129px;background:#000"></div>
<div style="position:absolute;left:2128px;top:984px;width:1px;height:129px;background:#000"></div>
<div style="position:absolute;left:2211px;top:984px;width:1px;height:129px;background:#000"></div>
<div style="position:absolute;left:2365px;top:984px;width:1px;height:129px;background:#000"></div>
<div style="position:absolute;left:1302px;top:1016px;width:1221px;height:1px;background:#000"></div>
<div style="position:absolute;left:1302px;top:1048px;width:1221px;height:1px;background:#000"></div>
<div style="position:absolute;left:1302px;top:1080px;width:1221px;height:1px;background:#000"></div>
<div style="position:absolute;left:2522px;top:984px;width:115px;height:1px;background:#000"></div>
<div style="position:absolute;left:2522px;top:1112px;width:115px;height:1px;background:#000"></div>
<div style="position:absolute;left:2522px;top:984px;width:1px;height:129px;background:#000"></div>
<div style="position:absolute;left:2636px;top:984px;width:1px;height:129px;background:#000"></div>
<div style="position:absolute;left:2636px;top:984px;width:595px;height:1px;background:#000"></div>
<div style="position:absolute;left:2636px;top:1112px;width:595px;height:1px;background:#000"></div>
<div style="position:absolute;left:2636px;top:984px;width:1px;height:129px;background:#000"></div>
<div style="position:absolute;left:3230px;top:984px;width:1px;height:129px;background:#000"></div>
<div style="position:absolute;left:2721px;top:984px;width:1px;height:129px;background:#000"></div>
<div style="position:absolute;left:2811px;top:984px;width:1px;height:129px;background:#000"></div>
<div style="position:absolute;left:2901px;top:984px;width:1px;height:129px;background:#000"></div>
<div style="position:absolute;left:2986px;top:984px;width:1px;height:129px;background:#000"></div>
<div style="position:absolute;left:3058px;top:984px;width:1px;height:129px;background:#000"></div>
<div style="position:absolute;left:3130px;top:984px;width:1px;height:129px;background:#000"></div>
<div style="position:absolute;left:2636px;top:1016px;width:595px;height:1px;background:#000"></div>
<div style="position:absolute;left:2636px;top:1048px;width:595px;height:1px;background:#000"></div>
<div style="position:absolute;left:2636px;top:1080px;width:595px;height:1px;background:#000"></div>
<div style="position:absolute;left:277px;top:949px;width:874px;height:2px;background:#000"></div>
<div style="position:absolute;left:1302px;top:949px;width:1880px;height:2px;background:#000"></div>
<div style="position:absolute;left:277px;top:983px;width:874px;height:2px;background:#000"></div>
<div style="position:absolute;left:1302px;top:983px;width:1880px;height:2px;background:#000"></div>
<svg style="position:absolute;left:366px;top:879px" width="7" height="7"><path d="M0 0 H7 V7Z" fill="#FF0000"/></svg>
<svg style="position:absolute;left:422px;top:879px" width="7" height="7"><path d="M0 0 H7 V7Z" fill="#FF0000"/></svg>
<svg style="position:absolute;left:923px;top:879px" width="7" height="7"><path d="M0 0 H7 V7Z" fill="#FF0000"/></svg>
<svg style="position:absolute;left:1058px;top:879px" width="7" height="7"><path d="M0 0 H7 V7Z" fill="#FF0000"/></svg>
<svg style="position:absolute;left:1659px;top:879px" width="7" height="7"><path d="M0 0 H7 V7Z" fill="#FF0000"/></svg>
<svg style="position:absolute;left:1833px;top:879px" width="7" height="7"><path d="M0 0 H7 V7Z" fill="#FF0000"/></svg>
<svg style="position:absolute;left:1907px;top:879px" width="7" height="7"><path d="M0 0 H7 V7Z" fill="#FF0000"/></svg>
<svg style="position:absolute;left:2121px;top:879px" width="7" height="7"><path d="M0 0 H7 V7Z" fill="#FF0000"/></svg>
<svg style="position:absolute;left:2204px;top:879px" width="7" height="7"><path d="M0 0 H7 V7Z" fill="#FF0000"/></svg>
<svg style="position:absolute;left:2358px;top:879px" width="7" height="7"><path d="M0 0 H7 V7Z" fill="#FF0000"/></svg>
<svg style="position:absolute;left:2629px;top:879px" width="7" height="7"><path d="M0 0 H7 V7Z" fill="#FF0000"/></svg>
<div style="position:absolute;left:-66.0px;top:890.2px;width:600px;height:24.0px;line-height:20px;font-size:20px;font-family:'Liberation Serif', serif;text-align:center;white-space:nowrap;font-weight:bold;letter-spacing:0px">Κολόνα i</div>
<div style="position:absolute;left:25.0px;top:889.2px;width:600px;height:25.2px;line-height:21px;font-size:21px;font-family:'Liberation Sans', sans-serif;text-align:center;white-space:nowrap;transform:scaleX(0.989);transform-origin:50% 50%;font-weight:bold">b</div>
<div style="position:absolute;left:101.0px;top:889.2px;width:600px;height:25.2px;line-height:21px;font-size:21px;font-family:'Liberation Sans', sans-serif;text-align:center;white-space:nowrap;transform:scaleX(0.989);transform-origin:50% 50%;font-weight:bold">d</div>
<div style="position:absolute;left:174.5px;top:889.2px;width:600px;height:25.2px;line-height:21px;font-size:21px;font-family:'Liberation Sans', sans-serif;text-align:center;white-space:nowrap;transform:scaleX(0.989);transform-origin:50% 50%;font-weight:bold">h</div>
<div style="position:absolute;left:595.0px;top:889.2px;width:600px;height:25.2px;line-height:21px;font-size:21px;font-family:'Liberation Sans', sans-serif;text-align:center;white-space:nowrap;transform:scaleX(0.896);transform-origin:50% 50%;font-weight:bold">X</div>
<div style="position:absolute;left:663.0px;top:889.2px;width:600px;height:25.2px;line-height:21px;font-size:21px;font-family:'Liberation Sans', sans-serif;text-align:center;white-space:nowrap;transform:scaleX(0.840);transform-origin:50% 50%;font-weight:bold">Y</div>
<div style="position:absolute;left:730.5px;top:889.2px;width:600px;height:25.2px;line-height:21px;font-size:21px;font-family:'Liberation Sans', sans-serif;text-align:center;white-space:nowrap;transform:scaleX(1.062);transform-origin:50% 50%;font-weight:bold">φ</div>
<div style="position:absolute;left:269.5px;top:889.2px;width:600px;height:25.2px;line-height:21px;font-size:21px;font-family:'Liberation Sans', sans-serif;text-align:center;white-space:nowrap;font-weight:bold">k<span style="font-size:15px;position:relative;top:5px;">ζ</span></div>
<div style="position:absolute;left:352.5px;top:889.2px;width:600px;height:25.2px;line-height:21px;font-size:21px;font-family:'Liberation Sans', sans-serif;text-align:center;white-space:nowrap;font-weight:bold">k<span style="font-size:15px;position:relative;top:5px;">η</span></div>
<div style="position:absolute;left:421.0px;top:889.2px;width:600px;height:25.2px;line-height:21px;font-size:21px;font-family:'Liberation Sans', sans-serif;text-align:center;white-space:nowrap;font-weight:bold">a<span style="font-size:15px;position:relative;top:5px;">ζ</span></div>
<div style="position:absolute;left:508.0px;top:889.2px;width:600px;height:25.2px;line-height:21px;font-size:21px;font-family:'Liberation Sans', sans-serif;text-align:center;white-space:nowrap;font-weight:bold">a<span style="font-size:15px;position:relative;top:5px;">η</span></div>
<div style="position:absolute;left:807.5px;top:888.6px;width:600px;height:26.4px;line-height:22px;font-size:22px;font-family:'Liberation Serif', serif;text-align:center;white-space:nowrap;font-weight:bold;color:#FF0000">P</div>
<div style="position:absolute;left:1050.0px;top:889.2px;width:600px;height:25.2px;line-height:21px;font-size:21px;font-family:'Liberation Sans', sans-serif;text-align:center;white-space:nowrap;transform:scaleX(0.889);transform-origin:50% 50%;font-weight:bold;color:#FF0000">P·X</div>
<div style="position:absolute;left:1146.0px;top:889.2px;width:600px;height:25.2px;line-height:21px;font-size:21px;font-family:'Liberation Sans', sans-serif;text-align:center;white-space:nowrap;transform:scaleX(0.867);transform-origin:50% 50%;font-weight:bold;color:#FF0000">P·Y</div>
<div style="position:absolute;left:1227.0px;top:889.2px;width:600px;height:25.2px;line-height:21px;font-size:21px;font-family:'Liberation Sans', sans-serif;text-align:center;white-space:nowrap;font-weight:bold;color:#969696">k<span style="font-size:15px;position:relative;top:5px;">va,ζ</span></div>
<div style="position:absolute;left:1407.5px;top:889.2px;width:600px;height:25.2px;line-height:21px;font-size:21px;font-family:'Liberation Sans', sans-serif;text-align:center;white-space:nowrap;font-weight:bold;color:#969696">k<span style="font-size:15px;position:relative;top:5px;">va,η</span></div>
<div style="position:absolute;left:1313.0px;top:889.2px;width:600px;height:25.2px;line-height:21px;font-size:21px;font-family:'Liberation Sans', sans-serif;text-align:center;white-space:nowrap;font-weight:bold">K<span style="font-size:14px;position:relative;top:5px;">ζ</span></div>
<div style="position:absolute;left:1494.5px;top:889.2px;width:600px;height:25.2px;line-height:21px;font-size:21px;font-family:'Liberation Sans', sans-serif;text-align:center;white-space:nowrap;font-weight:bold">K<span style="font-size:14px;position:relative;top:5px;">η</span></div>
<div style="position:absolute;left:1577.0px;top:889.2px;width:600px;height:25.2px;line-height:21px;font-size:21px;font-family:'Liberation Sans', sans-serif;text-align:center;white-space:nowrap;font-weight:bold">K<span style="font-size:14px;position:relative;top:5px;">z</span></div>
<div style="position:absolute;left:1677.0px;top:889.2px;width:600px;height:25.2px;line-height:21px;font-size:21px;font-family:'Liberation Sans', sans-serif;text-align:center;white-space:nowrap;font-weight:bold">K<span style="font-size:14px;position:relative;top:5px;">X</span></div>
<div style="position:absolute;left:1784.0px;top:889.2px;width:600px;height:25.2px;line-height:21px;font-size:21px;font-family:'Liberation Sans', sans-serif;text-align:center;white-space:nowrap;font-weight:bold">K<span style="font-size:14px;position:relative;top:5px;">Y</span></div>
<div style="position:absolute;left:1869.5px;top:889.2px;width:600px;height:25.2px;line-height:21px;font-size:21px;font-family:'Liberation Sans', sans-serif;text-align:center;white-space:nowrap;font-weight:bold">K<span style="font-size:14px;position:relative;top:5px;">XY</span></div>
<div style="position:absolute;left:1988.0px;top:889.2px;width:600px;height:25.2px;line-height:21px;font-size:21px;font-family:'Liberation Sans', sans-serif;text-align:center;white-space:nowrap;font-weight:bold">(K<span style="font-size:14px;position:relative;top:5px;">ζ</span>-K<span style="font-size:14px;position:relative;top:5px;">η</span>)·sin(2ϕ)</div>
<div style="position:absolute;left:2143.5px;top:889.2px;width:600px;height:25.2px;line-height:21px;font-size:21px;font-family:'Liberation Sans', sans-serif;text-align:center;white-space:nowrap;font-weight:bold">(K<span style="font-size:14px;position:relative;top:5px;">ζ</span>-K<span style="font-size:14px;position:relative;top:5px;">η</span>)·cos(2ϕ)</div>
<div style="position:absolute;left:2279.0px;top:889.2px;width:600px;height:25.2px;line-height:21px;font-size:21px;font-family:'Liberation Sans', sans-serif;text-align:center;white-space:nowrap;transform:scaleX(0.991);transform-origin:50% 50%;font-weight:bold">a</div>
<div style="position:absolute;left:2378.5px;top:889.2px;width:600px;height:25.2px;line-height:21px;font-size:21px;font-family:'Liberation Sans', sans-serif;text-align:center;white-space:nowrap;transform:scaleX(1.064);transform-origin:50% 50%;font-weight:bold">φ&#x27;</div>
<div style="position:absolute;left:2466.0px;top:889.2px;width:600px;height:25.2px;line-height:21px;font-size:21px;font-family:'Liberation Sans', sans-serif;text-align:center;white-space:nowrap;font-weight:bold">K<span style="font-size:14px;position:relative;top:5px;">xx</span></div>
<div style="position:absolute;left:2556.0px;top:889.2px;width:600px;height:25.2px;line-height:21px;font-size:21px;font-family:'Liberation Sans', sans-serif;text-align:center;white-space:nowrap;font-weight:bold">K<span style="font-size:14px;position:relative;top:5px;">yy</span></div>
<div style="position:absolute;left:2643.5px;top:889.2px;width:600px;height:25.2px;line-height:21px;font-size:21px;font-family:'Liberation Sans', sans-serif;text-align:center;white-space:nowrap;font-weight:bold">K<span style="font-size:14px;position:relative;top:5px;">xy</span></div>
<div style="position:absolute;left:2722.0px;top:889.2px;width:600px;height:25.2px;line-height:21px;font-size:21px;font-family:'Liberation Sans', sans-serif;text-align:center;white-space:nowrap;transform:scaleX(0.948);transform-origin:50% 50%;font-weight:bold">x&#x27;</div>
<div style="position:absolute;left:2794.0px;top:889.2px;width:600px;height:25.2px;line-height:21px;font-size:21px;font-family:'Liberation Sans', sans-serif;text-align:center;white-space:nowrap;transform:scaleX(0.977);transform-origin:50% 50%;font-weight:bold">y&#x27;</div>
<div style="position:absolute;left:3077.0px;top:889.2px;width:200px;height:25.2px;line-height:21px;font-size:21px;font-family:'Liberation Sans', sans-serif;text-align:center;white-space:nowrap;font-weight:bold">x'·K<span style="font-size:14px;position:relative;top:5px;">yy</span></div>
<div style="position:absolute;left:-183.0px;top:924.2px;width:600px;height:25.2px;line-height:21px;font-size:21px;font-family:'Liberation Sans', sans-serif;text-align:center;white-space:nowrap;transform:scaleX(0.970);transform-origin:50% 50%;">ΜΟΝΑΔΕΣ</div>
<div style="position:absolute;left:-183.0px;top:957.2px;width:600px;height:25.2px;line-height:21px;font-size:21px;font-family:'Liberation Sans', sans-serif;text-align:center;white-space:nowrap;transform:scaleX(0.990);transform-origin:50% 50%;">ΑΘΡΟΙΣΜΑΤΑ</div>
<div style="position:absolute;left:25.0px;top:924.2px;width:600px;height:25.2px;line-height:21px;font-size:21px;font-family:'Liberation Sans', sans-serif;text-align:center;white-space:nowrap;transform:scaleX(1.072);transform-origin:50% 50%;font-style:italic">mm</div>
<div style="position:absolute;left:101.0px;top:924.2px;width:600px;height:25.2px;line-height:21px;font-size:21px;font-family:'Liberation Sans', sans-serif;text-align:center;white-space:nowrap;transform:scaleX(1.072);transform-origin:50% 50%;font-style:italic">mm</div>
<div style="position:absolute;left:174.5px;top:924.2px;width:600px;height:25.2px;line-height:21px;font-size:21px;font-family:'Liberation Sans', sans-serif;text-align:center;white-space:nowrap;transform:scaleX(1.072);transform-origin:50% 50%;font-style:italic">m</div>
<div style="position:absolute;left:595.0px;top:924.2px;width:600px;height:25.2px;line-height:21px;font-size:21px;font-family:'Liberation Sans', sans-serif;text-align:center;white-space:nowrap;transform:scaleX(1.072);transform-origin:50% 50%;font-style:italic">m</div>
<div style="position:absolute;left:663.0px;top:924.2px;width:600px;height:25.2px;line-height:21px;font-size:21px;font-family:'Liberation Sans', sans-serif;text-align:center;white-space:nowrap;transform:scaleX(1.072);transform-origin:50% 50%;font-style:italic">m</div>
<div style="position:absolute;left:730.5px;top:924.2px;width:600px;height:25.2px;line-height:21px;font-size:21px;font-family:'Liberation Sans', sans-serif;text-align:center;white-space:nowrap;font-style:italic">deg</div>
<div style="position:absolute;left:807.5px;top:924.2px;width:600px;height:25.2px;line-height:21px;font-size:21px;font-family:'Liberation Sans', sans-serif;text-align:center;white-space:nowrap;transform:scaleX(1.007);transform-origin:50% 50%;font-style:italic">kN</div>
<div style="position:absolute;left:1050.0px;top:924.2px;width:600px;height:25.2px;line-height:21px;font-size:21px;font-family:'Liberation Sans', sans-serif;text-align:center;white-space:nowrap;transform:scaleX(1.033);transform-origin:50% 50%;font-style:italic">kNm</div>
<div style="position:absolute;left:1146.0px;top:924.2px;width:600px;height:25.2px;line-height:21px;font-size:21px;font-family:'Liberation Sans', sans-serif;text-align:center;white-space:nowrap;transform:scaleX(1.033);transform-origin:50% 50%;font-style:italic">kNm</div>
<div style="position:absolute;left:1313.0px;top:924.2px;width:600px;height:25.2px;line-height:21px;font-size:21px;font-family:'Liberation Sans', sans-serif;text-align:center;white-space:nowrap;transform:scaleX(1.126);transform-origin:50% 50%;font-style:italic">MN/m</div>
<div style="position:absolute;left:1494.5px;top:924.2px;width:600px;height:25.2px;line-height:21px;font-size:21px;font-family:'Liberation Sans', sans-serif;text-align:center;white-space:nowrap;transform:scaleX(1.126);transform-origin:50% 50%;font-style:italic">MN/m</div>
<div style="position:absolute;left:1577.0px;top:924.2px;width:600px;height:25.2px;line-height:21px;font-size:21px;font-family:'Liberation Sans', sans-serif;text-align:center;white-space:nowrap;transform:scaleX(1.076);transform-origin:50% 50%;font-style:italic">MNm</div>
<div style="position:absolute;left:1677.0px;top:924.2px;width:600px;height:25.2px;line-height:21px;font-size:21px;font-family:'Liberation Sans', sans-serif;text-align:center;white-space:nowrap;transform:scaleX(1.126);transform-origin:50% 50%;font-style:italic">MN/m</div>
<div style="position:absolute;left:1784.0px;top:924.2px;width:600px;height:25.2px;line-height:21px;font-size:21px;font-family:'Liberation Sans', sans-serif;text-align:center;white-space:nowrap;transform:scaleX(1.126);transform-origin:50% 50%;font-style:italic">MN/m</div>
<div style="position:absolute;left:1869.5px;top:924.2px;width:600px;height:25.2px;line-height:21px;font-size:21px;font-family:'Liberation Sans', sans-serif;text-align:center;white-space:nowrap;transform:scaleX(1.126);transform-origin:50% 50%;font-style:italic">MN/m</div>
<div style="position:absolute;left:1988.0px;top:924.2px;width:600px;height:25.2px;line-height:21px;font-size:21px;font-family:'Liberation Sans', sans-serif;text-align:center;white-space:nowrap;transform:scaleX(1.126);transform-origin:50% 50%;font-style:italic">MN/m</div>
<div style="position:absolute;left:2143.5px;top:924.2px;width:600px;height:25.2px;line-height:21px;font-size:21px;font-family:'Liberation Sans', sans-serif;text-align:center;white-space:nowrap;transform:scaleX(1.126);transform-origin:50% 50%;font-style:italic">MN/m</div>
<div style="position:absolute;left:2279.0px;top:924.2px;width:600px;height:25.2px;line-height:21px;font-size:21px;font-family:'Liberation Sans', sans-serif;text-align:center;white-space:nowrap;font-style:italic">deg</div>
<div style="position:absolute;left:2378.5px;top:924.2px;width:600px;height:25.2px;line-height:21px;font-size:21px;font-family:'Liberation Sans', sans-serif;text-align:center;white-space:nowrap;font-style:italic">deg</div>
<div style="position:absolute;left:2466.0px;top:924.2px;width:600px;height:25.2px;line-height:21px;font-size:21px;font-family:'Liberation Sans', sans-serif;text-align:center;white-space:nowrap;transform:scaleX(1.126);transform-origin:50% 50%;font-style:italic">MN/m</div>
<div style="position:absolute;left:2556.0px;top:924.2px;width:600px;height:25.2px;line-height:21px;font-size:21px;font-family:'Liberation Sans', sans-serif;text-align:center;white-space:nowrap;transform:scaleX(1.126);transform-origin:50% 50%;font-style:italic">MN/m</div>
<div style="position:absolute;left:2643.5px;top:924.2px;width:600px;height:25.2px;line-height:21px;font-size:21px;font-family:'Liberation Sans', sans-serif;text-align:center;white-space:nowrap;transform:scaleX(1.126);transform-origin:50% 50%;font-style:italic">MN/m</div>
<div style="position:absolute;left:2722.0px;top:924.2px;width:600px;height:25.2px;line-height:21px;font-size:21px;font-family:'Liberation Sans', sans-serif;text-align:center;white-space:nowrap;transform:scaleX(1.072);transform-origin:50% 50%;font-style:italic">m</div>
<div style="position:absolute;left:2794.0px;top:924.2px;width:600px;height:25.2px;line-height:21px;font-size:21px;font-family:'Liberation Sans', sans-serif;text-align:center;white-space:nowrap;transform:scaleX(1.072);transform-origin:50% 50%;font-style:italic">m</div>
<div style="position:absolute;left:3080.0px;top:924.2px;width:200px;height:25.2px;line-height:21px;font-size:21px;font-family:'Liberation Sans', sans-serif;text-align:center;white-space:nowrap;transform:scaleX(1.126);transform-origin:50% 50%;font-style:italic">MN/m</div>
<div style="position:absolute;left:807.5px;top:957.2px;width:600px;height:25.2px;line-height:21px;font-size:21px;font-family:'Liberation Sans', sans-serif;text-align:center;white-space:nowrap;transform:scaleX(1.017);transform-origin:50% 50%;">0,000</div>
<div style="position:absolute;left:1050.0px;top:957.2px;width:600px;height:25.2px;line-height:21px;font-size:21px;font-family:'Liberation Sans', sans-serif;text-align:center;white-space:nowrap;transform:scaleX(1.017);transform-origin:50% 50%;">0,000</div>
<div style="position:absolute;left:1146.0px;top:957.2px;width:600px;height:25.2px;line-height:21px;font-size:21px;font-family:'Liberation Sans', sans-serif;text-align:center;white-space:nowrap;transform:scaleX(1.017);transform-origin:50% 50%;">0,000</div>
<div style="position:absolute;left:1313.0px;top:957.2px;width:600px;height:25.2px;line-height:21px;font-size:21px;font-family:'Liberation Sans', sans-serif;text-align:center;white-space:nowrap;transform:scaleX(1.018);transform-origin:50% 50%;">268,474</div>
<div style="position:absolute;left:1494.5px;top:957.2px;width:600px;height:25.2px;line-height:21px;font-size:21px;font-family:'Liberation Sans', sans-serif;text-align:center;white-space:nowrap;transform:scaleX(1.018);transform-origin:50% 50%;">167,159</div>
<div style="position:absolute;left:1577.0px;top:957.2px;width:600px;height:25.2px;line-height:21px;font-size:21px;font-family:'Liberation Sans', sans-serif;text-align:center;white-space:nowrap;transform:scaleX(1.017);transform-origin:50% 50%;">0,000</div>
<div style="position:absolute;left:1677.0px;top:957.2px;width:600px;height:25.2px;line-height:21px;font-size:21px;font-family:'Liberation Sans', sans-serif;text-align:center;white-space:nowrap;transform:scaleX(1.018);transform-origin:50% 50%;">257,905</div>
<div style="position:absolute;left:1784.0px;top:957.2px;width:600px;height:25.2px;line-height:21px;font-size:21px;font-family:'Liberation Sans', sans-serif;text-align:center;white-space:nowrap;transform:scaleX(1.018);transform-origin:50% 50%;">177,727</div>
<div style="position:absolute;left:1869.5px;top:957.2px;width:600px;height:25.2px;line-height:21px;font-size:21px;font-family:'Liberation Sans', sans-serif;text-align:center;white-space:nowrap;transform:scaleX(1.018);transform-origin:50% 50%;">39,916</div>
<div style="position:absolute;left:1988.0px;top:957.2px;width:600px;height:25.2px;line-height:21px;font-size:21px;font-family:'Liberation Sans', sans-serif;text-align:center;white-space:nowrap;transform:scaleX(1.018);transform-origin:50% 50%;">79,832</div>
<div style="position:absolute;left:2143.5px;top:957.2px;width:600px;height:25.2px;line-height:21px;font-size:21px;font-family:'Liberation Sans', sans-serif;text-align:center;white-space:nowrap;transform:scaleX(1.018);transform-origin:50% 50%;">80,178</div>
<div style="position:absolute;left:2279.0px;top:957.2px;width:600px;height:25.2px;line-height:21px;font-size:21px;font-family:'Liberation Sans', sans-serif;text-align:center;white-space:nowrap;transform:scaleX(1.018);transform-origin:50% 50%;">22,438</div>
<div style="position:absolute;left:2466.0px;top:957.2px;width:600px;height:25.2px;line-height:21px;font-size:21px;font-family:'Liberation Sans', sans-serif;text-align:center;white-space:nowrap;transform:scaleX(1.018);transform-origin:50% 50%;">274,388</div>
<div style="position:absolute;left:2556.0px;top:957.2px;width:600px;height:25.2px;line-height:21px;font-size:21px;font-family:'Liberation Sans', sans-serif;text-align:center;white-space:nowrap;transform:scaleX(1.018);transform-origin:50% 50%;">161,244</div>
<div style="position:absolute;left:2643.5px;top:957.2px;width:600px;height:25.2px;line-height:21px;font-size:21px;font-family:'Liberation Sans', sans-serif;text-align:center;white-space:nowrap;transform:scaleX(1.017);transform-origin:50% 50%;">0,000</div>
<div style="position:absolute;left:3077.0px;top:957.2px;width:200px;height:25.2px;line-height:21px;font-size:21px;font-family:'Liberation Sans', sans-serif;text-align:center;white-space:nowrap;transform:scaleX(1.018);transform-origin:50% 50%;">749,000</div>
<div style="position:absolute;left:-66.0px;top:990.7px;width:600px;height:25.2px;line-height:21px;font-size:21px;font-family:'Liberation Sans', sans-serif;text-align:center;white-space:nowrap;transform:scaleX(1.019);transform-origin:50% 50%;color:#8B1A1A">1</div>
<div style="position:absolute;left:-66.0px;top:1022.7px;width:600px;height:25.2px;line-height:21px;font-size:21px;font-family:'Liberation Sans', sans-serif;text-align:center;white-space:nowrap;transform:scaleX(1.019);transform-origin:50% 50%;color:#8B1A1A">2</div>
<div style="position:absolute;left:-66.0px;top:1054.7px;width:600px;height:25.2px;line-height:21px;font-size:21px;font-family:'Liberation Sans', sans-serif;text-align:center;white-space:nowrap;transform:scaleX(1.019);transform-origin:50% 50%;color:#8B1A1A">3</div>
<div style="position:absolute;left:-66.0px;top:1086.7px;width:600px;height:25.2px;line-height:21px;font-size:21px;font-family:'Liberation Sans', sans-serif;text-align:center;white-space:nowrap;transform:scaleX(1.019);transform-origin:50% 50%;color:#8B1A1A">4</div>
<div style="position:absolute;left:-231.0px;top:990.7px;width:600px;height:25.2px;line-height:21px;font-size:21px;font-family:'Liberation Sans', sans-serif;text-align:right;white-space:nowrap;transform:scaleX(1.019);transform-origin:100% 50%;">400</div>
<div style="position:absolute;left:-231.0px;top:1022.7px;width:600px;height:25.2px;line-height:21px;font-size:21px;font-family:'Liberation Sans', sans-serif;text-align:right;white-space:nowrap;transform:scaleX(1.019);transform-origin:100% 50%;">400</div>
<div style="position:absolute;left:-231.0px;top:1054.7px;width:600px;height:25.2px;line-height:21px;font-size:21px;font-family:'Liberation Sans', sans-serif;text-align:right;white-space:nowrap;transform:scaleX(1.019);transform-origin:100% 50%;">800</div>
<div style="position:absolute;left:-231.0px;top:1086.7px;width:600px;height:25.2px;line-height:21px;font-size:21px;font-family:'Liberation Sans', sans-serif;text-align:right;white-space:nowrap;transform:scaleX(1.019);transform-origin:100% 50%;">300</div>
<div style="position:absolute;left:-175.0px;top:990.7px;width:600px;height:25.2px;line-height:21px;font-size:21px;font-family:'Liberation Sans', sans-serif;text-align:right;white-space:nowrap;transform:scaleX(1.019);transform-origin:100% 50%;">400</div>
<div style="position:absolute;left:-175.0px;top:1022.7px;width:600px;height:25.2px;line-height:21px;font-size:21px;font-family:'Liberation Sans', sans-serif;text-align:right;white-space:nowrap;transform:scaleX(1.019);transform-origin:100% 50%;">400</div>
<div style="position:absolute;left:-175.0px;top:1054.7px;width:600px;height:25.2px;line-height:21px;font-size:21px;font-family:'Liberation Sans', sans-serif;text-align:right;white-space:nowrap;transform:scaleX(1.019);transform-origin:100% 50%;">300</div>
<div style="position:absolute;left:-175.0px;top:1086.7px;width:600px;height:25.2px;line-height:21px;font-size:21px;font-family:'Liberation Sans', sans-serif;text-align:right;white-space:nowrap;transform:scaleX(1.019);transform-origin:100% 50%;">600</div>
<div style="position:absolute;left:-84.0px;top:990.7px;width:600px;height:25.2px;line-height:21px;font-size:21px;font-family:'Liberation Sans', sans-serif;text-align:right;white-space:nowrap;transform:scaleX(1.017);transform-origin:100% 50%;">3,00</div>
<div style="position:absolute;left:-84.0px;top:1022.7px;width:600px;height:25.2px;line-height:21px;font-size:21px;font-family:'Liberation Sans', sans-serif;text-align:right;white-space:nowrap;transform:scaleX(1.017);transform-origin:100% 50%;">3,00</div>
<div style="position:absolute;left:-84.0px;top:1054.7px;width:600px;height:25.2px;line-height:21px;font-size:21px;font-family:'Liberation Sans', sans-serif;text-align:right;white-space:nowrap;transform:scaleX(1.017);transform-origin:100% 50%;">3,00</div>
<div style="position:absolute;left:-84.0px;top:1086.7px;width:600px;height:25.2px;line-height:21px;font-size:21px;font-family:'Liberation Sans', sans-serif;text-align:right;white-space:nowrap;transform:scaleX(1.017);transform-origin:100% 50%;">3,00</div>
<div style="position:absolute;left:15.0px;top:990.7px;width:600px;height:25.2px;line-height:21px;font-size:21px;font-family:'Liberation Sans', sans-serif;text-align:right;white-space:nowrap;transform:scaleX(1.017);transform-origin:100% 50%;">12,00</div>
<div style="position:absolute;left:15.0px;top:1022.7px;width:600px;height:25.2px;line-height:21px;font-size:21px;font-family:'Liberation Sans', sans-serif;text-align:right;white-space:nowrap;transform:scaleX(1.017);transform-origin:100% 50%;">12,00</div>
<div style="position:absolute;left:15.0px;top:1054.7px;width:600px;height:25.2px;line-height:21px;font-size:21px;font-family:'Liberation Sans', sans-serif;text-align:right;white-space:nowrap;transform:scaleX(1.017);transform-origin:100% 50%;">12,00</div>
<div style="position:absolute;left:15.0px;top:1086.7px;width:600px;height:25.2px;line-height:21px;font-size:21px;font-family:'Liberation Sans', sans-serif;text-align:right;white-space:nowrap;transform:scaleX(1.017);transform-origin:100% 50%;">12,00</div>
<div style="position:absolute;left:82.0px;top:990.7px;width:600px;height:25.2px;line-height:21px;font-size:21px;font-family:'Liberation Sans', sans-serif;text-align:right;white-space:nowrap;transform:scaleX(1.017);transform-origin:100% 50%;">12,00</div>
<div style="position:absolute;left:82.0px;top:1022.7px;width:600px;height:25.2px;line-height:21px;font-size:21px;font-family:'Liberation Sans', sans-serif;text-align:right;white-space:nowrap;transform:scaleX(1.017);transform-origin:100% 50%;">12,00</div>
<div style="position:absolute;left:82.0px;top:1054.7px;width:600px;height:25.2px;line-height:21px;font-size:21px;font-family:'Liberation Sans', sans-serif;text-align:right;white-space:nowrap;transform:scaleX(1.017);transform-origin:100% 50%;">12,00</div>
<div style="position:absolute;left:82.0px;top:1086.7px;width:600px;height:25.2px;line-height:21px;font-size:21px;font-family:'Liberation Sans', sans-serif;text-align:right;white-space:nowrap;transform:scaleX(1.017);transform-origin:100% 50%;">12,00</div>
<div style="position:absolute;left:152.0px;top:990.7px;width:600px;height:25.2px;line-height:21px;font-size:21px;font-family:'Liberation Sans', sans-serif;text-align:right;white-space:nowrap;transform:scaleX(1.017);transform-origin:100% 50%;">0,50</div>
<div style="position:absolute;left:152.0px;top:1022.7px;width:600px;height:25.2px;line-height:21px;font-size:21px;font-family:'Liberation Sans', sans-serif;text-align:right;white-space:nowrap;transform:scaleX(1.017);transform-origin:100% 50%;">0,50</div>
<div style="position:absolute;left:152.0px;top:1054.7px;width:600px;height:25.2px;line-height:21px;font-size:21px;font-family:'Liberation Sans', sans-serif;text-align:right;white-space:nowrap;transform:scaleX(1.017);transform-origin:100% 50%;">0,50</div>
<div style="position:absolute;left:152.0px;top:1086.7px;width:600px;height:25.2px;line-height:21px;font-size:21px;font-family:'Liberation Sans', sans-serif;text-align:right;white-space:nowrap;transform:scaleX(1.017);transform-origin:100% 50%;">0,50</div>
<div style="position:absolute;left:256.0px;top:990.7px;width:600px;height:25.2px;line-height:21px;font-size:21px;font-family:'Liberation Sans', sans-serif;text-align:right;white-space:nowrap;transform:scaleX(1.017);transform-origin:100% 50%;">0,50</div>
<div style="position:absolute;left:256.0px;top:1022.7px;width:600px;height:25.2px;line-height:21px;font-size:21px;font-family:'Liberation Sans', sans-serif;text-align:right;white-space:nowrap;transform:scaleX(1.017);transform-origin:100% 50%;">0,50</div>
<div style="position:absolute;left:256.0px;top:1054.7px;width:600px;height:25.2px;line-height:21px;font-size:21px;font-family:'Liberation Sans', sans-serif;text-align:right;white-space:nowrap;transform:scaleX(1.017);transform-origin:100% 50%;">0,50</div>
<div style="position:absolute;left:256.0px;top:1086.7px;width:600px;height:25.2px;line-height:21px;font-size:21px;font-family:'Liberation Sans', sans-serif;text-align:right;white-space:nowrap;transform:scaleX(1.017);transform-origin:100% 50%;">0,50</div>
<div style="position:absolute;left:327.0px;top:990.7px;width:600px;height:25.2px;line-height:21px;font-size:21px;font-family:'Liberation Sans', sans-serif;text-align:right;white-space:nowrap;transform:scaleX(1.017);transform-origin:100% 50%;">0,000</div>
<div style="position:absolute;left:327.0px;top:1022.7px;width:600px;height:25.2px;line-height:21px;font-size:21px;font-family:'Liberation Sans', sans-serif;text-align:right;white-space:nowrap;transform:scaleX(1.017);transform-origin:100% 50%;">6,000</div>
<div style="position:absolute;left:327.0px;top:1054.7px;width:600px;height:25.2px;line-height:21px;font-size:21px;font-family:'Liberation Sans', sans-serif;text-align:right;white-space:nowrap;transform:scaleX(1.017);transform-origin:100% 50%;">0,000</div>
<div style="position:absolute;left:327.0px;top:1086.7px;width:600px;height:25.2px;line-height:21px;font-size:21px;font-family:'Liberation Sans', sans-serif;text-align:right;white-space:nowrap;transform:scaleX(1.017);transform-origin:100% 50%;">6,000</div>
<div style="position:absolute;left:393.0px;top:990.7px;width:600px;height:25.2px;line-height:21px;font-size:21px;font-family:'Liberation Sans', sans-serif;text-align:right;white-space:nowrap;transform:scaleX(1.017);transform-origin:100% 50%;">0,000</div>
<div style="position:absolute;left:393.0px;top:1022.7px;width:600px;height:25.2px;line-height:21px;font-size:21px;font-family:'Liberation Sans', sans-serif;text-align:right;white-space:nowrap;transform:scaleX(1.017);transform-origin:100% 50%;">0,000</div>
<div style="position:absolute;left:393.0px;top:1054.7px;width:600px;height:25.2px;line-height:21px;font-size:21px;font-family:'Liberation Sans', sans-serif;text-align:right;white-space:nowrap;transform:scaleX(1.017);transform-origin:100% 50%;">5,000</div>
<div style="position:absolute;left:393.0px;top:1086.7px;width:600px;height:25.2px;line-height:21px;font-size:21px;font-family:'Liberation Sans', sans-serif;text-align:right;white-space:nowrap;transform:scaleX(1.017);transform-origin:100% 50%;">5,000</div>
<div style="position:absolute;left:730.5px;top:990.7px;width:600px;height:25.2px;line-height:21px;font-size:21px;font-family:'Liberation Sans', sans-serif;text-align:center;white-space:nowrap;transform:scaleX(1.017);transform-origin:50% 50%;">0,00</div>
<div style="position:absolute;left:730.5px;top:1022.7px;width:600px;height:25.2px;line-height:21px;font-size:21px;font-family:'Liberation Sans', sans-serif;text-align:center;white-space:nowrap;transform:scaleX(1.017);transform-origin:50% 50%;">0,00</div>
<div style="position:absolute;left:730.5px;top:1054.7px;width:600px;height:25.2px;line-height:21px;font-size:21px;font-family:'Liberation Sans', sans-serif;text-align:center;white-space:nowrap;transform:scaleX(1.017);transform-origin:50% 50%;">30,00</div>
<div style="position:absolute;left:730.5px;top:1086.7px;width:600px;height:25.2px;line-height:21px;font-size:21px;font-family:'Liberation Sans', sans-serif;text-align:center;white-space:nowrap;transform:scaleX(1.017);transform-origin:50% 50%;">45,00</div>
<div style="position:absolute;left:1227.0px;top:990.7px;width:600px;height:25.2px;line-height:21px;font-size:21px;font-family:'Liberation Sans', sans-serif;text-align:center;white-space:nowrap;transform:scaleX(1.017);transform-origin:50% 50%;color:#969696">1,000</div>
<div style="position:absolute;left:1227.0px;top:1022.7px;width:600px;height:25.2px;line-height:21px;font-size:21px;font-family:'Liberation Sans', sans-serif;text-align:center;white-space:nowrap;transform:scaleX(1.017);transform-origin:50% 50%;color:#969696">1,000</div>
<div style="position:absolute;left:1227.0px;top:1054.7px;width:600px;height:25.2px;line-height:21px;font-size:21px;font-family:'Liberation Sans', sans-serif;text-align:center;white-space:nowrap;transform:scaleX(1.017);transform-origin:50% 50%;color:#969696">1,000</div>
<div style="position:absolute;left:1227.0px;top:1086.7px;width:600px;height:25.2px;line-height:21px;font-size:21px;font-family:'Liberation Sans', sans-serif;text-align:center;white-space:nowrap;transform:scaleX(1.017);transform-origin:50% 50%;color:#969696">1,000</div>
<div style="position:absolute;left:1313.0px;top:990.7px;width:600px;height:25.2px;line-height:21px;font-size:21px;font-family:'Liberation Sans', sans-serif;text-align:center;white-space:nowrap;transform:scaleX(1.018);transform-origin:50% 50%;">31,099</div>
<div style="position:absolute;left:1313.0px;top:1022.7px;width:600px;height:25.2px;line-height:21px;font-size:21px;font-family:'Liberation Sans', sans-serif;text-align:center;white-space:nowrap;transform:scaleX(1.018);transform-origin:50% 50%;">31,099</div>
<div style="position:absolute;left:1313.0px;top:1054.7px;width:600px;height:25.2px;line-height:21px;font-size:21px;font-family:'Liberation Sans', sans-serif;text-align:center;white-space:nowrap;transform:scaleX(1.018);transform-origin:50% 50%;">186,596</div>
<div style="position:absolute;left:1313.0px;top:1086.7px;width:600px;height:25.2px;line-height:21px;font-size:21px;font-family:'Liberation Sans', sans-serif;text-align:center;white-space:nowrap;transform:scaleX(1.018);transform-origin:50% 50%;">19,680</div>
<div style="position:absolute;left:1407.5px;top:990.7px;width:600px;height:25.2px;line-height:21px;font-size:21px;font-family:'Liberation Sans', sans-serif;text-align:center;white-space:nowrap;transform:scaleX(1.017);transform-origin:50% 50%;color:#969696">1,000</div>
<div style="position:absolute;left:1407.5px;top:1022.7px;width:600px;height:25.2px;line-height:21px;font-size:21px;font-family:'Liberation Sans', sans-serif;text-align:center;white-space:nowrap;transform:scaleX(1.017);transform-origin:50% 50%;color:#969696">1,000</div>
<div style="position:absolute;left:1407.5px;top:1054.7px;width:600px;height:25.2px;line-height:21px;font-size:21px;font-family:'Liberation Sans', sans-serif;text-align:center;white-space:nowrap;transform:scaleX(1.017);transform-origin:50% 50%;color:#969696">1,000</div>
<div style="position:absolute;left:1407.5px;top:1086.7px;width:600px;height:25.2px;line-height:21px;font-size:21px;font-family:'Liberation Sans', sans-serif;text-align:center;white-space:nowrap;transform:scaleX(1.017);transform-origin:50% 50%;color:#969696">1,000</div>
<div style="position:absolute;left:1494.5px;top:990.7px;width:600px;height:25.2px;line-height:21px;font-size:21px;font-family:'Liberation Sans', sans-serif;text-align:center;white-space:nowrap;transform:scaleX(1.018);transform-origin:50% 50%;">31,099</div>
<div style="position:absolute;left:1494.5px;top:1022.7px;width:600px;height:25.2px;line-height:21px;font-size:21px;font-family:'Liberation Sans', sans-serif;text-align:center;white-space:nowrap;transform:scaleX(1.018);transform-origin:50% 50%;">31,099</div>
<div style="position:absolute;left:1494.5px;top:1054.7px;width:600px;height:25.2px;line-height:21px;font-size:21px;font-family:'Liberation Sans', sans-serif;text-align:center;white-space:nowrap;transform:scaleX(1.018);transform-origin:50% 50%;">26,240</div>
<div style="position:absolute;left:1494.5px;top:1086.7px;width:600px;height:25.2px;line-height:21px;font-size:21px;font-family:'Liberation Sans', sans-serif;text-align:center;white-space:nowrap;transform:scaleX(1.018);transform-origin:50% 50%;">78,720</div>
<div style="position:absolute;left:1577.0px;top:990.7px;width:600px;height:25.2px;line-height:21px;font-size:21px;font-family:'Liberation Sans', sans-serif;text-align:center;white-space:nowrap;transform:scaleX(1.017);transform-origin:50% 50%;">0,000</div>
<div style="position:absolute;left:1577.0px;top:1022.7px;width:600px;height:25.2px;line-height:21px;font-size:21px;font-family:'Liberation Sans', sans-serif;text-align:center;white-space:nowrap;transform:scaleX(1.017);transform-origin:50% 50%;">0,000</div>
<div style="position:absolute;left:1577.0px;top:1054.7px;width:600px;height:25.2px;line-height:21px;font-size:21px;font-family:'Liberation Sans', sans-serif;text-align:center;white-space:nowrap;transform:scaleX(1.017);transform-origin:50% 50%;">0,000</div>
<div style="position:absolute;left:1577.0px;top:1086.7px;width:600px;height:25.2px;line-height:21px;font-size:21px;font-family:'Liberation Sans', sans-serif;text-align:center;white-space:nowrap;transform:scaleX(1.017);transform-origin:50% 50%;">0,000</div>
<div style="position:absolute;left:1677.0px;top:990.7px;width:600px;height:25.2px;line-height:21px;font-size:21px;font-family:'Liberation Sans', sans-serif;text-align:center;white-space:nowrap;transform:scaleX(1.018);transform-origin:50% 50%;">31,099</div>
<div style="position:absolute;left:1677.0px;top:1022.7px;width:600px;height:25.2px;line-height:21px;font-size:21px;font-family:'Liberation Sans', sans-serif;text-align:center;white-space:nowrap;transform:scaleX(1.018);transform-origin:50% 50%;">31,099</div>
<div style="position:absolute;left:1677.0px;top:1054.7px;width:600px;height:25.2px;line-height:21px;font-size:21px;font-family:'Liberation Sans', sans-serif;text-align:center;white-space:nowrap;transform:scaleX(1.018);transform-origin:50% 50%;">146,507</div>
<div style="position:absolute;left:1677.0px;top:1086.7px;width:600px;height:25.2px;line-height:21px;font-size:21px;font-family:'Liberation Sans', sans-serif;text-align:center;white-space:nowrap;transform:scaleX(1.018);transform-origin:50% 50%;">49,200</div>
<div style="position:absolute;left:1784.0px;top:990.7px;width:600px;height:25.2px;line-height:21px;font-size:21px;font-family:'Liberation Sans', sans-serif;text-align:center;white-space:nowrap;transform:scaleX(1.018);transform-origin:50% 50%;">31,099</div>
<div style="position:absolute;left:1784.0px;top:1022.7px;width:600px;height:25.2px;line-height:21px;font-size:21px;font-family:'Liberation Sans', sans-serif;text-align:center;white-space:nowrap;transform:scaleX(1.018);transform-origin:50% 50%;">31,099</div>
<div style="position:absolute;left:1784.0px;top:1054.7px;width:600px;height:25.2px;line-height:21px;font-size:21px;font-family:'Liberation Sans', sans-serif;text-align:center;white-space:nowrap;transform:scaleX(1.018);transform-origin:50% 50%;">66,329</div>
<div style="position:absolute;left:1784.0px;top:1086.7px;width:600px;height:25.2px;line-height:21px;font-size:21px;font-family:'Liberation Sans', sans-serif;text-align:center;white-space:nowrap;transform:scaleX(1.018);transform-origin:50% 50%;">49,200</div>
<div style="position:absolute;left:1869.5px;top:990.7px;width:600px;height:25.2px;line-height:21px;font-size:21px;font-family:'Liberation Sans', sans-serif;text-align:center;white-space:nowrap;transform:scaleX(1.017);transform-origin:50% 50%;">0,000</div>
<div style="position:absolute;left:1869.5px;top:1022.7px;width:600px;height:25.2px;line-height:21px;font-size:21px;font-family:'Liberation Sans', sans-serif;text-align:center;white-space:nowrap;transform:scaleX(1.017);transform-origin:50% 50%;">0,000</div>
<div style="position:absolute;left:1869.5px;top:1054.7px;width:600px;height:25.2px;line-height:21px;font-size:21px;font-family:'Liberation Sans', sans-serif;text-align:center;white-space:nowrap;transform:scaleX(1.018);transform-origin:50% 50%;">69,436</div>
<div style="position:absolute;left:1869.5px;top:1086.7px;width:600px;height:25.2px;line-height:21px;font-size:21px;font-family:'Liberation Sans', sans-serif;text-align:center;white-space:nowrap;transform:scaleX(1.019);transform-origin:50% 50%;">-29,520</div>
<div style="position:absolute;left:1988.0px;top:990.7px;width:600px;height:25.2px;line-height:21px;font-size:21px;font-family:'Liberation Sans', sans-serif;text-align:center;white-space:nowrap;transform:scaleX(1.017);transform-origin:50% 50%;">0,000</div>
<div style="position:absolute;left:1988.0px;top:1022.7px;width:600px;height:25.2px;line-height:21px;font-size:21px;font-family:'Liberation Sans', sans-serif;text-align:center;white-space:nowrap;transform:scaleX(1.017);transform-origin:50% 50%;">0,000</div>
<div style="position:absolute;left:1988.0px;top:1054.7px;width:600px;height:25.2px;line-height:21px;font-size:21px;font-family:'Liberation Sans', sans-serif;text-align:center;white-space:nowrap;transform:scaleX(1.018);transform-origin:50% 50%;">138,872</div>
<div style="position:absolute;left:1988.0px;top:1086.7px;width:600px;height:25.2px;line-height:21px;font-size:21px;font-family:'Liberation Sans', sans-serif;text-align:center;white-space:nowrap;transform:scaleX(1.019);transform-origin:50% 50%;">-59,040</div>
<div style="position:absolute;left:2143.5px;top:990.7px;width:600px;height:25.2px;line-height:21px;font-size:21px;font-family:'Liberation Sans', sans-serif;text-align:center;white-space:nowrap;transform:scaleX(1.017);transform-origin:50% 50%;">0,000</div>
<div style="position:absolute;left:2143.5px;top:1022.7px;width:600px;height:25.2px;line-height:21px;font-size:21px;font-family:'Liberation Sans', sans-serif;text-align:center;white-space:nowrap;transform:scaleX(1.017);transform-origin:50% 50%;">0,000</div>
<div style="position:absolute;left:2143.5px;top:1054.7px;width:600px;height:25.2px;line-height:21px;font-size:21px;font-family:'Liberation Sans', sans-serif;text-align:center;white-space:nowrap;transform:scaleX(1.018);transform-origin:50% 50%;">80,178</div>
<div style="position:absolute;left:2143.5px;top:1086.7px;width:600px;height:25.2px;line-height:21px;font-size:21px;font-family:'Liberation Sans', sans-serif;text-align:center;white-space:nowrap;transform:scaleX(1.017);transform-origin:50% 50%;">0,000</div>
<div style="position:absolute;left:2378.5px;top:990.7px;width:600px;height:25.2px;line-height:21px;font-size:21px;font-family:'Liberation Sans', sans-serif;text-align:center;white-space:nowrap;transform:scaleX(1.019);transform-origin:50% 50%;">-22,438</div>
<div style="position:absolute;left:2378.5px;top:1022.7px;width:600px;height:25.2px;line-height:21px;font-size:21px;font-family:'Liberation Sans', sans-serif;text-align:center;white-space:nowrap;transform:scaleX(1.019);transform-origin:50% 50%;">-22,438</div>
<div style="position:absolute;left:2378.5px;top:1054.7px;width:600px;height:25.2px;line-height:21px;font-size:21px;font-family:'Liberation Sans', sans-serif;text-align:center;white-space:nowrap;transform:scaleX(1.017);transform-origin:50% 50%;">7,562</div>
<div style="position:absolute;left:2378.5px;top:1086.7px;width:600px;height:25.2px;line-height:21px;font-size:21px;font-family:'Liberation Sans', sans-serif;text-align:center;white-space:nowrap;transform:scaleX(1.018);transform-origin:50% 50%;">22,562</div>
<div style="position:absolute;left:2466.0px;top:990.7px;width:600px;height:25.2px;line-height:21px;font-size:21px;font-family:'Liberation Sans', sans-serif;text-align:center;white-space:nowrap;transform:scaleX(1.018);transform-origin:50% 50%;">31,099</div>
<div style="position:absolute;left:2466.0px;top:1022.7px;width:600px;height:25.2px;line-height:21px;font-size:21px;font-family:'Liberation Sans', sans-serif;text-align:center;white-space:nowrap;transform:scaleX(1.018);transform-origin:50% 50%;">31,099</div>
<div style="position:absolute;left:2466.0px;top:1054.7px;width:600px;height:25.2px;line-height:21px;font-size:21px;font-family:'Liberation Sans', sans-serif;text-align:center;white-space:nowrap;transform:scaleX(1.018);transform-origin:50% 50%;">183,819</div>
<div style="position:absolute;left:2466.0px;top:1086.7px;width:600px;height:25.2px;line-height:21px;font-size:21px;font-family:'Liberation Sans', sans-serif;text-align:center;white-space:nowrap;transform:scaleX(1.018);transform-origin:50% 50%;">28,371</div>
<div style="position:absolute;left:2556.0px;top:990.7px;width:600px;height:25.2px;line-height:21px;font-size:21px;font-family:'Liberation Sans', sans-serif;text-align:center;white-space:nowrap;transform:scaleX(1.018);transform-origin:50% 50%;">31,099</div>
<div style="position:absolute;left:2556.0px;top:1022.7px;width:600px;height:25.2px;line-height:21px;font-size:21px;font-family:'Liberation Sans', sans-serif;text-align:center;white-space:nowrap;transform:scaleX(1.018);transform-origin:50% 50%;">31,099</div>
<div style="position:absolute;left:2556.0px;top:1054.7px;width:600px;height:25.2px;line-height:21px;font-size:21px;font-family:'Liberation Sans', sans-serif;text-align:center;white-space:nowrap;transform:scaleX(1.018);transform-origin:50% 50%;">29,017</div>
<div style="position:absolute;left:2556.0px;top:1086.7px;width:600px;height:25.2px;line-height:21px;font-size:21px;font-family:'Liberation Sans', sans-serif;text-align:center;white-space:nowrap;transform:scaleX(1.018);transform-origin:50% 50%;">70,029</div>
<div style="position:absolute;left:2643.5px;top:990.7px;width:600px;height:25.2px;line-height:21px;font-size:21px;font-family:'Liberation Sans', sans-serif;text-align:center;white-space:nowrap;transform:scaleX(1.017);transform-origin:50% 50%;">0,000</div>
<div style="position:absolute;left:2643.5px;top:1022.7px;width:600px;height:25.2px;line-height:21px;font-size:21px;font-family:'Liberation Sans', sans-serif;text-align:center;white-space:nowrap;transform:scaleX(1.017);transform-origin:50% 50%;">0,000</div>
<div style="position:absolute;left:2643.5px;top:1054.7px;width:600px;height:25.2px;line-height:21px;font-size:21px;font-family:'Liberation Sans', sans-serif;text-align:center;white-space:nowrap;transform:scaleX(1.018);transform-origin:50% 50%;">20,919</div>
<div style="position:absolute;left:2643.5px;top:1086.7px;width:600px;height:25.2px;line-height:21px;font-size:21px;font-family:'Liberation Sans', sans-serif;text-align:center;white-space:nowrap;transform:scaleX(1.019);transform-origin:50% 50%;">-20,919</div>
<div style="position:absolute;left:2722.0px;top:990.7px;width:600px;height:25.2px;line-height:21px;font-size:21px;font-family:'Liberation Sans', sans-serif;text-align:center;white-space:nowrap;transform:scaleX(1.017);transform-origin:50% 50%;">0,000</div>
<div style="position:absolute;left:2722.0px;top:1022.7px;width:600px;height:25.2px;line-height:21px;font-size:21px;font-family:'Liberation Sans', sans-serif;text-align:center;white-space:nowrap;transform:scaleX(1.017);transform-origin:50% 50%;">5,546</div>
<div style="position:absolute;left:2722.0px;top:1054.7px;width:600px;height:25.2px;line-height:21px;font-size:21px;font-family:'Liberation Sans', sans-serif;text-align:center;white-space:nowrap;transform:scaleX(1.017);transform-origin:50% 50%;">1,908</div>
<div style="position:absolute;left:2722.0px;top:1086.7px;width:600px;height:25.2px;line-height:21px;font-size:21px;font-family:'Liberation Sans', sans-serif;text-align:center;white-space:nowrap;transform:scaleX(1.017);transform-origin:50% 50%;">7,454</div>
<div style="position:absolute;left:2794.0px;top:990.7px;width:600px;height:25.2px;line-height:21px;font-size:21px;font-family:'Liberation Sans', sans-serif;text-align:center;white-space:nowrap;transform:scaleX(1.017);transform-origin:50% 50%;">0,000</div>
<div style="position:absolute;left:2794.0px;top:1022.7px;width:600px;height:25.2px;line-height:21px;font-size:21px;font-family:'Liberation Sans', sans-serif;text-align:center;white-space:nowrap;transform:scaleX(1.019);transform-origin:50% 50%;">-2,290</div>
<div style="position:absolute;left:2794.0px;top:1054.7px;width:600px;height:25.2px;line-height:21px;font-size:21px;font-family:'Liberation Sans', sans-serif;text-align:center;white-space:nowrap;transform:scaleX(1.017);transform-origin:50% 50%;">4,621</div>
<div style="position:absolute;left:2794.0px;top:1086.7px;width:600px;height:25.2px;line-height:21px;font-size:21px;font-family:'Liberation Sans', sans-serif;text-align:center;white-space:nowrap;transform:scaleX(1.017);transform-origin:50% 50%;">2,331</div>
<div style="position:absolute;left:3077.0px;top:990.7px;width:200px;height:25.2px;line-height:21px;font-size:21px;font-family:'Liberation Sans', sans-serif;text-align:center;white-space:nowrap;transform:scaleX(1.017);transform-origin:50% 50%;">0,000</div>
<div style="position:absolute;left:3077.0px;top:1022.7px;width:200px;height:25.2px;line-height:21px;font-size:21px;font-family:'Liberation Sans', sans-serif;text-align:center;white-space:nowrap;transform:scaleX(1.018);transform-origin:50% 50%;">172,000</div>
<div style="position:absolute;left:3077.0px;top:1054.7px;width:200px;height:25.2px;line-height:21px;font-size:21px;font-family:'Liberation Sans', sans-serif;text-align:center;white-space:nowrap;transform:scaleX(1.018);transform-origin:50% 50%;">55,300</div>
<div style="position:absolute;left:3077.0px;top:1086.7px;width:200px;height:25.2px;line-height:21px;font-size:21px;font-family:'Liberation Sans', sans-serif;text-align:center;white-space:nowrap;transform:scaleX(1.018);transform-origin:50% 50%;">522,000</div>
<div style="position:absolute;left:44px;top:1016px;width:147px;height:1px;background:#fff"></div>
<div style="position:absolute;left:55px;top:994px;width:55px;height:50px;background:#D4D0C8;box-sizing:border-box;border-right:3px solid #3C3C3C;border-bottom:3px solid #3C3C3C;"></div>
<div style="position:absolute;left:-46.0px;top:1006.4px;width:255px;height:26.4px;line-height:22px;font-size:22px;font-family:'Liberation Sans', sans-serif;text-align:center;white-space:nowrap;font-weight:bold">+</div>
<div style="position:absolute;left:122px;top:994px;width:55px;height:50px;background:#D4D0C8;box-sizing:border-box;border-right:3px solid #3C3C3C;border-bottom:3px solid #3C3C3C;"></div>
<div style="position:absolute;left:21.0px;top:1005.4px;width:255px;height:26.4px;line-height:22px;font-size:22px;font-family:'Liberation Sans', sans-serif;text-align:center;white-space:nowrap;font-weight:bold">-</div>
<div style="position:absolute;left:328.0px;top:1221.2px;width:600px;height:25.2px;line-height:21px;font-size:21px;font-family:'Liberation Sans', sans-serif;text-align:right;white-space:nowrap;transform:scaleX(0.973);transform-origin:100% 50%;font-weight:bold">Αριθμός κολονών ισοδύναμου συστήματος =</div>
<div style="position:absolute;left:1001.0px;top:1221.2px;width:600px;height:25.2px;line-height:21px;font-size:21px;font-family:'Liberation Sans', sans-serif;text-align:left;white-space:nowrap;transform:scaleX(1.019);transform-origin:0% 50%;">4</div>
<div style="position:absolute;left:1150px;top:1208px;width:152px;height:40px;background:#C0C0C0;"></div>
<div style="position:absolute;left:1398px;top:1208px;width:96px;height:40px;background:#C0C0C0;"></div>
<div style="position:absolute;left:1150px;top:1208px;width:153px;height:41px;border:1px solid #4070E0;box-sizing:border-box"></div>
<div style="position:absolute;left:1398px;top:1208px;width:97px;height:41px;border:1px solid #4070E0;box-sizing:border-box"></div>
<div style="position:absolute;left:1154.0px;top:1221.2px;width:600px;height:25.2px;line-height:21px;font-size:21px;font-family:'Liberation Sans', sans-serif;text-align:left;white-space:nowrap;transform:scaleX(1.019);transform-origin:0% 50%;">12</div>
<div style="position:absolute;left:1402.0px;top:1221.2px;width:600px;height:25.2px;line-height:21px;font-size:21px;font-family:'Liberation Sans', sans-serif;text-align:left;white-space:nowrap;transform:scaleX(1.019);transform-origin:0% 50%;">12</div>
<div style="position:absolute;left:546.0px;top:1221.2px;width:600px;height:25.2px;line-height:21px;font-size:21px;font-family:'Liberation Sans', sans-serif;text-align:right;white-space:nowrap;font-weight:bold">k<span style="font-size:14px;position:relative;top:4px;">ζ</span><span style="font-size:14px;position:relative;top:-10px;">ισοδ</span> =</div>
<div style="position:absolute;left:794.0px;top:1221.2px;width:600px;height:25.2px;line-height:21px;font-size:21px;font-family:'Liberation Sans', sans-serif;text-align:right;white-space:nowrap;font-weight:bold">k<span style="font-size:14px;position:relative;top:4px;">η</span><span style="font-size:14px;position:relative;top:-10px;">ισοδ</span> =</div>
<div style="position:absolute;left:43px;top:1249px;width:65px;height:65px;background:#D4D0C8;box-sizing:border-box;border-right:2px solid #404040;border-bottom:2px solid #404040"></div>
<div style="position:absolute;left:50px;top:1254px;width:50px;height:35px;background:#000"></div>
<div style="position:absolute;left:50px;top:1289px;width:50px;height:12px;background:#FFFF14"></div>
<svg style="position:absolute;left:50px;top:1254px" width="50" height="35"><path d="M14 30 L44 5" stroke="#F6CF7A" stroke-width="6"/><path d="M40 9 L46 3" stroke="#2E8B3E" stroke-width="4"/><path d="M44 6 L48 2" stroke="#D88080" stroke-width="4"/><path d="M12 32 L16 27" stroke="#F0C8A0" stroke-width="5"/><path d="M2 33 V2" stroke="#444" stroke-width="1"/><path d="M2 33 H12" stroke="#444"/></svg>
<div style="position:absolute;left:110px;top:1249px;width:64px;height:65px;background:#BDF7FA;box-sizing:border-box;border-right:2px solid #404040;border-bottom:2px solid #404040"></div>
<div style="position:absolute;left:114px;top:1253px;width:54px;height:55px;background:linear-gradient(#F0F7FE,#DDEDF9)"></div>
<div style="position:absolute;left:175px;top:1249px;width:65px;height:65px;background:#BDF7FA;box-sizing:border-box;border-right:2px solid #404040;border-bottom:2px solid #404040"></div>
<div style="position:absolute;left:179px;top:1253px;width:55px;height:55px;background:linear-gradient(#F0F7FE,#DDEDF9)"></div>
<div style="position:absolute;left:43px;top:1315px;width:65px;height:65px;background:#BDF7FA;box-sizing:border-box;border-right:2px solid #404040;border-bottom:2px solid #404040"></div>
<div style="position:absolute;left:47px;top:1319px;width:55px;height:55px;background:linear-gradient(#F0F7FE,#DDEDF9)"></div>
<div style="position:absolute;left:109px;top:1315px;width:66px;height:66px;background:#D4D0C8;box-sizing:border-box;border-right:2px solid #404040;border-bottom:2px solid #404040"></div>
<div style="position:absolute;left:43px;top:1380px;width:65px;height:65px;background:#BDF7FA;box-sizing:border-box;border-right:2px solid #404040;border-bottom:2px solid #404040"></div>
<div style="position:absolute;left:47px;top:1384px;width:55px;height:55px;background:linear-gradient(#F0F7FE,#DDEDF9)"></div>
<svg style="position:absolute;left:110px;top:1249px" width="64" height="65"><defs><linearGradient id="ag" x1="0" x2="1"><stop offset="0" stop-color="#4FB8F0"/><stop offset="1" stop-color="#0A6BC8"/></linearGradient></defs><g transform="translate(32,32) rotate(-90)"><path d="M0 -12 L13 0 L6 0 L6 11 L-6 11 L-6 0 L-13 0Z" fill="url(#ag)"/></g></svg>
<svg style="position:absolute;left:175px;top:1249px" width="65" height="65"><defs><linearGradient id="ag" x1="0" x2="1"><stop offset="0" stop-color="#4FB8F0"/><stop offset="1" stop-color="#0A6BC8"/></linearGradient></defs><g transform="translate(32,32) rotate(90)"><path d="M0 -12 L13 0 L6 0 L6 11 L-6 11 L-6 0 L-13 0Z" fill="url(#ag)"/></g></svg>
<svg style="position:absolute;left:43px;top:1315px" width="65" height="65"><defs><linearGradient id="ag" x1="0" x2="1"><stop offset="0" stop-color="#4FB8F0"/><stop offset="1" stop-color="#0A6BC8"/></linearGradient></defs><g transform="translate(32,33)"><path d="M0 -12 L13 0 L6 0 L6 11 L-6 11 L-6 0 L-13 0Z" fill="url(#ag)"/></g></svg>
<svg style="position:absolute;left:43px;top:1380px" width="65" height="65"><defs><linearGradient id="ag" x1="0" x2="1"><stop offset="0" stop-color="#4FB8F0"/><stop offset="1" stop-color="#0A6BC8"/></linearGradient></defs><g transform="translate(32,31) rotate(180)"><path d="M0 -12 L13 0 L6 0 L6 11 L-6 11 L-6 0 L-13 0Z" fill="url(#ag)"/></g></svg>
<svg style="position:absolute;left:118px;top:1323px" width="48" height="45"><rect x="0" y="0" width="46" height="44" fill="#000"/><rect x="0" y="0" width="44" height="40" fill="#EEF0F6" stroke="#6A80A0"/><path d="M1 8 H43 M1 16 H43 M1 24 H43 M1 32 H43 M11 1 V39 M22 1 V39 M33 1 V39" stroke="#B8B8B8" stroke-width="1.5"/><path d="M18 8 L42 30 M40 10 L18 32" stroke="#F03A1A" stroke-width="4"/></svg>
<div style="position:absolute;left:43px;top:1471px;width:65px;height:66px;background:#FF8000;box-sizing:border-box;border-right:2px solid #404040;border-bottom:2px solid #404040"></div>
<svg style="position:absolute;left:43px;top:1471px" width="65" height="66"><path d="M38 13 C38 5, 29 4, 26 15 L20 45 C18 54, 11 54, 9 48" stroke="#111" stroke-width="5.5" fill="none" stroke-linecap="round"/><path d="M15 23.5 H36" stroke="#111" stroke-width="4"/><path d="M30 28 L45 47 M46 28 L29 47" stroke="#111" stroke-width="4.5" stroke-linecap="round"/><path d="M26 12 C28 8, 32 7, 34 9" stroke="#777" stroke-width="1.5" fill="none"/></svg>
<svg style="position:absolute;left:0;top:0" width="3200" height="2333"><defs><marker id="ab" markerWidth="14" markerHeight="12" refX="13" refY="6" orient="auto" markerUnits="userSpaceOnUse"><path d="M0 0 L14 6 L0 12Z" fill="#000"/></marker><marker id="ar" markerWidth="14" markerHeight="12" refX="13" refY="6" orient="auto" markerUnits="userSpaceOnUse"><path d="M0 0 L14 6 L0 12Z" fill="#FF0000"/></marker><marker id="au" markerWidth="14" markerHeight="12" refX="13" refY="6" orient="auto" markerUnits="userSpaceOnUse"><path d="M0 0 L14 6 L0 12Z" fill="#0000FF"/></marker></defs><ellipse cx="1164.5" cy="1696" rx="512" ry="360" transform="rotate(-22.3 1164.5 1696)" fill="none" stroke="#3B5E8C" stroke-width="5"/><rect x="819" y="2197" width="66" height="43" rx="2" fill="#FFCC99" stroke="#3B5E8C" stroke-width="4"/><rect x="1526" y="2197.5" width="45" height="41" rx="2" fill="#FFCC99" stroke="#3B5E8C" stroke-width="4"/><rect x="-52" y="-15" width="104" height="30" fill="#FFCC99" stroke="#3B5E8C" stroke-width="4" transform="translate(852 1685) rotate(-30)"/><rect x="-30" y="-16" width="60" height="32" fill="#FFCC99" stroke="#3B5E8C" stroke-width="4" transform="translate(1548.6 1685) rotate(44.5)"/><path d="M863 2218 V1366" stroke="#000" stroke-width="2.2" marker-end="url(#ab)"/><path d="M863 2218 H1774" stroke="#000" stroke-width="2.2" marker-end="url(#ab)"/><path d="M863 2218 L587 1628" stroke="#0000FF" stroke-width="2" marker-end="url(#au)"/><path d="M863 2218 L1498 1973" stroke="#0000FF" stroke-width="2" marker-end="url(#au)"/><path d="M1160 1696 L988 1303" stroke="#FF0000" stroke-width="2" marker-end="url(#ar)"/><path d="M1160 1696 L1591 1533" stroke="#FF0000" stroke-width="2" marker-end="url(#ar)"/><circle cx="1160" cy="1696" r="10.5" fill="#FF0000" stroke="#3B5E8C" stroke-width="3.5"/><circle cx="1193.5" cy="1951.5" r="26" fill="none" stroke="#3B5E8C" stroke-width="4"/><path d="M1175.1154 1933.1154 L1211.8846 1969.8846 M1211.8846 1933.1154 L1175.1154 1969.8846" stroke="#3B5E8C" stroke-width="4"/><rect x="-30" y="-21" width="60" height="42" fill="#00CCFF" fill-opacity="0.5" stroke="#33CCEE" stroke-opacity="0.8" stroke-width="1" transform="translate(1013.4 1362.6) rotate(-22.3)"/><rect x="-30" y="-21" width="60" height="42" fill="#00CCFF" fill-opacity="0.5" stroke="#33CCEE" stroke-opacity="0.8" stroke-width="1" transform="translate(1636.8 1516) rotate(-22.3)"/><rect x="-30" y="-21" width="60" height="42" fill="#00CCFF" fill-opacity="0.5" stroke="#33CCEE" stroke-opacity="0.8" stroke-width="1" transform="translate(690.6 1875.5) rotate(-22.3)"/><rect x="-30" y="-21" width="60" height="42" fill="#00CCFF" fill-opacity="0.5" stroke="#33CCEE" stroke-opacity="0.8" stroke-width="1" transform="translate(1331.2 2029.4) rotate(-22.3)"/></svg>
<div style="position:absolute;left:800.0px;top:1378.6px;width:40px;height:24.0px;line-height:20px;font-size:20px;font-family:'Liberation Sans', sans-serif;text-align:center;white-space:nowrap;font-weight:bold">Y</div>
<div style="position:absolute;left:1775.5px;top:2242.1px;width:40px;height:24.0px;line-height:20px;font-size:20px;font-family:'Liberation Sans', sans-serif;text-align:center;white-space:nowrap;font-weight:bold">X</div>
<div style="position:absolute;left:804.0px;top:2252.1px;width:40px;height:24.0px;line-height:20px;font-size:20px;font-family:'Liberation Sans', sans-serif;text-align:center;white-space:nowrap;">1</div>
<div style="position:absolute;left:1510.0px;top:2252.1px;width:40px;height:24.0px;line-height:20px;font-size:20px;font-family:'Liberation Sans', sans-serif;text-align:center;white-space:nowrap;">2</div>
<div style="position:absolute;left:762.0px;top:1714.1px;width:40px;height:24.0px;line-height:20px;font-size:20px;font-family:'Liberation Sans', sans-serif;text-align:center;white-space:nowrap;">3</div>
<div style="position:absolute;left:1519.0px;top:1730.6px;width:40px;height:24.0px;line-height:20px;font-size:20px;font-family:'Liberation Sans', sans-serif;text-align:center;white-space:nowrap;">4</div>
<div style="position:absolute;left:960.0px;top:1317.4px;width:600px;height:22.8px;line-height:19px;font-size:19px;font-family:'Liberation Sans', sans-serif;text-align:left;white-space:nowrap;font-weight:bold;color:#FF0000">yct</div>
<div style="position:absolute;left:560.0px;top:1642.9px;width:600px;height:22.8px;line-height:19px;font-size:19px;font-family:'Liberation Sans', sans-serif;text-align:left;white-space:nowrap;font-weight:bold;color:#0000FF">y&#x27;</div>
<div style="position:absolute;left:1514.0px;top:1998.4px;width:600px;height:22.8px;line-height:19px;font-size:19px;font-family:'Liberation Sans', sans-serif;text-align:left;white-space:nowrap;font-weight:bold;color:#0000FF">x&#x27;</div>
<div style="position:absolute;left:960.0px;top:1407.8px;width:600px;height:24.4px;line-height:20.3px;font-size:20.3px;font-family:'Liberation Sans', sans-serif;text-align:left;white-space:nowrap;color:#000">C 2 ( 521 x 399 )</div>
<div style="position:absolute;left:1581.0px;top:1559.8px;width:600px;height:24.4px;line-height:20.3px;font-size:20.3px;font-family:'Liberation Sans', sans-serif;text-align:left;white-space:nowrap;color:#000">C 1 ( 521 x 399 )</div>
<div style="position:absolute;left:637.5px;top:1920.3px;width:600px;height:24.4px;line-height:20.3px;font-size:20.3px;font-family:'Liberation Sans', sans-serif;text-align:left;white-space:nowrap;color:#000">C 3 ( 521 x 399 )</div>
<div style="position:absolute;left:1246.0px;top:2074.8px;width:600px;height:24.4px;line-height:20.3px;font-size:20.3px;font-family:'Liberation Sans', sans-serif;text-align:left;white-space:nowrap;color:#000">C 4 ( 521 x 399 )</div>
<div style="position:absolute;left:1606.0px;top:1560.9px;width:600px;height:22.8px;line-height:19px;font-size:19px;font-family:'Liberation Sans', sans-serif;text-align:left;white-space:nowrap;font-weight:bold;color:#FF0000">xct</div>
<div style="position:absolute;left:3181px;top:168px;width:19px;height:2165px;background:linear-gradient(90deg,#7797C3,#8EABD3 50%,#7B9BC8)"></div>
<div style="position:absolute;left:3196px;top:168px;width:4px;height:2165px;background:#A9C1E3"></div>
<div style="position:absolute;left:3182px;top:168px;width:14px;height:6px;background:#E6EEF8;border:1px solid #8AA6CF;box-sizing:border-box"></div>
<div style="position:absolute;left:3182px;top:175px;width:14px;height:15px;background:linear-gradient(90deg,#B9CCE6,#DCE7F5 50%,#B9CCE6)"></div>
<svg style="position:absolute;left:3183px;top:178px" width="12" height="10"><path d="M1 8 L6 3 L11 8Z" fill="#4B5F84"/></svg>
<div style="position:absolute;left:3182px;top:191px;width:14px;height:380px;background:linear-gradient(90deg,#C6D5EA,#F2F6FB 40%,#E2EAF5 60%,#BFCFE6);border:1px solid #8AA3C9;border-radius:2px;box-sizing:border-box"></div>
<svg style="position:absolute;left:3184px;top:375px" width="10" height="10"><path d="M1 2 H9 M1 5 H9 M1 8 H9" stroke="#5A6E90"/></svg>
<svg style="position:absolute;left:3183px;top:2322px" width="12" height="8"><path d="M1 1 H11 L6 6Z" fill="#4B5F84"/></svg>
<div style="position:absolute;left:0px;top:2333px;width:3200px;height:15px;background:linear-gradient(#A8C0E2,#9AB5DC)"></div>
<div style="position:absolute;left:0px;top:2333px;width:3200px;height:1px;background:#8CA9D6"></div>
<div style="position:absolute;left:0px;top:2334px;width:58px;height:13px;background:linear-gradient(#DCE8F7,#C4D7F0)"></div>
<svg style="position:absolute;left:2px;top:2335px" width="56" height="12"><path d="M4 2 V10" stroke="#2A4F8E" stroke-width="1.5"/><path d="M11 2 L5 6 L11 10Z" fill="#2A4F8E"/><path d="M25 2 L19 6 L25 10Z" fill="#2A4F8E"/><path d="M32 2 L38 6 L32 10Z" fill="#2A4F8E"/><path d="M45 2 L51 6 L45 10Z" fill="#2A4F8E"/><path d="M52 2 V10" stroke="#2A4F8E" stroke-width="1.5"/></svg>
<svg style="position:absolute;left:58px;top:2333px" width="136" height="15"><path d="M1 0 H52 L46 14 H4Z" fill="#F3F8F4"/><path d="M4 10 H48 L46 14 H4Z" fill="#7CC08F" opacity="0.7"/><path d="M56 1 H104 L96 14 H50Z" fill="#5BA876"/><path d="M56 1 H104 L101 6 H53Z" fill="#8FCBA3"/><path d="M100 1 H134 L126 14 H94Z" fill="#C9DBF2" stroke="#9DB5D8"/><rect x="105" y="4" width="12" height="8" rx="2" fill="#E8EEF8" stroke="#6A7FA8"/><circle cx="104" cy="4" r="2.5" fill="#F4B41A"/></svg>
<div style="position:absolute;left:54.0px;top:2335.0px;width:60px;height:15.6px;line-height:13px;font-size:13px;font-family:'Liberation Sans', sans-serif;text-align:center;white-space:nowrap;font-weight:bold;color:#000">B_d_b</div>
<div style="position:absolute;left:101.0px;top:2335.0px;width:60px;height:15.6px;line-height:13px;font-size:13px;font-family:'Liberation Sans', sans-serif;text-align:center;white-space:nowrap;color:#F0FFF4">new</div>
<div style="position:absolute;left:2440px;top:2334px;width:742px;height:13px;background:linear-gradient(#8AA8D2,#7797C3)"></div>
<div style="position:absolute;left:2441px;top:2335px;width:4px;height:11px;background:#F0F4FA;border:1px solid #7A8FB0;box-sizing:border-box"></div>
<svg style="position:absolute;left:2450px;top:2335px" width="10" height="12"><path d="M8 1 L2 6 L8 11Z" fill="#3A4E78"/></svg>
<div style="position:absolute;left:2462px;top:2335px;width:124px;height:12px;background:linear-gradient(#F2F6FB,#CCD9EA);border:1px solid #8AA3C9;border-radius:2px;box-sizing:border-box"></div>
<svg style="position:absolute;left:2519px;top:2337px" width="10" height="8"><path d="M2 1 V7 M4 1 V7 M6 1 V7 M8 1 V7" stroke="#5A6E90"/></svg>
<svg style="position:absolute;left:3163px;top:2335px" width="10" height="12"><path d="M2 1 L8 6 L2 11Z" fill="#3A4E78"/></svg>
<div style="position:absolute;left:3176px;top:2335px;width:4px;height:12px;background:#F0F4FA;border:1px solid #7A8FB0;box-sizing:border-box"></div>
<div style="position:absolute;left:0px;top:2348px;width:3200px;height:23px;background:linear-gradient(#E4EEFA 0%,#D3E3F6 50%,#C5D9F1 100%)"></div>
<div style="position:absolute;left:0px;top:2348px;width:3200px;height:1px;background:#6D8FC0"></div>
<div style="position:absolute;left:7.5px;top:2353.4px;width:600px;height:15.0px;line-height:12.5px;font-size:12.5px;font-family:'Liberation Sans', sans-serif;text-align:left;white-space:nowrap;transform:scaleX(0.880);transform-origin:0% 50%;color:#27388A">Ready</div>
<div style="position:absolute;left:47px;top:2350px;width:1px;height:20px;background:#B3C8E6"></div>
<svg style="position:absolute;left:55px;top:2352px" width="16" height="15"><rect x="1" y="2" width="14" height="12" fill="#fff" stroke="#5577AA"/><rect x="1" y="2" width="14" height="3" fill="#4A79C8"/><path d="M3 8 H13 M3 11 H13" stroke="#8AA6D0"/><circle cx="3" cy="3" r="2.5" fill="#E04020"/></svg>
<div style="position:absolute;left:80px;top:2350px;width:1px;height:20px;background:#B3C8E6"></div>
<div style="position:absolute;left:2956px;top:2350px;width:1px;height:20px;background:#8EABD4"></div>
<div style="position:absolute;left:2962px;top:2351px;width:54px;height:18px;background:linear-gradient(#D8E6F8,#BCD2EE);border:1px solid #9FB8DC;box-sizing:border-box"></div>
<div style="position:absolute;left:2963px;top:2352px;width:18px;height:16px;background:linear-gradient(#FCE6B6,#F8C774)"></div>
<svg style="position:absolute;left:2964px;top:2353px" width="52" height="14"><rect x="2" y="2" width="12" height="10" fill="#fff" stroke="#555"/><path d="M2 5 H14 M2 8 H14 M6 2 V12 M10 2 V12" stroke="#555"/><rect x="21" y="2" width="11" height="10" fill="#fff" stroke="#555"/><rect x="23" y="4" width="7" height="6" fill="none" stroke="#888"/><rect x="38" y="2" width="11" height="10" fill="#ccc" stroke="#555"/><rect x="40" y="2" width="3" height="5" fill="#fff"/><rect x="44" y="2" width="3" height="5" fill="#fff"/></svg>
<div style="position:absolute;left:3024.0px;top:2354.0px;width:600px;height:15.6px;line-height:13px;font-size:13px;font-family:'Liberation Sans', sans-serif;text-align:left;white-space:nowrap;color:#1F3A78">160%</div>
<svg style="position:absolute;left:3060px;top:2350px" width="140" height="20"><circle cx="9" cy="10" r="7.5" fill="#E4EEF9" stroke="#4D6A9A"/><path d="M5 10 H13" stroke="#3A4E78" stroke-width="2.5"/><path d="M17 10.5 H119" stroke="#F2F6FB" stroke-width="1.5"/><path d="M77 6 V15" stroke="#F2F6FB"/><path d="M72 4 H81 V12 L76.5 16 L72 12Z" fill="#E8F0FA" stroke="#4D6A9A"/><circle cx="127" cy="10" r="7.5" fill="#E4EEF9" stroke="#4D6A9A"/><path d="M123 10 H131 M127 6 V14" stroke="#3A4E78" stroke-width="2.5"/></svg>
<div style="position:absolute;left:0px;top:2371px;width:3200px;height:29px;background:#D4D0C8"></div>
<div style="position:absolute;left:0px;top:2371px;width:3200px;height:1px;background:#FFFFFF"></div>
<div style="position:absolute;left:2px;top:2374px;width:52px;height:22px;background:#D4D0C8;border:1px solid;border-color:#fff #404040 #404040 #fff;box-sizing:border-box"></div>
<svg style="position:absolute;left:5px;top:2377px" width="16" height="16"><path d="M1 3 L7 2 V7 L1 7.5Z" fill="#E8541E"/><path d="M8 2 L14 1 V7 L8 7Z" fill="#6DBA2C"/><path d="M1 8.5 L7 8 V13 L1 12Z" fill="#2D8CE6"/><path d="M8 8 L14 8 V14 L8 13Z" fill="#F7C21A"/></svg>
<div style="position:absolute;left:22.0px;top:2379.0px;width:600px;height:15.6px;line-height:13px;font-size:13px;font-family:'Liberation Sans', sans-serif;text-align:left;white-space:nowrap;font-weight:bold;color:#000">Start</div>
<div style="position:absolute;left:61px;top:2376px;width:2px;height:18px;background:#fff"></div>
<div style="position:absolute;left:72px;top:2378px;width:16px;height:15px;background:#0A246A"></div>
<div style="position:absolute;left:70.0px;top:2380.7px;width:20px;height:13.2px;line-height:11px;font-size:11px;font-family:'Liberation Sans', sans-serif;text-align:center;white-space:nowrap;color:#fff">EN</div>
<div style="position:absolute;left:92px;top:2375px;width:1px;height:22px;background:#999"></div>
<svg style="position:absolute;left:100px;top:2378px" width="16" height="16"><rect x="1" y="1" width="13" height="12" rx="2" fill="#FFFFA0" stroke="#000"/><text x="7.5" y="11" font-size="10" font-family="Liberation Sans" font-weight="bold" text-anchor="middle" fill="#000080">?</text></svg>
<div style="position:absolute;left:120px;top:2375px;width:1px;height:22px;background:#999"></div>
<svg style="position:absolute;left:126px;top:2377px" width="12" height="16"><rect x="2" y="2" width="6" height="4" fill="none" stroke="#000"/><rect x="4" y="0.5" width="6" height="4" fill="none" stroke="#000"/><path d="M3 11 H9 L6 14Z" fill="#000"/></svg>
<div style="position:absolute;left:209px;top:2376px;width:2px;height:18px;background:#fff"></div>
<svg style="position:absolute;left:220px;top:2377px" width="18" height="18"><rect x="1" y="1" width="15" height="15" fill="#F8D33A" stroke="#D88A00"/><ellipse cx="8.5" cy="8.5" rx="4" ry="5" fill="none" stroke="#C86400" stroke-width="2.5"/></svg>
<svg style="position:absolute;left:242px;top:2377px" width="18" height="18"><circle cx="9" cy="9" r="7.5" fill="#DB4437"/><path d="M9 9 L2.5 12.8 A7.5 7.5 0 0 0 15.5 12.8Z" fill="#0F9D58"/><path d="M9 9 L15.5 12.8 A7.5 7.5 0 0 0 9 1.5Z" fill="#F4B400"/><circle cx="9" cy="9" r="3.5" fill="#4285F4" stroke="#fff" stroke-width="1.5"/></svg>
<svg style="position:absolute;left:265px;top:2377px" width="18" height="18"><text x="9" y="15" font-size="17" font-family="Liberation Serif" font-style="italic" font-weight="bold" fill="#1E7FD8" text-anchor="middle">e</text><ellipse cx="9" cy="9" rx="8" ry="3" fill="none" stroke="#F0B020" stroke-width="1.3" transform="rotate(-30 9 9)"/></svg>
<svg style="position:absolute;left:289px;top:2377px" width="18" height="18"><rect x="1" y="1" width="15" height="15" fill="#F8D33A" stroke="#D88A00"/><ellipse cx="8.5" cy="8.5" rx="4" ry="5" fill="none" stroke="#C86400" stroke-width="2.5"/></svg>
<svg style="position:absolute;left:312px;top:2377px" width="18" height="18"><circle cx="9" cy="9" r="7.5" fill="#3A5CC8"/><path d="M2 9 A7 7 0 0 0 16 9 Q14 4 9 5 Q12 8 8 10 Q5 9 5 6 Q2 6 2 9Z" fill="#E8731A"/></svg>
<svg style="position:absolute;left:336px;top:2377px" width="18" height="18"><rect x="2" y="2" width="13" height="14" rx="2" fill="#3A7BD5"/><text x="8.5" y="13" font-size="11" font-family="Liberation Sans" font-weight="bold" fill="#fff" text-anchor="middle">G</text></svg>
<svg style="position:absolute;left:358px;top:2377px" width="18" height="18"><circle cx="9" cy="9" r="7.5" fill="#E8EEF8" stroke="#506890"/><path d="M7 5 L13 9 L7 13Z" fill="#2050A8"/></svg>
<div style="position:absolute;left:491px;top:2376px;width:2px;height:18px;background:#fff"></div>
<div style="position:absolute;left:497px;top:2374px;width:160px;height:22px;background:#D4D0C8;border:1px solid;border-color:#fff #404040 #404040 #fff;box-sizing:border-box"></div>
<svg style="position:absolute;left:501px;top:2377px" width="18" height="18"><circle cx="8" cy="9" r="6.5" fill="#DB4437"/><path d="M8 9 L2.4 12.2 A6.5 6.5 0 0 0 13.6 12.2Z" fill="#0F9D58"/><path d="M8 9 L13.6 12.2 A6.5 6.5 0 0 0 8 2.5Z" fill="#F4B400"/><circle cx="8" cy="9" r="3" fill="#4285F4" stroke="#fff"/></svg>
<div style="position:absolute;left:521.0px;top:2380.7px;width:132px;height:13.2px;line-height:11px;font-size:11px;font-family:'Liberation Sans', sans-serif;text-align:left;white-space:nowrap;overflow:hidden;color:#000">Οι 3 μελέτες του παραρτ...</div>
<div style="position:absolute;left:660px;top:2374px;width:160px;height:22px;background:#D4D0C8;border:1px solid;border-color:#fff #404040 #404040 #fff;box-sizing:border-box"></div>
<svg style="position:absolute;left:664px;top:2377px" width="18" height="18"><circle cx="8" cy="9" r="7" fill="#1EA8E8"/><text x="8" y="13" font-size="11" font-family="Liberation Sans" font-weight="bold" fill="#fff" text-anchor="middle">S</text></svg>
<div style="position:absolute;left:684.0px;top:2380.7px;width:132px;height:13.2px;line-height:11px;font-size:11px;font-family:'Liberation Sans', sans-serif;text-align:left;white-space:nowrap;overflow:hidden;color:#000">Skype™ [4] - costasa_</div>
<div style="position:absolute;left:822px;top:2374px;width:160px;height:22px;background:#D4D0C8;border:1px solid;border-color:#fff #404040 #404040 #fff;box-sizing:border-box"></div>
<svg style="position:absolute;left:826px;top:2377px" width="18" height="18"><path d="M1 4 H6 L8 6 H15 V14 H1Z" fill="#F5D56A" stroke="#B8902A"/></svg>
<div style="position:absolute;left:846.0px;top:2380.7px;width:132px;height:13.2px;line-height:11px;font-size:11px;font-family:'Liberation Sans', sans-serif;text-align:left;white-space:nowrap;overflow:hidden;color:#000">Panos_book_B</div>
<div style="position:absolute;left:985px;top:2374px;width:160px;height:22px;background:#D4D0C8;border:1px solid;border-color:#fff #404040 #404040 #fff;box-sizing:border-box"></div>
<svg style="position:absolute;left:989px;top:2377px" width="18" height="18"><rect x="1" y="2" width="14" height="14" fill="#fff" stroke="#2050A8"/><text x="8" y="14" font-size="12" font-family="Liberation Serif" font-weight="bold" fill="#2050A8" text-anchor="middle">W</text></svg>
<div style="position:absolute;left:1009.0px;top:2380.7px;width:132px;height:13.2px;line-height:11px;font-size:11px;font-family:'Liberation Sans', sans-serif;text-align:left;white-space:nowrap;overflow:hidden;color:#000">JL_Book-B Appendix C (μ...</div>
<div style="position:absolute;left:1148px;top:2374px;width:160px;height:22px;background:#D4D0C8;border:1px solid;border-color:#fff #404040 #404040 #fff;box-sizing:border-box"></div>
<svg style="position:absolute;left:1152px;top:2377px" width="18" height="18"><path d="M1 4 H6 L8 6 H15 V14 H1Z" fill="#F5D56A" stroke="#B8902A"/></svg>
<div style="position:absolute;left:1172.0px;top:2380.7px;width:132px;height:13.2px;line-height:11px;font-size:11px;font-family:'Liberation Sans', sans-serif;text-align:left;white-space:nowrap;overflow:hidden;color:#000">ICA_B NEW</div>
<div style="position:absolute;left:1311px;top:2374px;width:160px;height:22px;background:#D4D0C8;border:1px solid;border-color:#fff #404040 #404040 #fff;box-sizing:border-box"></div>
<svg style="position:absolute;left:1315px;top:2377px" width="18" height="18"><path d="M1 4 H6 L8 6 H15 V14 H1Z" fill="#F5D56A" stroke="#B8902A"/></svg>
<div style="position:absolute;left:1335.0px;top:2380.7px;width:132px;height:13.2px;line-height:11px;font-size:11px;font-family:'Liberation Sans', sans-serif;text-align:left;white-space:nowrap;overflow:hidden;color:#000">piSUITE800</div>
<div style="position:absolute;left:1474px;top:2374px;width:160px;height:22px;background:#D4D0C8;border:1px solid;border-color:#fff #404040 #404040 #fff;box-sizing:border-box"></div>
<svg style="position:absolute;left:1478px;top:2377px" width="18" height="18"><rect x="2" y="1" width="12" height="15" fill="#8FB8F0"/><circle cx="8" cy="9" r="3.5" fill="#C02020"/></svg>
<div style="position:absolute;left:1498.0px;top:2380.7px;width:132px;height:13.2px;line-height:11px;font-size:11px;font-family:'Liberation Sans', sans-serif;text-align:left;white-space:nowrap;overflow:hidden;color:#000">Spider</div>
<div style="position:absolute;left:1638px;top:2374px;width:160px;height:22px;background:#D4D0C8;border:1px solid;border-color:#fff #404040 #404040 #fff;box-sizing:border-box"></div>
<svg style="position:absolute;left:1642px;top:2377px" width="18" height="18"><path d="M1 4 H6 L8 6 H15 V14 H1Z" fill="#F5D56A" stroke="#B8902A"/></svg>
<div style="position:absolute;left:1662.0px;top:2380.7px;width:132px;height:13.2px;line-height:11px;font-size:11px;font-family:'Liberation Sans', sans-serif;text-align:left;white-space:nowrap;overflow:hidden;color:#000">piSUITE800</div>
<div style="position:absolute;left:1801px;top:2374px;width:160px;height:22px;background:#D4D0C8;border:1px solid;border-color:#fff #404040 #404040 #fff;box-sizing:border-box"></div>
<svg style="position:absolute;left:1805px;top:2377px" width="18" height="18"><rect x="1" y="1" width="15" height="15" fill="#1E8AD8"/><text x="8" y="12" font-size="10" font-family="Liberation Serif" font-style="italic" fill="#fff" text-anchor="middle">πi</text></svg>
<div style="position:absolute;left:1825.0px;top:2380.7px;width:132px;height:13.2px;line-height:11px;font-size:11px;font-family:'Liberation Sans', sans-serif;text-align:left;white-space:nowrap;overflow:hidden;color:#000">[HoloMETRICA + Stereo...</div>
<div style="position:absolute;left:1963px;top:2374px;width:160px;height:22px;background:#D4D0C8;border:1px solid;border-color:#fff #404040 #404040 #fff;box-sizing:border-box"></div>
<svg style="position:absolute;left:1967px;top:2377px" width="18" height="18"><path d="M3 14 L12 3 L14 5 L5 15Z" fill="#E8A030"/><path d="M3 14 L5 15 L2 16Z" fill="#30A040"/></svg>
<div style="position:absolute;left:1987.0px;top:2380.7px;width:132px;height:13.2px;line-height:11px;font-size:11px;font-family:'Liberation Sans', sans-serif;text-align:left;white-space:nowrap;overflow:hidden;color:#000">Adobe Photoshop</div>
<div style="position:absolute;left:2126px;top:2374px;width:160px;height:22px;background:#E6E3DE;border:1px solid;border-color:#404040 #fff #fff #404040;box-sizing:border-box;background-image:repeating-linear-gradient(45deg,#D4D0C8 0 1px,#ECEAE6 1px 2px)"></div>
<svg style="position:absolute;left:2130px;top:2377px" width="18" height="18"><rect x="1" y="1" width="15" height="15" fill="#fff" stroke="#1E7A3A"/><text x="8.5" y="13" font-size="12" font-family="Liberation Serif" font-style="italic" font-weight="bold" fill="#1E7A3A" text-anchor="middle">x</text></svg>
<div style="position:absolute;left:2150.0px;top:2380.7px;width:132px;height:13.2px;line-height:11px;font-size:11px;font-family:'Liberation Sans', sans-serif;text-align:left;white-space:nowrap;overflow:hidden;color:#000;font-weight:bold">Microsoft Excel - Origi...</div>
<div style="position:absolute;left:3070px;top:2374px;width:128px;height:24px;background:#D4D0C8;border:1px solid;border-color:#808080 #fff #fff #808080;box-sizing:border-box"></div>
<div style="position:absolute;left:3075.0px;top:2377.3px;width:600px;height:18.0px;line-height:15px;font-size:15px;font-family:'Liberation Sans', sans-serif;text-align:left;white-space:nowrap;font-weight:bold">«</div>
<svg style="position:absolute;left:3088px;top:2376px" width="54" height="20"><circle cx="7" cy="7" r="5" fill="#7EC03A"/><circle cx="11" cy="12" r="6" fill="#F08A10"/><text x="11" y="16" font-size="9" font-family="Liberation Sans" font-weight="bold" text-anchor="middle">4</text><rect x="19" y="2" width="15" height="16" rx="3" fill="#E02020"/><circle cx="26.5" cy="10" r="5" fill="#fff"/><circle cx="26.5" cy="10" r="3" fill="#E06020"/><rect x="37" y="5" width="9" height="8" fill="#60C0F0" stroke="#4060A0"/><rect x="42" y="2" width="8" height="7" fill="#304070"/><ellipse cx="42" cy="16" rx="5" ry="2" fill="#A0B0D0"/></svg>
<div style="position:absolute;left:3148.0px;top:2380.0px;width:600px;height:15.6px;line-height:13px;font-size:13px;font-family:'Liberation Sans', sans-serif;text-align:left;white-space:nowrap;color:#000">6:21 μμ</div></body></html>
